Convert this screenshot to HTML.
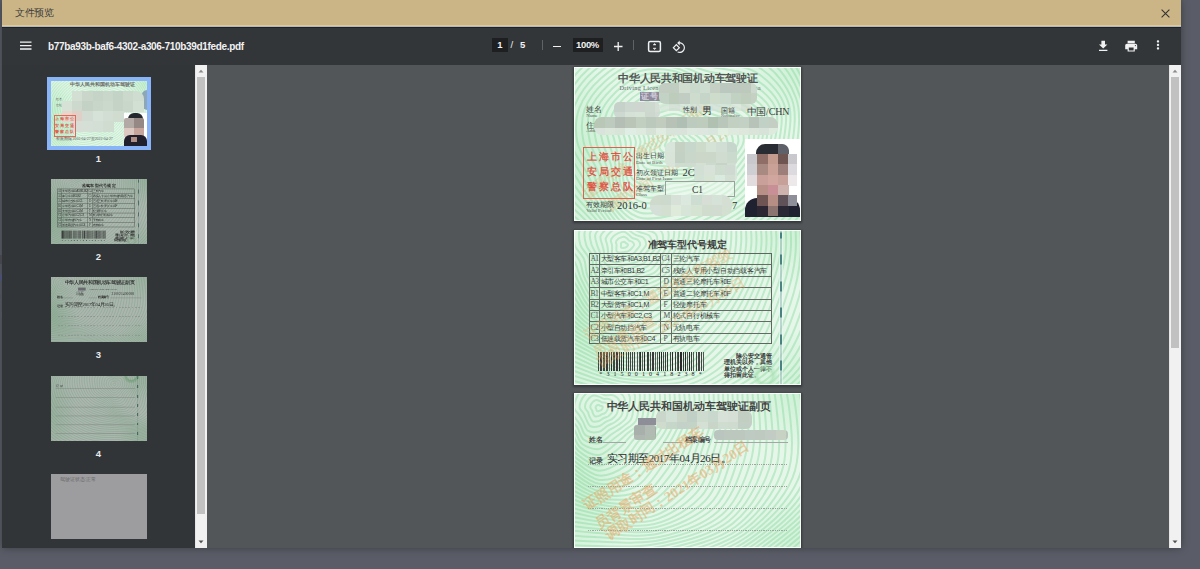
<!DOCTYPE html><html><head><meta charset="utf-8"><style>
*{margin:0;padding:0;box-sizing:border-box}
html,body{width:1200px;height:569px;overflow:hidden;background:#5a5d67;font-family:"Liberation Sans",sans-serif;position:relative}
.a{position:absolute}
#modal{position:absolute;left:2px;top:0;width:1179px;height:548px;background:#323639;box-shadow:0 0 8px rgba(0,0,0,.35)}
#hdr{position:absolute;left:2px;top:0;width:1179px;height:25px;background:#cbb586}
#hdr .t{position:absolute;left:13.2px;top:7px;font-size:9.5px;color:#3c3c3c;line-height:12px;letter-spacing:-0.35px}
#tb{position:absolute;left:2px;top:28px;width:1179px;height:37px;background:#323639}
#side{position:absolute;left:2px;top:65px;width:193px;height:483px;background:#313538;overflow:hidden}
#sscroll{position:absolute;left:195px;top:65px;width:12px;height:483px;background:#f1f1f1;border-left:1px solid #e6e6e6}
#main{position:absolute;left:207px;top:65px;width:962px;height:483px;background:#525659;overflow:hidden}
#mscroll{position:absolute;left:1169px;top:65px;width:12px;height:483px;background:#f1f1f1;border-left:1px solid #e6e6e6}
.lbl{position:absolute;color:#e8eaed;font-size:9.5px;font-weight:bold;width:21px;text-align:center;line-height:10px}
.pg{overflow:hidden;box-shadow:0 1px 2px 1px rgba(0,0,0,.35);background:#dcf3dd}
.tt{position:absolute;color:#f1f1f1;font-size:9.5px;line-height:12px;font-weight:bold}
.box{position:absolute;background:#1d1f21}
.sep{position:absolute;width:1px;height:10px;background:#5f6366;top:40px}
.thumb{transform-origin:0 0}
</style></head><body><svg width="0" height="0" style="position:absolute"><defs><symbol id="w1" viewBox="0 0 227 155"><path d="M103.8 75.0C103.9 75.4 103.9 76.0 103.7 76.3C103.4 76.7 102.8 76.8 102.4 77.1C102.0 77.3 101.6 77.5 101.2 77.6C100.9 77.7 100.4 77.8 100.0 77.8C99.6 77.8 99.2 77.7 98.8 77.6C98.3 77.5 97.7 77.5 97.3 77.3C96.9 77.1 96.4 76.7 96.3 76.3C96.2 75.9 96.7 75.4 96.9 75.0C97.0 74.6 97.2 74.4 97.3 74.0C97.4 73.7 97.3 73.1 97.5 72.8C97.7 72.5 98.2 72.2 98.6 72.1C99.0 71.9 99.5 71.8 100.0 71.8C100.5 71.8 101.0 71.8 101.4 72.0C101.8 72.2 102.0 72.8 102.2 73.1C102.4 73.4 102.4 73.7 102.7 74.0C103.0 74.3 103.6 74.6 103.8 75.0M109.7 75.0C110.1 76.0 109.8 77.4 109.2 78.3C108.5 79.2 106.9 79.6 105.9 80.2C104.9 80.7 104.2 81.3 103.2 81.7C102.2 82.0 101.1 82.2 100.0 82.2C98.9 82.1 98.0 81.8 96.9 81.6C95.7 81.4 94.1 81.6 93.1 81.0C92.1 80.5 90.9 79.3 90.8 78.3C90.7 77.3 91.9 76.0 92.3 75.0C92.6 74.0 92.8 73.4 93.0 72.5C93.2 71.6 93.0 70.2 93.6 69.4C94.1 68.6 95.4 68.0 96.5 67.6C97.6 67.2 98.8 67.0 100.0 67.0C101.2 66.9 102.6 67.0 103.5 67.5C104.5 68.1 104.9 69.5 105.4 70.3C106.0 71.1 106.2 71.7 107.0 72.5C107.7 73.3 109.4 74.0 109.7 75.0M115.9 75.0C116.4 76.6 115.6 78.9 114.5 80.2C113.4 81.6 111.0 82.3 109.4 83.2C107.9 84.1 106.7 85.2 105.1 85.7C103.5 86.3 101.7 86.4 100.0 86.4C98.3 86.4 96.8 86.0 94.9 85.7C93.0 85.4 90.3 85.7 88.7 84.8C87.1 83.9 85.6 81.9 85.5 80.2C85.4 78.6 87.3 76.6 87.9 75.0C88.4 73.4 88.3 72.4 88.6 70.9C88.9 69.4 88.6 67.2 89.6 65.9C90.6 64.7 92.6 63.8 94.4 63.2C96.1 62.5 98.1 62.0 100.0 62.0C101.9 62.0 104.2 62.2 105.6 63.2C107.1 64.1 107.6 66.3 108.5 67.6C109.5 68.9 110.2 69.6 111.4 70.9C112.7 72.1 115.4 73.4 115.9 75.0M122.2 75.0C122.8 77.1 121.2 80.2 119.6 82.1C118.1 83.9 115.0 84.9 112.9 86.2C110.8 87.5 109.2 89.1 107.1 89.8C104.9 90.6 102.4 90.6 100.0 90.6C97.6 90.6 95.5 90.3 92.9 90.0C90.2 89.6 86.3 90.0 84.2 88.7C82.1 87.4 80.5 84.3 80.4 82.0C80.3 79.8 83.0 77.1 83.6 75.0C84.2 72.9 83.6 71.3 83.9 69.2C84.3 67.1 84.2 64.2 85.6 62.4C87.0 60.7 89.9 59.7 92.3 58.8C94.7 57.9 97.4 57.0 100.0 57.0C102.6 57.0 105.7 57.6 107.7 58.9C109.6 60.2 110.1 63.3 111.5 65.0C113.0 66.7 114.4 67.5 116.1 69.2C117.9 70.9 121.6 72.9 122.2 75.0M128.6 75.0C129.2 77.7 126.6 81.5 124.5 83.8C122.5 86.2 118.9 87.5 116.3 89.2C113.8 90.9 111.7 93.0 109.0 93.9C106.3 94.9 103.0 94.7 100.0 94.8C97.0 94.9 94.2 94.7 90.8 94.4C87.4 94.0 82.2 94.4 79.7 92.7C77.2 90.9 75.7 86.7 75.7 83.8C75.6 80.8 78.8 77.7 79.4 75.0C79.9 72.3 78.7 70.1 79.1 67.5C79.4 64.8 79.7 61.1 81.5 58.9C83.4 56.8 87.1 55.6 90.2 54.4C93.3 53.2 96.8 51.9 100.0 52.0C103.2 52.1 107.2 53.1 109.6 54.8C112.0 56.6 112.6 60.3 114.5 62.4C116.4 64.5 118.8 65.3 121.1 67.4C123.5 69.5 128.0 72.3 128.6 75.0M135.0 75.0C135.4 78.3 131.8 82.7 129.3 85.5C126.7 88.4 122.9 90.1 119.8 92.2C116.8 94.3 114.3 96.9 111.0 98.0C107.7 99.2 103.7 98.8 100.0 98.9C96.3 99.1 92.7 99.4 88.6 99.0C84.4 98.6 78.0 98.9 75.1 96.6C72.2 94.4 71.2 89.0 71.2 85.4C71.2 81.8 74.7 78.3 75.2 75.0C75.6 71.7 73.6 68.9 74.0 65.6C74.4 62.4 75.2 58.1 77.5 55.5C79.9 52.8 84.3 51.4 88.1 50.0C91.8 48.6 96.1 46.8 100.0 46.9C103.9 47.1 108.6 48.8 111.5 50.9C114.4 53.1 114.9 57.4 117.4 59.8C119.9 62.3 123.5 63.0 126.4 65.5C129.3 68.0 134.5 71.7 135.0 75.0M141.3 75.0C141.6 79.0 136.8 83.8 133.8 87.2C130.8 90.6 126.8 92.8 123.3 95.3C119.8 97.8 116.8 100.8 112.9 102.1C109.0 103.4 104.4 102.8 100.0 103.1C95.6 103.3 91.2 104.2 86.3 103.8C81.4 103.4 73.8 103.4 70.6 100.5C67.4 97.7 66.9 91.2 67.0 86.9C67.0 82.6 70.6 78.9 70.9 75.0C71.2 71.1 68.3 67.6 68.8 63.8C69.2 59.9 70.7 55.0 73.5 52.0C76.4 49.0 81.6 47.3 86.0 45.6C90.4 43.9 95.5 41.6 100.0 41.9C104.5 42.1 109.8 44.7 113.2 47.2C116.6 49.8 117.3 54.6 120.4 57.3C123.5 60.0 128.5 60.5 132.0 63.5C135.5 66.4 141.0 71.0 141.3 75.0M147.4 75.0C147.5 79.6 141.6 84.9 138.2 88.8C134.8 92.6 130.8 95.5 126.9 98.4C123.0 101.3 119.3 104.7 114.8 106.1C110.4 107.6 105.2 106.8 100.0 107.2C94.8 107.7 89.5 109.3 83.9 108.8C78.3 108.3 69.7 107.8 66.2 104.4C62.7 101.0 63.0 93.2 63.1 88.3C63.1 83.4 66.4 79.4 66.5 75.0C66.5 70.6 62.9 66.2 63.4 61.8C63.9 57.4 66.2 52.0 69.6 48.6C73.0 45.1 78.8 43.0 83.8 41.1C88.9 39.1 94.8 36.4 100.0 36.8C105.2 37.3 111.0 40.8 114.9 43.8C118.8 46.7 119.6 51.7 123.4 54.6C127.3 57.5 133.9 58.0 137.9 61.4C141.9 64.8 147.4 70.4 147.4 75.0M153.4 75.0C153.1 80.2 146.3 85.9 142.4 90.3C138.6 94.7 134.7 98.2 130.5 101.5C126.2 104.8 121.8 108.4 116.7 110.1C111.6 111.7 105.9 110.8 100.0 111.5C94.1 112.1 87.8 114.6 81.4 114.0C75.1 113.5 65.6 112.2 61.9 108.1C58.2 104.1 59.4 95.1 59.4 89.6C59.4 84.1 62.1 80.0 61.9 75.0C61.6 70.0 57.2 64.8 57.9 59.8C58.5 54.9 61.8 49.1 65.7 45.2C69.7 41.3 76.0 38.8 81.7 36.5C87.4 34.3 94.2 31.2 100.0 31.9C105.8 32.5 112.0 37.1 116.4 40.5C120.9 43.8 122.0 48.7 126.6 51.8C131.2 54.9 139.5 55.3 144.0 59.2C148.5 63.0 153.7 69.8 153.4 75.0M158.9 75.0C158.4 80.8 151.1 87.0 147.0 91.9C142.8 96.8 138.8 101.0 134.1 104.6C129.3 108.3 124.1 111.8 118.4 113.7C112.8 115.6 106.6 115.1 100.0 116.1C93.4 117.1 85.8 120.3 78.8 119.5C71.8 118.7 61.9 116.2 58.1 111.5C54.2 106.7 56.0 97.0 55.8 90.9C55.6 84.8 57.3 80.5 56.8 75.0C56.3 69.5 51.8 63.5 52.6 57.9C53.5 52.4 57.4 46.2 61.9 41.8C66.3 37.5 73.0 34.1 79.4 31.7C85.7 29.2 93.6 26.3 100.0 27.3C106.4 28.3 112.8 33.9 117.9 37.5C122.9 41.0 124.9 45.4 130.3 48.7C135.7 51.9 145.4 52.5 150.1 56.9C154.9 61.3 159.5 69.2 158.9 75.0M164.3 75.0C163.5 81.5 155.9 88.1 151.5 93.5C147.0 99.0 142.8 103.7 137.6 107.7C132.4 111.7 126.4 115.1 120.1 117.3C113.9 119.5 107.3 119.7 100.0 121.0C92.7 122.3 83.8 126.1 76.2 125.0C68.6 123.9 58.4 120.1 54.4 114.6C50.5 109.1 52.7 98.8 52.2 92.2C51.7 85.6 52.4 81.0 51.6 75.0C50.8 69.0 46.3 62.1 47.3 56.0C48.4 49.9 53.0 43.3 57.9 38.4C62.9 33.5 70.0 29.3 77.0 26.8C84.0 24.2 93.0 21.7 100.0 23.0C107.0 24.3 113.6 30.7 119.3 34.5C125.0 38.2 128.0 41.9 134.1 45.3C140.3 48.7 151.3 49.8 156.3 54.7C161.4 59.7 165.1 68.5 164.3 75.0M169.5 75.0C168.4 82.1 160.7 89.2 155.9 95.1C151.2 101.1 146.8 106.4 141.1 110.7C135.4 115.0 128.7 118.4 121.9 120.9C115.0 123.5 108.1 124.5 100.0 126.1C91.9 127.7 81.7 131.9 73.6 130.5C65.4 129.1 55.2 123.8 51.0 117.6C46.9 111.4 49.4 100.6 48.6 93.5C47.8 86.4 47.4 81.6 46.3 75.0C45.2 68.4 40.8 60.8 42.0 54.1C43.3 47.4 48.5 40.3 53.9 34.9C59.3 29.5 67.0 24.6 74.7 21.9C82.4 19.2 92.3 17.3 100.0 18.9C107.7 20.5 114.4 27.6 120.7 31.5C127.1 35.3 131.2 38.3 138.2 41.8C145.2 45.3 157.3 46.9 162.5 52.5C167.8 58.0 170.6 67.9 169.5 75.0M174.6 75.0C173.3 82.7 165.4 90.3 160.4 96.7C155.3 103.2 150.6 109.0 144.5 113.7C138.4 118.3 131.0 121.6 123.6 124.6C116.2 127.6 108.8 129.6 100.0 131.4C91.2 133.3 79.7 137.8 71.0 135.9C62.3 134.1 52.1 127.2 47.8 120.4C43.5 113.5 46.2 102.4 45.0 94.8C43.9 87.2 42.2 82.1 40.8 75.0C39.4 67.9 35.2 59.5 36.7 52.2C38.2 44.9 43.9 37.2 49.8 31.4C55.8 25.5 64.0 19.8 72.4 17.1C80.8 14.3 91.7 13.2 100.0 15.0C108.3 16.9 115.1 24.6 122.2 28.4C129.3 32.2 134.7 34.4 142.5 38.1C150.2 41.7 163.3 44.1 168.7 50.3C174.1 56.4 176.0 67.3 174.6 75.0M179.3 75.0C177.6 83.4 170.0 91.4 164.8 98.3C159.6 105.3 154.6 111.7 148.1 116.8C141.5 121.8 133.5 125.2 125.5 128.6C117.5 132.0 109.5 134.9 100.0 136.9C90.5 139.0 77.8 143.3 68.6 141.0C59.4 138.6 49.5 130.4 44.9 122.9C40.3 115.4 42.8 104.2 41.1 96.2C39.5 88.2 36.5 82.7 34.8 75.0C33.2 67.3 29.5 58.1 31.3 50.3C33.2 42.4 39.4 34.3 45.9 28.0C52.4 21.7 61.2 15.3 70.3 12.6C79.3 9.8 91.1 9.3 100.0 11.3C108.9 13.4 116.0 21.1 123.8 24.9C131.7 28.7 138.6 30.2 147.0 34.1C155.5 38.0 169.2 41.3 174.6 48.1C180.0 55.0 180.9 66.6 179.3 75.0M183.6 75.0C181.7 84.0 174.5 92.4 169.2 99.9C163.9 107.4 158.7 114.5 151.8 120.0C144.8 125.5 136.2 129.1 127.5 132.8C118.9 136.5 110.2 140.3 100.0 142.4C89.8 144.6 76.0 148.5 66.3 145.7C56.7 142.8 47.1 133.3 42.2 125.3C37.3 117.3 39.2 106.1 36.9 97.7C34.7 89.3 30.4 83.2 28.6 75.0C26.7 66.8 23.7 56.7 26.0 48.3C28.2 39.9 35.1 31.4 42.1 24.7C49.2 18.0 58.6 11.1 68.2 8.3C77.9 5.4 90.4 5.5 100.0 7.6C109.6 9.8 117.0 17.4 125.7 21.1C134.3 24.9 142.7 25.8 151.8 30.0C160.9 34.1 174.9 38.6 180.2 46.1C185.5 53.6 185.4 66.0 183.6 75.0M187.8 75.0C185.9 84.6 179.1 93.5 173.7 101.6C168.3 109.6 162.8 117.3 155.4 123.2C148.1 129.1 138.8 132.9 129.6 137.1C120.3 141.2 110.9 145.8 100.0 148.0C89.1 150.2 74.2 153.6 64.2 150.2C54.1 146.8 44.8 136.1 39.5 127.6C34.3 119.1 35.4 108.1 32.6 99.3C29.7 90.5 24.2 83.8 22.2 75.0C20.3 66.2 18.0 55.4 20.7 46.4C23.4 37.5 30.8 28.4 38.3 21.4C45.9 14.3 55.9 6.9 66.2 4.0C76.5 1.1 89.8 1.8 100.0 4.0C110.2 6.2 118.1 13.6 127.5 17.2C137.0 20.8 147.0 21.3 156.6 25.8C166.3 30.3 180.3 36.0 185.5 44.2C190.7 52.4 189.8 65.4 187.8 75.0M192.1 75.0C190.0 85.1 183.8 94.6 178.3 103.2C172.8 111.8 166.9 120.0 159.1 126.4C151.3 132.8 141.5 136.9 131.6 141.4C121.8 146.0 111.6 151.5 100.0 153.7C88.4 155.9 72.6 158.6 62.1 154.6C51.6 150.6 42.6 138.8 36.9 129.9C31.2 120.9 31.5 110.1 28.0 100.9C24.5 91.8 18.0 84.4 15.9 75.0C13.8 65.6 12.5 54.1 15.6 44.6C18.7 35.1 26.4 25.5 34.5 18.1C42.6 10.6 53.3 2.8 64.2 -0.1C75.1 -3.1 89.1 -1.7 100.0 0.5C110.9 2.7 119.3 9.6 129.5 13.1C139.8 16.6 151.3 16.6 161.5 21.5C171.7 26.4 185.6 33.4 190.7 42.3C195.8 51.2 194.1 64.9 192.1 75.0M196.3 75.0C194.2 85.7 188.6 95.8 183.0 104.9C177.4 114.0 170.9 122.7 162.7 129.5C154.5 136.4 144.2 140.9 133.7 145.8C123.3 150.8 112.3 157.2 100.0 159.4C87.7 161.5 71.0 163.3 60.1 158.8C49.1 154.2 40.5 141.5 34.3 132.1C28.2 122.8 27.3 112.2 23.2 102.7C19.0 93.2 11.7 85.0 9.6 75.0C7.5 65.0 6.9 52.8 10.5 42.8C14.0 32.7 22.0 22.5 30.7 14.7C39.3 6.9 50.7 -1.2 62.3 -4.2C73.8 -7.2 88.5 -5.2 100.0 -3.0C111.5 -0.9 120.5 5.4 131.6 8.7C142.6 12.1 155.7 12.0 166.4 17.3C177.1 22.6 190.7 30.9 195.7 40.5C200.7 50.1 198.5 64.3 196.3 75.0M200.6 75.0C198.5 86.3 193.5 97.0 187.7 106.6C182.0 116.2 175.0 125.4 166.3 132.7C157.7 140.0 147.0 145.0 135.9 150.4C124.8 155.7 113.0 163.0 100.0 165.1C87.0 167.1 69.6 167.9 58.2 162.8C46.8 157.7 38.4 144.1 31.7 134.4C25.0 124.7 22.9 114.4 18.2 104.5C13.4 94.6 5.4 85.6 3.3 75.0C1.2 64.4 1.5 51.5 5.4 40.9C9.3 30.3 17.6 19.5 26.8 11.4C36.0 3.2 48.2 -5.2 60.4 -8.2C72.6 -11.2 87.8 -8.6 100.0 -6.5C112.2 -4.5 121.8 1.0 133.7 4.2C145.6 7.5 160.1 7.3 171.2 13.1C182.4 18.8 195.6 28.5 200.5 38.8C205.4 49.1 202.8 63.7 200.6 75.0M205.0 75.0C202.9 86.9 198.4 98.2 192.5 108.3C186.7 118.5 179.0 128.0 169.9 135.8C160.9 143.6 149.8 149.2 138.1 155.0C126.4 160.8 113.6 168.8 100.0 170.7C86.4 172.6 68.2 172.2 56.4 166.6C44.5 160.9 36.3 146.8 29.0 136.7C21.8 126.7 18.3 116.6 13.0 106.3C7.7 96.1 -0.8 86.2 -2.9 75.0C-5.0 63.8 -3.9 50.3 0.4 39.1C4.8 28.0 13.2 16.5 22.9 8.0C32.6 -0.6 45.7 -9.0 58.5 -12.1C71.4 -15.1 87.1 -12.0 100.0 -10.1C112.9 -8.2 123.3 -3.6 135.9 -0.5C148.6 2.7 164.5 2.6 176.0 8.9C187.6 15.1 200.3 26.1 205.1 37.2C209.9 48.2 207.1 63.1 205.0 75.0M209.4 75.0C207.4 87.4 203.3 99.4 197.4 110.1C191.4 120.7 183.0 130.7 173.5 138.9C164.0 147.2 152.6 153.5 140.4 159.7C128.1 165.9 114.3 174.6 100.0 176.3C85.7 178.1 66.9 176.4 54.6 170.2C42.4 164.0 34.1 149.4 26.3 139.1C18.5 128.8 13.5 118.9 7.6 108.3C1.8 97.6 -7.1 86.8 -9.1 75.0C-11.1 63.2 -9.2 49.1 -4.5 37.4C0.2 25.6 8.8 13.5 19.0 4.6C29.2 -4.3 43.2 -12.8 56.7 -15.8C70.2 -18.9 86.4 -15.4 100.0 -13.7C113.6 -11.9 124.8 -8.4 138.3 -5.3C151.7 -2.3 168.9 -2.1 180.8 4.7C192.7 11.6 204.7 23.8 209.5 35.6C214.3 47.3 211.4 62.6 209.4 75.0M213.9 75.0C212.0 88.0 208.3 100.6 202.2 111.8C196.0 123.0 187.1 133.3 177.1 142.1C167.2 150.9 155.5 157.9 142.7 164.6C129.8 171.2 114.9 180.3 100.0 181.8C85.1 183.3 65.8 180.4 53.0 173.7C40.2 167.0 31.9 152.1 23.5 141.6C15.0 131.0 8.6 121.3 2.2 110.2C-4.3 99.1 -13.2 87.4 -15.1 75.0C-17.1 62.6 -14.5 47.9 -9.5 35.6C-4.4 23.3 4.4 10.4 15.2 1.2C25.9 -8.0 40.9 -16.4 55.0 -19.5C69.1 -22.6 85.7 -18.9 100.0 -17.4C114.3 -15.9 126.4 -13.4 140.7 -10.4C154.9 -7.4 173.3 -6.7 185.4 0.7C197.6 8.1 209.1 21.6 213.8 34.0C218.6 46.4 215.9 62.0 213.9 75.0M218.6 75.0C216.7 88.5 213.3 101.8 207.0 113.5C200.7 125.2 191.1 135.9 180.8 145.2C170.4 154.5 158.5 162.5 145.0 169.5C131.6 176.5 115.6 186.0 100.0 187.2C84.4 188.5 64.7 184.2 51.4 177.0C38.2 169.8 29.7 154.9 20.5 144.1C11.4 133.3 3.5 123.8 -3.4 112.3C-10.4 100.7 -19.3 88.1 -21.1 75.0C-22.9 61.9 -19.8 46.6 -14.4 33.8C-9.0 20.9 0.0 7.3 11.3 -2.1C22.6 -11.6 38.5 -19.9 53.3 -23.0C68.1 -26.2 85.0 -22.4 100.0 -21.2C115.0 -19.9 128.1 -18.5 143.1 -15.6C158.1 -12.6 177.5 -11.3 190.0 -3.2C202.5 4.8 213.2 19.5 218.0 32.5C222.7 45.5 220.4 61.5 218.6 75.0M223.3 75.0C221.6 89.0 218.3 103.0 211.8 115.3C205.3 127.5 195.1 138.5 184.4 148.4C173.7 158.3 161.5 167.2 147.4 174.5C133.4 181.9 116.3 191.5 100.0 192.5C83.7 193.4 63.7 187.8 49.9 180.2C36.1 172.6 27.3 157.8 17.4 146.8C7.6 135.8 -1.7 126.3 -9.1 114.3C-16.5 102.3 -25.3 88.7 -27.0 75.0C-28.7 61.3 -25.1 45.4 -19.4 32.0C-13.6 18.6 -4.4 4.3 7.4 -5.5C19.3 -15.2 36.2 -23.2 51.7 -26.5C67.1 -29.8 84.3 -26.1 100.0 -25.1C115.7 -24.2 129.9 -23.9 145.7 -20.9C161.4 -17.9 181.7 -15.7 194.4 -7.1C207.1 1.6 217.2 17.4 222.0 31.0C226.9 44.7 225.0 61.0 223.3 75.0M228.1 75.0C226.5 89.6 223.3 104.2 216.6 117.0C209.9 129.8 199.2 141.1 188.1 151.6C177.0 162.0 164.5 172.0 149.9 179.7C135.2 187.3 116.9 197.0 100.0 197.6C83.1 198.2 62.7 191.3 48.4 183.3C34.1 175.3 24.8 160.7 14.2 149.6C3.7 138.4 -7.1 128.8 -14.9 116.4C-22.7 104.0 -31.1 89.4 -32.7 75.0C-34.3 60.6 -30.4 44.2 -24.4 30.2C-18.3 16.2 -8.7 1.2 3.7 -8.8C16.1 -18.8 34.0 -26.5 50.1 -29.9C66.1 -33.3 83.6 -29.8 100.0 -29.2C116.4 -28.6 131.8 -29.3 148.2 -26.3C164.7 -23.2 185.7 -20.1 198.7 -10.8C211.6 -1.5 221.1 15.3 226.1 29.6C231.0 43.9 229.7 60.4 228.1 75.0M233.0 75.0C231.6 90.1 228.2 105.4 221.4 118.7C214.5 132.0 203.3 143.8 191.8 154.8C180.3 165.9 167.6 176.9 152.3 184.9C137.0 192.8 117.6 202.3 100.0 202.5C82.4 202.7 61.9 194.6 47.0 186.3C32.1 177.9 22.1 163.8 10.9 152.5C-0.4 141.2 -12.5 131.4 -20.7 118.5C-28.9 105.6 -36.9 90.0 -38.4 75.0C-39.8 60.0 -35.7 42.9 -29.4 28.4C-23.0 13.9 -13.1 -1.8 -0.1 -12.0C12.9 -22.3 31.8 -29.6 48.5 -33.2C65.2 -36.7 82.9 -33.7 100.0 -33.5C117.1 -33.3 133.7 -35.0 150.9 -31.8C168.0 -28.6 189.6 -24.3 202.8 -14.4C216.0 -4.4 225.0 13.3 230.0 28.2C235.1 43.1 234.5 59.9 233.0 75.0M238.0 75.0C236.7 90.6 233.2 106.6 226.1 120.4C219.0 134.3 207.5 146.5 195.6 158.2C183.8 169.8 170.8 181.9 154.8 190.1C138.9 198.3 118.2 207.4 100.0 207.2C81.8 207.1 61.0 197.9 45.6 189.2C30.1 180.6 19.4 167.0 7.3 155.6C-4.7 144.1 -18.0 134.0 -26.5 120.6C-35.1 107.1 -42.7 90.7 -44.0 75.0C-45.3 59.3 -41.1 41.6 -34.4 26.6C-27.7 11.6 -17.3 -4.7 -3.8 -15.2C9.8 -25.7 29.6 -32.6 46.9 -36.4C64.2 -40.2 82.2 -37.8 100.0 -38.0C117.8 -38.1 135.7 -40.6 153.5 -37.3C171.3 -33.9 193.3 -28.5 206.7 -17.8C220.1 -7.1 228.8 11.3 234.0 26.7C239.2 42.2 239.3 59.4 238.0 75.0M243.1 75.0C241.9 91.1 238.1 107.7 230.8 122.1C223.6 136.5 211.8 149.3 199.5 161.6C187.3 173.8 173.9 187.0 157.4 195.4C140.8 203.8 118.9 212.3 100.0 211.8C81.1 211.2 60.2 201.0 44.2 192.2C28.1 183.4 16.4 170.4 3.7 158.8C-9.1 147.2 -23.5 136.6 -32.3 122.7C-41.2 108.7 -48.3 91.3 -49.5 75.0C-50.7 58.7 -46.5 40.3 -39.5 24.8C-32.5 9.2 -21.5 -7.6 -7.3 -18.3C6.8 -29.1 27.5 -35.6 45.4 -39.6C63.3 -43.7 81.5 -42.1 100.0 -42.6C118.5 -43.2 137.7 -46.4 156.1 -42.8C174.5 -39.2 196.9 -32.5 210.5 -21.1C224.2 -9.8 232.5 9.3 238.0 25.3C243.4 41.3 244.3 58.9 243.1 75.0M248.2 75.0C247.1 91.7 242.9 108.8 235.5 123.8C228.0 138.8 216.1 152.2 203.5 165.0C190.9 177.8 177.1 192.2 159.9 200.7C142.6 209.2 119.5 217.0 100.0 216.1C80.5 215.2 59.4 204.2 42.7 195.2C26.1 186.2 13.3 173.8 -0.2 162.1C-13.6 150.3 -29.0 139.3 -38.1 124.7C-47.2 110.2 -53.9 92.0 -54.9 75.0C-56.0 58.0 -51.9 39.0 -44.6 22.9C-37.2 6.9 -25.6 -10.4 -10.8 -21.4C3.9 -32.3 25.4 -38.5 43.9 -42.9C62.3 -47.2 80.9 -46.6 100.0 -47.5C119.1 -48.4 139.7 -52.2 158.8 -48.3C177.8 -44.5 200.3 -36.3 214.2 -24.3C228.1 -12.3 236.3 7.3 242.0 23.9C247.6 40.4 249.3 58.3 248.2 75.0M253.4 75.0C252.4 92.2 247.8 109.9 240.2 125.5C232.5 141.1 220.6 155.2 207.6 168.6C194.6 182.0 180.3 197.3 162.4 205.9C144.4 214.5 120.2 221.5 100.0 220.2C79.8 218.9 58.7 207.3 41.3 198.2C23.9 189.1 10.1 177.4 -4.1 165.5C-18.3 153.6 -34.4 141.9 -43.8 126.8C-53.2 111.7 -59.4 92.6 -60.3 75.0C-61.3 57.4 -57.4 37.6 -49.7 21.1C-42.0 4.5 -29.6 -13.1 -14.2 -24.3C1.1 -35.5 23.3 -41.4 42.3 -46.1C61.3 -50.8 80.2 -51.3 100.0 -52.6C119.8 -53.9 141.7 -58.0 161.4 -53.8C181.0 -49.6 203.6 -40.1 217.7 -27.4C231.8 -14.7 240.1 5.3 246.0 22.4C252.0 39.5 254.3 57.8 253.4 75.0M258.6 75.0C257.7 92.7 252.6 111.0 244.8 127.2C237.0 143.4 225.1 158.2 211.8 172.2C198.4 186.2 183.5 202.5 164.8 211.1C146.2 219.8 120.8 225.8 100.0 224.1C79.2 222.5 57.8 210.5 39.8 201.3C21.8 192.2 6.7 181.2 -8.2 169.1C-23.1 157.0 -39.9 144.5 -49.5 128.8C-59.1 113.2 -64.9 93.3 -65.7 75.0C-66.6 56.7 -62.8 36.3 -54.8 19.2C-46.8 2.2 -33.5 -15.8 -17.5 -27.2C-1.6 -38.7 21.1 -44.3 40.7 -49.4C60.3 -54.5 79.5 -56.2 100.0 -57.9C120.5 -59.5 143.7 -63.8 163.9 -59.2C184.1 -54.6 206.8 -43.7 221.1 -30.3C235.5 -17.0 243.9 3.4 250.2 20.9C256.4 38.5 259.4 57.3 258.6 75.0M263.8 75.0C262.9 93.2 257.4 112.0 249.5 128.8C241.5 145.7 229.8 161.4 216.1 175.9C202.4 190.5 186.6 207.6 167.3 216.2C147.9 224.9 121.5 229.8 100.0 227.9C78.5 225.9 57.0 213.8 38.3 204.6C19.5 195.4 3.2 185.0 -12.4 172.7C-27.9 160.4 -45.2 147.1 -55.0 130.8C-64.8 114.6 -70.3 93.9 -71.1 75.0C-71.9 56.1 -68.3 34.9 -59.9 17.4C-51.5 -0.1 -37.2 -18.3 -20.7 -30.0C-4.2 -41.7 19.0 -47.3 39.1 -52.8C59.2 -58.4 78.8 -61.4 100.0 -63.3C121.2 -65.3 145.7 -69.5 166.4 -64.5C187.2 -59.4 209.8 -47.2 224.4 -33.2C239.1 -19.2 247.8 1.4 254.4 19.4C260.9 37.4 264.6 56.8 263.8 75.0" fill="none" stroke="#bdeac9" stroke-width="2.0"/></symbol><symbol id="w2" viewBox="0 0 227 155"><path d="M54.0 15.0C54.0 15.4 53.5 15.8 53.2 16.2C53.0 16.5 52.7 16.8 52.3 17.0C52.0 17.3 51.6 17.5 51.3 17.6C50.9 17.8 50.4 17.7 50.0 17.7C49.6 17.8 49.1 17.9 48.6 17.9C48.1 17.9 47.4 17.8 47.1 17.5C46.8 17.2 46.9 16.5 46.9 16.1C46.9 15.7 47.1 15.4 47.1 15.0C47.1 14.6 46.8 14.2 46.9 13.9C46.9 13.5 47.2 13.1 47.4 12.8C47.7 12.5 48.2 12.3 48.6 12.1C49.0 11.9 49.6 11.7 50.0 11.7C50.4 11.8 50.9 12.1 51.3 12.4C51.6 12.6 51.7 13.0 52.0 13.3C52.3 13.5 52.9 13.5 53.3 13.8C53.6 14.1 54.0 14.6 54.0 15.0M60.1 15.0C60.0 16.0 58.8 17.1 58.1 17.9C57.4 18.8 56.7 19.5 55.9 20.1C55.1 20.8 54.2 21.4 53.2 21.7C52.2 21.9 51.1 21.7 50.0 21.9C48.9 22.0 47.6 22.6 46.4 22.5C45.2 22.5 43.4 22.1 42.7 21.3C42.1 20.5 42.4 18.8 42.4 17.8C42.3 16.7 42.7 15.9 42.6 15.0C42.5 14.1 41.8 13.0 41.9 12.1C42.1 11.2 42.8 10.1 43.6 9.4C44.3 8.6 45.4 8.1 46.5 7.6C47.6 7.2 48.9 6.5 50.0 6.7C51.1 6.8 52.2 7.9 53.1 8.5C53.9 9.2 54.2 10.0 55.1 10.6C56.0 11.1 57.7 11.2 58.5 11.9C59.3 12.7 60.2 14.0 60.1 15.0M66.1 15.0C65.9 16.6 63.9 18.2 62.8 19.6C61.7 21.0 60.8 22.3 59.5 23.3C58.2 24.3 56.6 25.1 55.0 25.6C53.5 26.1 51.8 25.8 50.0 26.1C48.2 26.4 46.0 27.6 44.1 27.4C42.2 27.2 39.5 26.4 38.4 25.0C37.4 23.7 38.1 21.0 38.1 19.3C38.0 17.6 38.2 16.5 38.0 15.0C37.8 13.5 36.6 11.8 36.9 10.3C37.1 8.8 38.4 7.2 39.7 6.0C40.9 4.8 42.6 3.8 44.3 3.1C46.0 2.3 48.2 1.4 50.0 1.7C51.8 2.0 53.5 3.8 54.8 4.8C56.2 5.8 56.8 6.9 58.3 7.8C59.8 8.7 62.7 8.8 64.0 10.0C65.3 11.2 66.3 13.4 66.1 15.0M71.9 15.0C71.5 17.2 68.9 19.4 67.4 21.3C66.0 23.2 64.9 25.1 63.1 26.4C61.4 27.8 59.1 28.8 56.9 29.5C54.7 30.1 52.5 30.0 50.0 30.5C47.5 31.0 44.3 32.7 41.7 32.4C39.1 32.1 35.6 30.6 34.3 28.7C33.0 26.7 34.1 23.1 34.0 20.8C33.8 18.5 33.6 17.1 33.2 15.0C32.9 12.9 31.3 10.5 31.7 8.4C32.2 6.4 34.1 4.3 35.8 2.7C37.6 1.0 39.7 -0.6 42.1 -1.6C44.5 -2.5 47.6 -3.6 50.0 -3.1C52.4 -2.6 54.6 -0.0 56.5 1.3C58.5 2.7 59.4 3.8 61.6 4.9C63.8 6.0 67.9 6.2 69.6 7.9C71.4 9.6 72.2 12.8 71.9 15.0M77.5 15.0C76.9 17.9 73.8 20.5 72.0 22.9C70.2 25.4 69.0 27.9 66.8 29.6C64.6 31.3 61.5 32.4 58.7 33.3C55.9 34.2 53.2 34.3 50.0 35.0C46.8 35.7 42.6 38.0 39.3 37.5C36.0 37.0 31.9 34.7 30.3 32.1C28.8 29.6 30.3 25.1 30.0 22.2C29.7 19.4 28.9 17.6 28.3 15.0C27.7 12.4 25.9 9.2 26.5 6.5C27.2 3.9 29.8 1.5 32.0 -0.7C34.2 -2.8 36.9 -5.1 39.9 -6.3C42.9 -7.5 47.0 -8.5 50.0 -7.8C53.0 -7.1 55.6 -3.7 58.1 -2.0C60.6 -0.4 62.2 0.5 65.1 1.8C68.0 3.2 73.4 3.6 75.5 5.8C77.5 8.0 78.1 12.1 77.5 15.0M82.9 15.0C82.1 18.5 78.7 21.6 76.6 24.6C74.5 27.5 73.1 30.7 70.4 32.8C67.7 34.8 63.9 35.9 60.5 37.0C57.1 38.2 54.0 38.7 50.0 39.6C46.0 40.6 40.7 43.5 36.8 42.7C32.9 42.0 28.3 38.6 26.6 35.4C24.8 32.2 26.7 27.0 26.1 23.6C25.6 20.2 23.9 18.2 23.1 15.0C22.3 11.8 20.5 7.8 21.3 4.7C22.2 1.5 25.4 -1.4 28.1 -4.0C30.9 -6.6 34.0 -9.6 37.6 -11.0C41.3 -12.4 46.3 -13.3 50.0 -12.4C53.7 -11.4 56.5 -7.1 59.7 -5.3C62.8 -3.5 65.2 -2.9 68.8 -1.4C72.5 0.1 79.1 1.0 81.4 3.7C83.7 6.4 83.7 11.5 82.9 15.0M88.1 15.0C87.1 19.1 83.5 22.7 81.2 26.2C78.8 29.7 77.2 33.5 74.0 35.9C70.9 38.3 66.3 39.3 62.3 40.7C58.2 42.2 54.7 43.3 50.0 44.5C45.3 45.7 38.8 49.1 34.3 48.0C29.8 47.0 25.0 42.3 23.0 38.5C21.0 34.6 23.2 28.9 22.3 25.0C21.5 21.1 18.8 18.7 17.7 15.0C16.7 11.3 15.0 6.5 16.1 2.8C17.2 -0.9 21.1 -4.3 24.3 -7.4C27.5 -10.5 31.0 -14.3 35.3 -15.8C39.6 -17.4 45.7 -17.9 50.0 -16.7C54.3 -15.5 57.4 -10.5 61.2 -8.5C65.0 -6.5 68.4 -6.5 72.8 -4.8C77.2 -3.1 84.8 -1.8 87.4 1.5C89.9 4.8 89.2 10.9 88.1 15.0M93.1 15.0C91.9 19.7 88.4 23.9 85.8 27.9C83.2 31.9 81.2 36.3 77.6 39.0C74.0 41.8 68.6 42.6 64.0 44.4C59.4 46.2 55.4 48.1 50.0 49.6C44.6 51.1 36.8 54.7 31.7 53.3C26.7 52.0 21.9 45.8 19.7 41.3C17.5 36.8 19.7 30.7 18.5 26.4C17.2 22.0 13.4 19.2 12.2 15.0C10.9 10.8 9.6 5.2 11.0 0.9C12.3 -3.4 16.7 -7.2 20.4 -10.8C24.1 -14.4 28.1 -19.0 33.0 -20.6C38.0 -22.3 45.1 -22.3 50.0 -20.8C54.9 -19.3 58.2 -13.7 62.7 -11.7C67.2 -9.6 71.9 -10.3 77.0 -8.5C82.1 -6.6 90.6 -4.5 93.3 -0.6C96.0 3.3 94.4 10.3 93.1 15.0M98.0 15.0C96.5 20.4 93.2 25.1 90.4 29.6C87.6 34.1 85.3 39.0 81.1 42.1C77.0 45.2 71.0 45.9 65.8 48.1C60.6 50.3 56.1 53.3 50.0 55.0C43.9 56.8 34.8 60.4 29.2 58.6C23.7 56.7 19.1 49.1 16.7 44.0C14.2 38.8 16.3 32.6 14.6 27.8C12.8 22.9 7.9 19.8 6.4 15.0C5.0 10.2 4.2 4.0 5.9 -0.9C7.5 -5.8 12.3 -10.1 16.4 -14.2C20.6 -18.3 25.1 -23.7 30.7 -25.4C36.3 -27.2 44.4 -26.3 50.0 -24.6C55.6 -22.8 59.0 -17.0 64.3 -15.0C69.5 -12.9 75.6 -14.3 81.4 -12.3C87.2 -10.3 96.4 -7.2 99.1 -2.7C101.9 1.9 99.4 9.6 98.0 15.0M103.0 15.0C101.4 21.0 98.3 26.3 95.2 31.3C92.1 36.3 88.9 41.4 84.3 44.8C79.7 48.3 73.3 49.3 67.6 52.0C61.9 54.7 56.8 58.9 50.0 60.8C43.2 62.7 33.0 65.8 27.0 63.4C20.9 61.0 16.6 52.2 13.8 46.5C11.0 40.8 12.3 34.6 10.2 29.3C8.0 24.1 2.4 20.3 0.8 15.0C-0.7 9.7 -1.0 2.8 0.9 -2.7C2.8 -8.2 7.5 -13.4 12.1 -17.9C16.7 -22.5 22.2 -28.4 28.5 -30.0C34.9 -31.7 43.8 -29.9 50.0 -28.0C56.2 -26.1 60.0 -20.6 66.0 -18.7C72.0 -16.7 79.6 -18.6 86.0 -16.3C92.4 -14.0 101.7 -9.9 104.5 -4.6C107.4 0.6 104.5 9.0 103.0 15.0M107.9 15.0C106.3 21.6 103.4 27.6 99.9 33.0C96.5 38.4 92.5 43.7 87.4 47.6C82.4 51.4 75.8 52.9 69.6 56.1C63.3 59.3 57.5 64.8 50.0 66.8C42.5 68.8 31.3 71.0 24.8 68.0C18.3 65.0 14.1 55.1 11.0 48.9C7.8 42.8 8.3 36.6 5.7 31.0C3.1 25.3 -3.1 20.9 -4.8 15.0C-6.4 9.1 -6.3 1.6 -4.2 -4.5C-2.1 -10.6 2.6 -16.8 7.8 -21.7C12.9 -26.7 19.4 -32.8 26.5 -34.4C33.5 -36.0 43.1 -33.2 50.0 -31.2C56.9 -29.2 61.1 -24.4 67.9 -22.6C74.7 -20.8 83.7 -23.0 90.7 -20.4C97.6 -17.7 106.9 -12.4 109.8 -6.5C112.7 -0.7 109.6 8.4 107.9 15.0M112.9 15.0C111.1 22.2 108.3 28.8 104.6 34.7C100.8 40.5 96.0 45.9 90.5 50.2C85.0 54.5 78.4 56.7 71.6 60.4C64.9 64.2 58.2 70.8 50.0 72.8C41.8 74.8 29.6 75.9 22.7 72.4C15.7 68.8 11.8 58.0 8.2 51.3C4.6 44.7 4.2 38.7 1.1 32.6C-2.0 26.6 -8.7 21.5 -10.4 15.0C-12.1 8.5 -11.6 0.4 -9.3 -6.4C-7.0 -13.1 -2.3 -20.2 3.4 -25.6C9.0 -30.9 16.7 -37.1 24.5 -38.6C32.2 -40.1 42.4 -36.4 50.0 -34.4C57.6 -32.4 62.3 -28.3 69.9 -26.7C77.4 -25.0 87.9 -27.5 95.4 -24.5C102.9 -21.4 112.1 -15.0 115.0 -8.4C117.9 -1.8 114.6 7.8 112.9 15.0M117.8 15.0C116.0 22.8 113.1 30.0 109.1 36.3C105.1 42.6 99.5 48.1 93.6 52.9C87.7 57.7 81.1 60.7 73.8 65.0C66.5 69.3 58.9 77.0 50.0 78.9C41.1 80.8 28.1 80.7 20.7 76.5C13.3 72.3 9.6 60.7 5.5 53.7C1.5 46.6 0.0 40.7 -3.6 34.3C-7.2 27.9 -14.2 22.1 -16.1 15.0C-17.9 7.9 -17.1 -0.9 -14.6 -8.3C-12.1 -15.7 -7.2 -23.7 -1.0 -29.4C5.1 -35.1 14.1 -41.2 22.6 -42.6C31.1 -43.9 41.8 -39.4 50.0 -37.5C58.2 -35.6 63.6 -32.5 71.9 -31.0C80.3 -29.5 92.1 -32.1 100.2 -28.6C108.2 -25.2 117.1 -17.5 120.1 -10.2C123.0 -3.0 119.6 7.2 117.8 15.0M122.5 15.0C120.7 23.3 118.0 31.1 113.7 38.0C109.5 44.8 103.2 50.5 97.0 55.8C90.7 61.1 83.9 65.0 76.1 69.8C68.3 74.6 59.5 82.9 50.0 84.7C40.5 86.4 26.8 85.0 18.9 80.2C11.1 75.4 7.4 63.4 2.7 56.1C-1.9 48.7 -4.6 43.0 -8.8 36.2C-12.9 29.3 -20.1 22.7 -21.9 15.0C-23.8 7.3 -22.5 -2.1 -19.7 -10.1C-16.9 -18.1 -11.9 -27.0 -5.2 -33.0C1.6 -39.0 11.6 -44.9 20.8 -46.3C30.0 -47.6 41.1 -42.7 50.0 -40.9C58.9 -39.2 65.1 -37.2 74.2 -35.8C83.4 -34.5 96.5 -36.7 104.9 -32.7C113.3 -28.7 121.8 -19.9 124.7 -11.9C127.6 -3.9 124.3 6.7 122.5 15.0M127.2 15.0C125.4 23.9 122.9 32.3 118.5 39.7C114.0 47.0 107.2 53.1 100.5 58.9C93.8 64.8 86.9 69.5 78.5 74.7C70.0 79.9 60.2 88.7 50.0 90.2C39.8 91.7 25.7 88.8 17.3 83.6C9.0 78.3 5.1 66.2 -0.2 58.6C-5.4 51.0 -9.6 45.4 -14.3 38.1C-18.9 30.9 -26.1 23.3 -27.9 15.0C-29.6 6.7 -27.9 -3.4 -24.7 -11.9C-21.6 -20.5 -16.4 -30.1 -9.1 -36.4C-1.8 -42.7 9.3 -48.4 19.1 -49.8C29.0 -51.2 40.4 -46.1 50.0 -44.6C59.6 -43.1 66.7 -42.3 76.7 -41.0C86.6 -39.6 100.7 -41.3 109.5 -36.7C118.2 -32.1 126.0 -22.1 129.0 -13.4C131.9 -4.8 128.9 6.1 127.2 15.0M131.9 15.0C130.3 24.4 127.8 33.5 123.2 41.4C118.6 49.2 111.1 55.6 104.1 62.0C97.0 68.4 89.9 74.2 80.9 79.8C71.8 85.4 60.8 94.4 50.0 95.5C39.2 96.7 24.7 92.5 15.8 86.8C6.9 81.1 2.7 69.0 -3.2 61.3C-9.1 53.5 -14.8 47.9 -19.9 40.2C-24.9 32.5 -32.0 24.0 -33.7 15.0C-35.3 6.0 -33.2 -4.6 -29.8 -13.7C-26.3 -22.9 -20.9 -33.2 -13.0 -39.8C-5.1 -46.4 7.0 -51.8 17.5 -53.2C28.0 -54.7 39.7 -49.6 50.0 -48.5C60.3 -47.3 68.5 -47.5 79.2 -46.2C89.8 -44.9 104.9 -45.8 113.9 -40.6C122.9 -35.4 130.1 -24.2 133.1 -14.9C136.1 -5.7 133.6 5.6 131.9 15.0M136.7 15.0C135.2 24.9 132.8 34.7 127.9 43.1C123.1 51.4 115.1 58.2 107.7 65.2C100.3 72.2 92.9 79.0 83.3 84.9C73.7 90.9 61.5 99.9 50.0 100.7C38.5 101.6 23.7 96.1 14.3 90.0C4.9 83.8 0.3 72.0 -6.4 64.0C-13.0 56.1 -20.0 50.4 -25.5 42.2C-31.0 34.0 -37.9 24.6 -39.4 15.0C-41.0 5.4 -38.6 -5.9 -34.9 -15.6C-31.1 -25.3 -25.3 -36.3 -16.9 -43.1C-8.4 -50.0 4.8 -55.0 15.9 -56.6C27.0 -58.1 39.0 -53.3 50.0 -52.5C61.0 -51.6 70.3 -52.9 81.7 -51.6C93.1 -50.2 109.0 -50.2 118.2 -44.3C127.5 -38.5 134.2 -26.3 137.2 -16.4C140.3 -6.5 138.3 5.1 136.7 15.0M141.7 15.0C140.2 25.4 137.6 35.8 132.6 44.7C127.5 53.6 119.2 60.8 111.4 68.4C103.6 76.0 96.0 83.9 85.8 90.2C75.6 96.4 62.2 105.3 50.0 105.8C37.8 106.2 22.8 99.5 12.8 93.0C2.9 86.5 -2.3 75.0 -9.7 66.9C-17.0 58.8 -25.3 52.9 -31.2 44.3C-37.1 35.6 -43.6 25.3 -45.1 15.0C-46.6 4.7 -44.0 -7.2 -40.0 -17.4C-35.9 -27.6 -29.7 -39.4 -20.7 -46.4C-11.6 -53.5 2.6 -58.2 14.3 -59.9C26.1 -61.6 38.3 -57.1 50.0 -56.6C61.7 -56.2 72.2 -58.5 84.3 -57.0C96.4 -55.6 112.9 -54.5 122.4 -47.9C131.9 -41.4 138.1 -28.4 141.3 -17.9C144.5 -7.4 143.1 4.6 141.7 15.0M146.6 15.0C145.3 26.0 142.5 37.0 137.2 46.4C132.0 55.9 123.3 63.5 115.2 71.7C107.0 79.8 99.2 89.0 88.3 95.5C77.5 102.0 62.8 110.5 50.0 110.6C37.2 110.7 21.9 102.8 11.4 96.0C0.9 89.2 -5.1 78.2 -13.1 69.9C-21.2 61.6 -30.7 55.5 -37.0 46.3C-43.2 37.2 -49.3 25.9 -50.7 15.0C-52.0 4.1 -49.5 -8.5 -45.1 -19.3C-40.7 -30.0 -34.0 -42.4 -24.4 -49.7C-14.7 -57.0 0.4 -61.2 12.8 -63.1C25.2 -65.0 37.6 -61.1 50.0 -61.0C62.4 -60.9 74.2 -64.1 86.9 -62.5C99.7 -60.9 116.7 -58.6 126.4 -51.4C136.1 -44.2 142.0 -30.4 145.4 -19.3C148.7 -8.3 148.0 4.0 146.6 15.0M151.7 15.0C150.4 26.5 147.3 38.1 141.8 48.1C136.4 58.1 127.5 66.2 119.0 75.0C110.5 83.8 102.4 94.1 90.9 100.8C79.4 107.5 63.5 115.5 50.0 115.2C36.5 114.9 21.1 106.0 10.0 99.0C-1.1 92.0 -8.0 81.5 -16.7 73.0C-25.5 64.6 -36.1 58.1 -42.7 48.4C-49.3 38.7 -55.0 26.6 -56.2 15.0C-57.5 3.4 -55.0 -9.8 -50.3 -21.1C-45.6 -32.4 -38.3 -45.3 -28.0 -52.8C-17.7 -60.4 -1.7 -64.1 11.3 -66.2C24.3 -68.4 37.0 -65.3 50.0 -65.6C63.0 -65.9 76.2 -69.9 89.6 -68.1C102.9 -66.3 120.3 -62.7 130.3 -54.8C140.3 -46.9 145.8 -32.4 149.4 -20.8C153.0 -9.2 153.0 3.5 151.7 15.0M156.8 15.0C155.6 27.0 152.0 39.1 146.4 49.7C140.8 60.3 131.8 69.0 123.0 78.4C114.1 87.8 105.6 99.3 93.4 106.1C81.2 113.0 64.1 120.3 50.0 119.6C35.9 118.9 20.3 109.2 8.6 102.0C-3.2 94.8 -11.0 84.9 -20.5 76.3C-30.0 67.7 -41.5 60.6 -48.4 50.4C-55.2 40.2 -60.5 27.2 -61.7 15.0C-62.9 2.8 -60.5 -11.2 -55.5 -23.0C-50.4 -34.8 -42.4 -48.2 -31.5 -55.9C-20.7 -63.6 -3.8 -67.0 9.8 -69.4C23.4 -71.8 36.3 -69.7 50.0 -70.4C63.7 -71.1 78.2 -75.6 92.2 -73.6C106.2 -71.5 123.8 -66.6 134.0 -58.1C144.2 -49.5 149.7 -34.5 153.5 -22.3C157.3 -10.1 158.0 3.0 156.8 15.0M161.9 15.0C160.8 27.5 156.8 40.2 151.0 51.4C145.1 62.5 136.2 72.0 127.0 82.0C117.8 92.0 108.8 104.5 95.9 111.4C83.1 118.4 64.8 124.9 50.0 123.8C35.2 122.7 19.5 112.4 7.1 105.0C-5.3 97.6 -14.2 88.4 -24.4 79.7C-34.6 70.9 -46.9 63.2 -54.0 52.5C-61.2 41.7 -66.1 27.9 -67.2 15.0C-68.3 2.1 -66.1 -12.6 -60.7 -24.9C-55.3 -37.2 -46.5 -50.9 -35.0 -58.9C-23.5 -66.8 -5.9 -69.9 8.3 -72.6C22.4 -75.3 35.6 -74.3 50.0 -75.4C64.4 -76.5 80.2 -81.4 94.8 -79.0C109.4 -76.7 127.1 -70.4 137.6 -61.2C148.1 -52.0 153.6 -36.5 157.6 -23.8C161.7 -11.1 163.0 2.5 161.9 15.0M167.0 15.0C166.0 28.0 161.5 41.2 155.5 53.0C149.5 64.8 140.7 75.0 131.2 85.6C121.7 96.2 112.0 109.7 98.4 116.7C84.9 123.7 65.5 129.3 50.0 127.8C34.5 126.4 18.7 115.6 5.6 108.1C-7.4 100.7 -17.5 92.1 -28.4 83.1C-39.2 74.2 -52.2 65.8 -59.6 54.5C-67.0 43.1 -71.6 28.5 -72.6 15.0C-73.7 1.5 -71.6 -14.0 -65.9 -26.7C-60.2 -39.5 -50.4 -53.6 -38.3 -61.8C-26.2 -70.0 -8.0 -72.7 6.7 -75.8C21.4 -79.0 34.9 -79.1 50.0 -80.6C65.1 -82.0 82.2 -87.2 97.4 -84.4C112.5 -81.7 130.4 -74.1 141.1 -64.2C151.8 -54.4 157.5 -38.5 161.8 -25.3C166.1 -12.1 168.1 2.0 167.0 15.0M172.1 15.0C171.1 28.6 166.2 42.3 160.1 54.6C154.0 67.0 145.3 78.1 135.4 89.3C125.6 100.5 115.2 114.8 100.9 121.9C86.7 128.9 66.1 133.4 50.0 131.6C33.9 129.9 17.9 118.8 4.1 111.3C-9.6 103.8 -20.9 95.9 -32.5 86.7C-44.0 77.6 -57.5 68.4 -65.1 56.5C-72.7 44.5 -77.1 29.2 -78.1 15.0C-79.1 0.8 -77.2 -15.4 -71.1 -28.6C-65.0 -41.9 -54.2 -56.1 -41.5 -64.6C-28.8 -73.0 -10.1 -75.6 5.2 -79.1C20.4 -82.7 34.2 -84.2 50.0 -86.0C65.8 -87.7 84.1 -92.9 99.9 -89.7C115.6 -86.6 133.4 -77.6 144.5 -67.1C155.5 -56.7 161.5 -40.5 166.1 -26.8C170.7 -13.1 173.1 1.4 172.1 15.0M177.3 15.0C176.3 29.1 170.9 43.3 164.7 56.3C158.4 69.3 150.0 81.3 139.8 93.1C129.6 104.9 118.3 119.9 103.3 127.0C88.4 134.0 66.8 137.4 50.0 135.3C33.2 133.2 17.0 122.1 2.5 114.6C-11.9 107.1 -24.5 99.7 -36.7 90.4C-48.9 81.0 -62.7 71.0 -70.6 58.4C-78.4 45.9 -82.6 29.8 -83.6 15.0C-84.5 0.2 -82.8 -16.8 -76.3 -30.5C-69.8 -44.2 -57.9 -58.6 -44.6 -67.3C-31.3 -75.9 -12.2 -78.5 3.5 -82.6C19.3 -86.6 33.5 -89.4 50.0 -91.5C66.5 -93.6 86.1 -98.5 102.4 -94.9C118.6 -91.3 136.4 -81.1 147.8 -70.0C159.1 -58.9 165.5 -42.5 170.4 -28.4C175.3 -14.2 178.2 0.9 177.3 15.0M182.3 15.0C181.4 29.7 175.7 44.3 169.3 58.0C163.0 71.6 154.9 84.7 144.3 97.0C133.7 109.3 121.4 125.0 105.7 131.9C90.0 138.9 67.5 141.1 50.0 138.8C32.5 136.5 16.1 125.5 0.9 118.1C-14.3 110.6 -28.1 103.7 -40.9 94.1C-53.7 84.5 -67.9 73.5 -75.9 60.4C-83.9 47.2 -88.1 30.4 -89.1 15.0C-90.0 -0.4 -88.3 -18.2 -81.4 -32.3C-74.5 -46.5 -61.5 -60.9 -47.6 -69.9C-33.7 -78.8 -14.4 -81.5 1.8 -86.1C18.1 -90.6 32.8 -94.9 50.0 -97.2C67.2 -99.5 87.9 -104.0 104.8 -100.0C121.6 -95.9 139.3 -84.5 151.0 -72.8C162.6 -61.1 169.6 -44.6 174.8 -30.0C180.1 -15.3 183.3 0.3 182.3 15.0M187.4 15.0C186.5 30.2 180.5 45.3 174.0 59.7C167.6 74.0 159.9 88.1 148.9 101.0C137.8 113.8 124.5 129.9 108.0 136.7C91.5 143.6 68.1 144.7 50.0 142.2C31.9 139.7 15.1 129.1 -0.8 121.7C-16.7 114.3 -31.9 107.7 -45.3 97.8C-58.6 87.9 -73.0 76.1 -81.2 62.3C-89.4 48.5 -93.7 31.1 -94.6 15.0C-95.5 -1.1 -93.8 -19.6 -86.5 -34.2C-79.1 -48.7 -65.0 -63.2 -50.5 -72.4C-36.1 -81.7 -16.7 -84.7 0.1 -89.8C16.8 -94.9 32.2 -100.5 50.0 -103.0C67.8 -105.5 89.7 -109.4 107.1 -104.8C124.4 -100.3 142.1 -87.8 154.1 -75.6C166.2 -63.3 173.8 -46.7 179.3 -31.6C184.9 -16.5 188.3 -0.2 187.4 15.0M192.4 15.0C191.6 30.8 185.3 46.4 178.8 61.4C172.3 76.4 164.9 91.7 153.5 105.0C142.0 118.3 127.5 134.6 110.2 141.4C93.0 148.1 68.8 148.2 50.0 145.5C31.2 142.8 14.0 132.8 -2.6 125.5C-19.2 118.1 -35.6 111.8 -49.6 101.6C-63.6 91.4 -78.0 78.6 -86.4 64.1C-94.9 49.7 -99.3 31.7 -100.2 15.0C-101.0 -1.7 -99.3 -21.0 -91.5 -36.0C-83.7 -50.9 -68.3 -65.3 -53.4 -74.9C-38.4 -84.5 -19.0 -88.0 -1.8 -93.6C15.5 -99.3 31.5 -106.2 50.0 -108.9C68.5 -111.6 91.5 -114.7 109.3 -109.6C127.2 -104.5 144.9 -91.0 157.3 -78.3C169.7 -65.6 178.0 -48.8 183.9 -33.2C189.7 -17.7 193.2 -0.8 192.4 15.0M197.4 15.0C196.6 31.3 190.3 47.5 183.7 63.2C177.2 78.8 170.1 95.3 158.2 109.0C146.3 122.8 130.4 139.2 112.3 145.9C94.3 152.5 69.5 151.5 50.0 148.8C30.5 146.0 12.8 136.6 -4.5 129.4C-21.8 122.2 -39.4 116.0 -53.9 105.4C-68.5 94.8 -82.9 81.1 -91.6 66.0C-100.2 50.9 -105.0 32.3 -105.8 15.0C-106.6 -2.3 -104.6 -22.3 -96.3 -37.7C-88.1 -53.1 -71.6 -67.3 -56.2 -77.3C-40.8 -87.3 -21.4 -91.4 -3.7 -97.7C14.0 -103.9 30.8 -112.1 50.0 -114.8C69.2 -117.6 93.1 -119.8 111.5 -114.1C129.9 -108.5 147.6 -94.2 160.4 -81.0C173.2 -67.8 182.3 -50.9 188.5 -34.9C194.6 -18.9 198.2 -1.3 197.4 15.0M202.3 15.0C201.6 31.9 195.3 48.6 188.8 65.0C182.2 81.3 175.3 99.0 162.9 113.1C150.5 127.3 133.2 143.6 114.4 150.1C95.6 156.6 70.1 154.8 50.0 152.0C29.9 149.2 11.6 140.6 -6.4 133.5C-24.5 126.4 -43.3 120.1 -58.3 109.2C-73.3 98.2 -87.8 83.5 -96.7 67.8C-105.6 52.1 -110.7 32.9 -111.4 15.0C-112.2 -2.9 -109.8 -23.6 -101.1 -39.4C-92.3 -55.2 -74.9 -69.3 -59.0 -79.8C-43.1 -90.2 -23.9 -95.1 -5.7 -101.9C12.5 -108.8 30.1 -118.0 50.0 -120.8C69.9 -123.6 94.7 -124.7 113.6 -118.5C132.5 -112.4 150.3 -97.4 163.5 -83.7C176.8 -70.1 186.7 -53.0 193.1 -36.6C199.6 -20.1 203.0 -1.9 202.3 15.0M207.2 15.0C206.5 32.5 200.5 49.8 193.9 66.8C187.3 83.9 180.5 102.7 167.6 117.2C154.6 131.8 135.9 147.9 116.3 154.2C96.7 160.5 70.8 158.0 50.0 155.2C29.2 152.5 10.3 144.8 -8.5 137.7C-27.2 130.7 -47.1 124.3 -62.6 112.9C-78.2 101.6 -92.7 86.0 -101.8 69.7C-110.9 53.3 -116.5 33.5 -117.1 15.0C-117.8 -3.5 -114.9 -24.9 -105.7 -41.1C-96.4 -57.3 -78.1 -71.3 -61.7 -82.2C-45.4 -93.0 -26.4 -98.9 -7.8 -106.3C10.8 -113.8 29.4 -124.0 50.0 -126.8C70.6 -129.5 96.2 -129.5 115.6 -122.8C135.1 -116.1 153.0 -100.6 166.7 -86.5C180.4 -72.4 191.1 -55.2 197.8 -38.2C204.6 -21.3 207.8 -2.5 207.2 15.0M212.1 15.0C211.5 33.1 205.9 51.0 199.2 68.8C192.6 86.5 185.8 106.4 172.3 121.3C158.8 136.2 138.5 151.9 118.2 158.1C97.8 164.3 71.5 161.2 50.0 158.5C28.5 155.9 8.9 149.1 -10.6 142.1C-30.0 135.2 -50.9 128.4 -66.9 116.7C-83.0 104.9 -97.5 88.4 -106.8 71.5C-116.2 54.5 -122.2 34.0 -122.8 15.0C-123.3 -4.0 -119.9 -26.1 -110.1 -42.7C-100.4 -59.3 -81.2 -73.2 -64.5 -84.6C-47.8 -96.0 -29.1 -102.9 -10.0 -111.0C9.1 -119.0 28.7 -130.0 50.0 -132.7C71.3 -135.3 97.6 -134.1 117.6 -126.9C137.6 -119.7 155.7 -103.7 169.9 -89.2C184.0 -74.8 195.5 -57.3 202.6 -39.9C209.6 -22.6 212.6 -3.1 212.1 15.0M217.0 15.0C216.5 33.7 211.4 52.3 204.7 70.7C198.0 89.1 191.0 110.2 176.9 125.4C162.8 140.5 141.1 155.7 119.9 161.8C98.8 167.9 72.1 164.4 50.0 161.9C27.9 159.4 7.5 153.6 -12.7 146.7C-32.9 139.8 -54.6 132.6 -71.2 120.4C-87.7 108.1 -102.3 90.9 -111.9 73.3C-121.4 55.8 -128.1 34.6 -128.5 15.0C-128.9 -4.6 -124.7 -27.2 -114.5 -44.2C-104.3 -61.2 -84.4 -75.1 -67.4 -87.1C-50.3 -99.0 -31.8 -107.2 -12.3 -115.8C7.3 -124.3 28.0 -136.0 50.0 -138.5C72.0 -141.0 99.0 -138.6 119.5 -130.9C140.0 -123.1 158.5 -106.9 173.1 -92.1C187.8 -77.2 200.0 -59.5 207.3 -41.6C214.6 -23.8 217.4 -3.7 217.0 15.0M221.9 15.0C221.6 34.3 217.0 53.7 210.3 72.7C203.6 91.8 196.3 113.9 181.5 129.3C166.7 144.8 143.5 159.3 121.6 165.3C99.7 171.3 72.8 167.7 50.0 165.4C27.2 163.0 6.0 158.2 -14.9 151.3C-35.8 144.4 -58.3 136.7 -75.3 124.0C-92.4 111.3 -107.2 93.3 -117.0 75.1C-126.8 57.0 -133.9 35.1 -134.2 15.0C-134.4 -5.1 -129.3 -28.3 -118.6 -45.7C-108.0 -63.2 -87.6 -77.1 -70.3 -89.6C-52.9 -102.1 -34.7 -111.6 -14.6 -120.7C5.4 -129.8 27.3 -141.9 50.0 -144.2C72.7 -146.6 100.2 -142.9 121.3 -134.7C142.4 -126.5 161.3 -110.1 176.4 -94.9C191.5 -79.7 204.4 -61.7 212.0 -43.3C219.6 -25.0 222.2 -4.3 221.9 15.0M226.8 15.0C226.7 35.0 222.8 55.1 216.0 74.8C209.2 94.5 201.5 117.6 186.0 133.2C170.5 148.9 145.9 162.7 123.2 168.7C100.5 174.6 73.4 171.1 50.0 169.0C26.6 166.9 4.4 163.0 -17.2 156.1C-38.8 149.2 -62.0 140.8 -79.5 127.6C-97.0 114.4 -112.0 95.7 -122.0 77.0C-132.1 58.2 -139.7 35.7 -139.8 15.0C-139.9 -5.7 -133.8 -29.3 -122.7 -47.2C-111.6 -65.1 -90.9 -79.1 -73.3 -92.2C-55.7 -105.3 -37.6 -116.2 -17.1 -125.8C3.5 -135.5 26.6 -147.7 50.0 -149.8C73.4 -151.9 101.5 -147.1 123.1 -138.5C144.7 -129.8 164.2 -113.4 179.8 -97.8C195.3 -82.3 208.8 -63.8 216.7 -45.0C224.5 -26.2 226.9 -5.0 226.8 15.0M231.8 15.0C231.9 35.6 228.8 56.6 221.9 76.9C215.0 97.3 206.5 121.2 190.4 137.0C174.2 152.9 148.1 166.0 124.8 171.9C101.4 177.9 74.0 174.6 50.0 172.7C26.0 170.9 2.8 167.8 -19.5 160.9C-41.8 154.0 -65.6 144.8 -83.6 131.1C-101.5 117.5 -116.9 98.2 -127.2 78.8C-137.5 59.5 -145.5 36.2 -145.4 15.0C-145.3 -6.2 -138.1 -30.3 -126.6 -48.6C-115.1 -66.9 -94.2 -81.1 -76.4 -94.9C-58.5 -108.6 -40.7 -121.0 -19.6 -131.1C1.5 -141.2 25.9 -153.4 50.0 -155.3C74.1 -157.1 102.7 -151.2 124.9 -142.1C147.0 -133.1 167.1 -116.7 183.2 -100.8C199.2 -84.9 213.2 -66.0 221.3 -46.7C229.4 -27.4 231.7 -5.6 231.8 15.0M236.9 15.0C237.2 36.2 234.9 58.1 227.9 79.1C220.8 100.0 211.5 124.7 194.6 140.7C177.7 156.7 150.3 169.1 126.2 175.1C102.1 181.1 74.7 178.2 50.0 176.6C25.3 175.1 1.1 172.8 -21.8 165.8C-44.7 158.8 -69.2 148.8 -87.6 134.7C-106.0 120.5 -121.8 100.6 -132.3 80.7C-142.9 60.7 -151.2 36.8 -150.9 15.0C-150.6 -6.8 -142.3 -31.2 -130.4 -50.0C-118.5 -68.8 -97.6 -83.3 -79.6 -97.7C-61.6 -112.1 -43.7 -126.0 -22.1 -136.5C-0.5 -146.9 25.2 -159.0 50.0 -160.6C74.8 -162.1 103.8 -155.2 126.6 -145.8C149.3 -136.3 170.0 -120.0 186.6 -103.8C203.2 -87.6 217.6 -68.2 225.9 -48.4C234.3 -28.6 236.6 -6.2 236.9 15.0M242.1 15.0C242.6 36.9 241.2 59.7 234.0 81.3C226.7 102.8 216.4 128.1 198.7 144.3C181.0 160.4 152.5 172.1 127.7 178.1C102.9 184.2 75.3 182.0 50.0 180.7C24.7 179.5 -0.6 177.8 -24.2 170.7C-47.7 163.6 -72.7 152.8 -91.6 138.1C-110.5 123.4 -126.7 103.1 -137.5 82.5C-148.3 62.0 -156.9 37.3 -156.3 15.0C-155.7 -7.3 -146.3 -32.0 -134.1 -51.3C-121.9 -70.6 -101.2 -85.6 -83.0 -100.7C-64.8 -115.8 -46.9 -131.1 -24.7 -141.9C-2.6 -152.7 24.5 -164.4 50.0 -165.7C75.5 -166.9 104.9 -159.2 128.3 -149.4C151.6 -139.6 173.1 -123.4 190.1 -106.8C207.1 -90.3 221.9 -70.3 230.5 -50.0C239.2 -29.7 241.5 -6.9 242.1 15.0M247.4 15.0C248.2 37.5 247.5 61.3 240.1 83.5C232.6 105.6 221.1 131.4 202.6 147.7C184.1 164.0 154.6 174.9 129.1 181.1C103.7 187.4 75.9 185.9 50.0 185.0C24.1 184.1 -2.2 182.8 -26.5 175.6C-50.7 168.3 -76.2 156.7 -95.5 141.5C-114.9 126.3 -131.7 105.5 -142.7 84.4C-153.7 63.3 -162.4 37.8 -161.6 15.0C-160.7 -7.8 -150.2 -32.8 -137.7 -52.6C-125.2 -72.4 -104.9 -87.9 -86.6 -103.7C-68.2 -119.5 -50.1 -136.2 -27.4 -147.4C-4.6 -158.5 23.8 -169.7 50.0 -170.6C76.2 -171.5 106.1 -163.1 130.0 -152.9C153.9 -142.8 176.1 -126.8 193.6 -109.9C211.2 -93.0 226.1 -72.5 235.1 -51.7C244.0 -30.8 246.5 -7.5 247.4 15.0M252.8 15.0C253.9 38.2 254.0 63.0 246.3 85.7C238.5 108.4 225.7 134.6 206.4 151.0C187.1 167.4 156.6 177.7 130.6 184.1C104.5 190.5 76.6 190.0 50.0 189.4C23.4 188.8 -3.9 187.9 -28.8 180.5C-53.7 173.1 -79.6 160.6 -99.4 144.9C-119.3 129.2 -136.8 108.0 -148.0 86.3C-159.2 64.7 -167.8 38.4 -166.7 15.0C-165.6 -8.4 -154.1 -33.6 -141.3 -53.9C-128.6 -74.2 -108.8 -90.5 -90.3 -107.0C-71.7 -123.5 -53.4 -141.5 -30.0 -152.9C-6.6 -164.3 23.1 -174.8 50.0 -175.4C76.9 -176.0 107.2 -166.9 131.7 -156.5C156.2 -146.2 179.2 -130.2 197.2 -113.0C215.2 -95.8 230.3 -74.6 239.6 -53.3C248.9 -32.0 251.7 -8.2 252.8 15.0M258.4 15.0C259.8 38.8 260.5 64.7 252.4 87.9C244.4 111.1 230.0 137.6 210.0 154.1C189.9 170.6 158.7 180.5 132.0 187.2C105.3 193.8 77.2 194.3 50.0 194.0C22.8 193.7 -5.6 193.0 -31.2 185.4C-56.7 177.7 -83.0 164.5 -103.3 148.3C-123.7 132.1 -141.9 110.4 -153.3 88.2C-164.7 66.0 -173.1 38.9 -171.7 15.0C-170.3 -8.9 -157.8 -34.3 -144.9 -55.2C-132.0 -76.1 -112.9 -93.2 -94.2 -110.4C-75.4 -127.6 -56.6 -146.8 -32.6 -158.4C-8.6 -170.0 22.3 -179.7 50.0 -180.0C77.7 -180.3 108.3 -170.8 133.4 -160.2C158.6 -149.5 182.4 -133.7 200.8 -116.1C219.2 -98.6 234.5 -76.8 244.1 -54.9C253.7 -33.0 257.0 -8.8 258.4 15.0M264.2 15.0C265.8 39.4 267.1 66.5 258.6 90.1C250.1 113.8 234.2 140.4 213.4 157.1C192.5 173.7 160.7 183.3 133.5 190.2C106.2 197.2 77.8 198.8 50.0 198.8C22.2 198.8 -7.3 198.1 -33.5 190.2C-59.7 182.4 -86.4 168.4 -107.2 151.7C-128.1 135.0 -147.0 112.9 -158.6 90.1C-170.1 67.3 -178.2 39.4 -176.5 15.0C-174.8 -9.4 -161.6 -35.0 -148.5 -56.5C-135.5 -78.0 -117.1 -96.0 -98.2 -113.9C-79.3 -131.8 -59.9 -152.1 -35.2 -163.8C-10.5 -175.6 21.6 -184.4 50.0 -184.4C78.4 -184.4 109.5 -174.7 135.2 -163.8C160.9 -153.0 185.5 -137.1 204.4 -119.3C223.3 -101.4 238.6 -78.9 248.5 -56.5C258.5 -34.1 262.5 -9.4 264.2 15.0M270.1 15.0C272.0 40.1 273.6 68.2 264.7 92.3C255.8 116.5 238.3 143.1 216.6 159.9C195.0 176.7 162.7 186.0 134.9 193.3C107.2 200.6 78.4 203.4 50.0 203.7C21.6 204.0 -8.9 203.1 -35.7 195.0C-62.6 186.9 -89.7 172.2 -111.1 155.1C-132.5 137.9 -152.2 115.4 -163.9 92.0C-175.6 68.7 -183.1 40.0 -181.2 15.0C-179.2 -10.0 -165.3 -35.7 -152.2 -57.8C-139.1 -79.9 -121.5 -99.0 -102.5 -117.6C-83.4 -136.1 -63.2 -157.3 -37.7 -169.2C-12.3 -181.1 20.9 -189.0 50.0 -188.7C79.1 -188.4 110.6 -178.6 137.0 -167.5C163.3 -156.5 188.6 -140.6 208.0 -122.4C227.3 -104.1 242.7 -81.0 253.0 -58.1C263.4 -35.2 268.1 -10.1 270.1 15.0M276.2 15.0C278.4 40.7 280.1 69.9 270.7 94.5C261.3 119.1 242.1 145.6 219.7 162.6C197.4 179.6 164.8 188.9 136.5 196.6C108.2 204.2 79.1 208.2 50.0 208.7C20.9 209.2 -10.5 208.1 -38.0 199.7C-65.5 191.4 -93.1 176.1 -115.0 158.5C-136.9 140.8 -157.4 117.9 -169.2 93.9C-181.0 70.0 -187.9 40.5 -185.7 15.0C-183.5 -10.5 -169.1 -36.5 -156.0 -59.2C-142.9 -81.9 -126.1 -102.2 -106.8 -121.4C-87.5 -140.6 -66.4 -162.6 -40.3 -174.5C-14.1 -186.4 20.2 -193.4 50.0 -192.9C79.8 -192.4 111.8 -182.5 138.7 -171.3C165.7 -160.1 191.8 -144.1 211.6 -125.5C231.4 -106.9 246.7 -83.2 257.5 -59.7C268.3 -36.3 274.0 -10.7 276.2 15.0M282.4 15.0C284.8 41.3 286.5 71.6 276.6 96.6C266.6 121.6 245.8 148.0 222.7 165.2C199.6 182.4 166.9 191.8 138.1 199.9C109.3 208.0 79.7 213.1 50.0 213.8C20.3 214.6 -12.1 213.1 -40.2 204.4C-68.4 195.7 -96.5 180.0 -118.9 161.9C-141.3 143.8 -162.6 120.3 -174.4 95.8C-186.3 71.4 -192.4 41.1 -190.0 15.0C-187.6 -11.1 -173.0 -37.2 -159.9 -60.6C-146.8 -84.0 -130.9 -105.5 -111.3 -125.3C-91.8 -145.1 -69.6 -167.7 -42.7 -179.6C-15.8 -191.6 19.5 -197.7 50.0 -197.0C80.5 -196.2 113.0 -186.5 140.6 -175.1C168.1 -163.7 194.9 -147.6 215.1 -128.6C235.4 -109.6 250.8 -85.3 262.0 -61.4C273.3 -37.4 280.0 -11.3 282.4 15.0M288.8 15.0C291.4 41.9 292.8 73.2 282.3 98.7C271.7 124.1 249.3 150.2 225.6 167.7C201.8 185.1 169.0 194.8 139.7 203.4C110.5 211.9 80.4 218.1 50.0 219.0C19.6 219.9 -13.6 218.0 -42.4 209.0C-71.2 200.1 -100.0 183.9 -122.9 165.3C-145.7 146.8 -167.7 122.7 -179.6 97.7C-191.5 72.6 -196.8 41.6 -194.2 15.0C-191.6 -11.6 -177.0 -38.0 -164.0 -62.1C-150.9 -86.1 -135.8 -108.9 -116.0 -129.3C-96.1 -149.7 -72.8 -172.7 -45.1 -184.6C-17.4 -196.6 18.7 -201.9 50.0 -201.0C81.3 -200.1 114.3 -190.6 142.4 -179.0C170.5 -167.5 198.0 -151.0 218.7 -131.7C239.4 -112.3 255.0 -87.5 266.6 -63.0C278.3 -38.6 286.2 -11.9 288.8 15.0M295.3 15.0C298.0 42.6 299.0 74.8 287.8 100.7C276.7 126.5 252.7 152.4 228.3 170.1C203.9 187.8 171.2 198.0 141.5 207.0C111.7 216.0 81.0 223.2 50.0 224.2C19.0 225.3 -15.1 222.8 -44.6 213.6C-74.1 204.3 -103.5 187.8 -126.8 168.8C-150.2 149.8 -172.8 125.2 -184.7 99.5C-196.6 73.9 -201.1 42.2 -198.3 15.0C-195.5 -12.2 -181.1 -38.9 -168.2 -63.6C-155.2 -88.3 -140.8 -112.4 -120.7 -133.4C-100.5 -154.4 -75.9 -177.6 -47.4 -189.5C-19.0 -201.4 18.0 -206.0 50.0 -205.0C82.0 -203.9 115.6 -194.7 144.3 -183.0C173.0 -171.3 201.0 -154.4 222.2 -134.7C243.4 -115.0 259.1 -89.7 271.3 -64.7C283.5 -39.8 292.5 -12.6 295.3 15.0M301.9 15.0C304.7 43.2 305.0 76.3 293.2 102.6C281.4 128.8 256.0 154.4 231.0 172.4C206.1 190.5 173.4 201.3 143.3 210.8C113.1 220.3 81.7 228.3 50.0 229.5C18.3 230.7 -16.6 227.6 -46.7 218.1C-76.9 208.5 -107.0 191.7 -130.8 172.2C-154.7 152.8 -177.8 127.5 -189.7 101.3C-201.6 75.1 -205.1 42.8 -202.3 15.0C-199.4 -12.8 -185.4 -39.8 -172.6 -65.2C-159.8 -90.6 -145.9 -116.1 -125.5 -137.6C-105.0 -159.1 -78.9 -182.4 -49.7 -194.2C-20.4 -206.1 17.4 -210.1 50.0 -208.9C82.6 -207.7 116.9 -198.8 146.2 -186.9C175.5 -175.1 204.0 -157.8 225.7 -137.7C247.3 -117.7 263.4 -91.9 276.1 -66.4C288.8 -41.0 299.0 -13.2 301.9 15.0M308.5 15.0C311.4 43.8 310.8 77.8 298.3 104.4C285.8 131.1 259.2 156.4 233.7 174.7C208.2 193.1 175.8 204.7 145.1 214.7C114.5 224.7 82.3 233.5 50.0 234.8C17.7 236.1 -18.1 232.4 -48.9 222.6C-79.7 212.7 -110.6 195.7 -134.9 175.8C-159.2 155.9 -182.7 129.9 -194.6 103.1C-206.5 76.3 -209.1 43.3 -206.2 15.0C-203.3 -13.3 -189.9 -40.7 -177.2 -66.9C-164.6 -93.0 -151.2 -119.8 -130.3 -141.8C-109.4 -163.8 -81.9 -187.0 -51.8 -198.8C-21.8 -210.6 16.7 -214.1 50.0 -212.8C83.3 -211.5 118.3 -203.0 148.1 -191.0C178.0 -179.0 207.0 -161.2 229.1 -140.7C251.2 -120.3 267.7 -94.2 281.0 -68.2C294.2 -42.2 305.7 -13.8 308.5 15.0" fill="none" stroke="#bdeac9" stroke-width="2.0"/></symbol><symbol id="w3" viewBox="0 0 227 155"><path d="M28.6 15.0C28.5 15.4 28.3 15.8 28.1 16.1C27.9 16.5 27.7 16.8 27.3 17.0C27.0 17.3 26.6 17.3 26.2 17.5C25.8 17.6 25.5 17.9 25.0 18.0C24.5 18.2 23.8 18.4 23.4 18.3C23.0 18.1 22.7 17.5 22.5 17.2C22.3 16.8 22.4 16.3 22.3 16.0C22.2 15.6 21.8 15.4 21.7 15.0C21.6 14.6 21.6 14.2 21.7 13.8C21.9 13.5 22.2 13.1 22.5 12.8C22.8 12.5 23.1 12.0 23.5 11.9C24.0 11.8 24.6 11.9 25.0 12.0C25.4 12.2 25.7 12.6 26.1 12.8C26.5 12.9 27.0 12.8 27.4 12.9C27.8 13.1 28.5 13.3 28.7 13.7C28.9 14.0 28.7 14.6 28.6 15.0M34.0 15.0C33.7 16.0 33.4 17.0 32.9 17.8C32.4 18.7 31.7 19.6 30.9 20.1C30.1 20.7 28.9 20.7 28.0 21.2C27.0 21.7 26.2 22.5 25.0 22.9C23.8 23.3 22.0 23.8 21.0 23.3C20.0 22.9 19.4 21.3 18.9 20.3C18.4 19.3 18.5 18.4 18.1 17.5C17.7 16.6 16.7 15.9 16.5 15.0C16.2 14.1 16.4 13.0 16.7 12.0C17.1 11.1 17.8 10.2 18.5 9.4C19.3 8.6 20.2 7.4 21.3 7.2C22.3 6.9 23.9 7.3 25.0 7.7C26.1 8.1 26.7 9.0 27.7 9.3C28.8 9.6 30.1 9.2 31.2 9.6C32.3 10.0 33.8 10.7 34.3 11.7C34.8 12.6 34.2 14.0 34.0 15.0M39.2 15.0C38.8 16.7 38.5 18.2 37.7 19.6C36.9 20.9 35.7 22.2 34.4 23.2C33.1 24.1 31.3 24.2 29.8 25.0C28.2 25.8 26.9 27.4 25.0 28.0C23.1 28.5 20.2 29.1 18.6 28.3C17.1 27.6 16.2 24.9 15.4 23.3C14.7 21.8 14.6 20.4 13.9 19.0C13.2 17.6 11.5 16.5 11.2 15.0C10.8 13.5 11.2 11.7 11.7 10.2C12.3 8.7 13.3 7.2 14.5 5.9C15.8 4.6 17.3 2.8 19.0 2.5C20.8 2.1 23.3 3.0 25.0 3.6C26.7 4.1 27.7 5.4 29.4 5.8C31.1 6.2 33.5 5.4 35.3 6.1C37.0 6.7 39.2 8.2 39.9 9.6C40.5 11.1 39.6 13.3 39.2 15.0M44.4 15.0C43.9 17.3 43.6 19.4 42.5 21.3C41.4 23.1 39.6 24.9 37.8 26.1C36.0 27.4 33.7 27.7 31.6 28.9C29.5 30.0 27.5 32.6 25.0 33.3C22.5 34.0 18.5 34.4 16.3 33.2C14.2 32.0 13.3 28.3 12.2 26.1C11.1 24.0 10.7 22.4 9.6 20.5C8.5 18.7 6.2 17.0 5.7 15.0C5.2 13.0 6.0 10.5 6.8 8.4C7.6 6.3 8.8 4.1 10.5 2.4C12.1 0.6 14.4 -1.7 16.8 -2.2C19.2 -2.6 22.6 -1.0 25.0 -0.3C27.4 0.4 28.7 1.7 31.1 2.2C33.5 2.6 37.1 1.5 39.5 2.4C41.9 3.3 44.5 5.6 45.3 7.7C46.1 9.8 44.8 12.7 44.4 15.0M49.4 15.0C48.9 17.9 48.7 20.7 47.3 23.0C45.9 25.4 43.4 27.4 41.1 29.0C38.8 30.6 36.2 31.2 33.5 32.8C30.8 34.5 28.2 37.9 25.0 38.8C21.8 39.6 16.7 39.6 14.1 37.9C11.4 36.3 10.5 31.5 9.1 28.9C7.6 26.2 6.6 24.5 5.2 22.1C3.7 19.8 0.8 17.6 0.2 15.0C-0.3 12.4 0.8 9.4 1.8 6.6C2.8 3.9 4.2 1.0 6.3 -1.3C8.4 -3.5 11.5 -6.3 14.7 -6.7C17.8 -7.2 22.0 -4.9 25.0 -4.0C28.0 -3.2 29.8 -2.0 32.9 -1.6C36.1 -1.2 40.9 -2.6 43.9 -1.4C46.8 -0.2 49.7 3.0 50.6 5.8C51.6 8.5 50.0 12.1 49.4 15.0M54.5 15.0C53.9 18.5 53.8 22.0 52.1 24.8C50.4 27.6 47.1 29.8 44.4 31.8C41.6 33.9 38.7 34.8 35.5 36.9C32.2 39.0 28.9 43.6 25.0 44.5C21.1 45.4 15.1 44.6 11.9 42.4C8.8 40.3 8.0 34.6 6.1 31.5C4.2 28.4 2.4 26.6 0.5 23.8C-1.4 21.1 -4.7 18.2 -5.3 15.0C-5.9 11.8 -4.4 8.2 -3.2 4.9C-1.9 1.5 -0.6 -2.3 2.1 -4.9C4.7 -7.6 8.7 -10.7 12.6 -11.1C16.4 -11.5 21.3 -8.4 25.0 -7.5C28.7 -6.6 30.9 -6.0 34.8 -5.6C38.7 -5.2 44.8 -6.9 48.3 -5.3C51.8 -3.7 54.8 0.5 55.8 3.9C56.8 7.3 55.1 11.5 54.5 15.0M59.5 15.0C58.9 19.1 58.9 23.2 56.9 26.5C54.8 29.7 50.8 32.1 47.5 34.6C44.3 37.1 41.3 38.6 37.5 41.3C33.8 43.9 29.6 49.3 25.0 50.2C20.4 51.2 13.6 49.4 9.9 46.7C6.3 44.0 5.5 37.6 3.1 34.0C0.7 30.5 -1.9 28.7 -4.3 25.5C-6.6 22.4 -10.2 18.7 -10.8 15.0C-11.5 11.3 -9.6 7.0 -8.2 3.1C-6.7 -0.9 -5.4 -5.6 -2.2 -8.7C0.9 -11.7 6.0 -14.9 10.6 -15.3C15.1 -15.7 20.6 -11.9 25.0 -11.0C29.4 -10.0 32.2 -10.1 36.8 -9.8C41.5 -9.6 48.9 -11.2 52.9 -9.2C56.9 -7.2 59.6 -1.9 60.8 2.1C61.9 6.2 60.2 10.9 59.5 15.0M64.6 15.0C64.0 19.6 63.9 24.4 61.6 28.2C59.2 31.9 54.3 34.4 50.7 37.3C47.0 40.3 43.9 42.7 39.7 45.8C35.4 48.9 30.3 55.3 25.0 56.1C19.7 56.9 12.1 53.9 8.0 50.7C3.9 47.4 3.1 40.5 0.2 36.6C-2.7 32.7 -6.5 30.9 -9.2 27.3C-12.0 23.7 -15.7 19.4 -16.3 15.0C-17.0 10.6 -14.9 5.8 -13.2 1.2C-11.6 -3.3 -10.2 -9.1 -6.6 -12.5C-2.9 -15.9 3.4 -18.9 8.7 -19.2C14.0 -19.6 20.0 -15.1 25.0 -14.3C30.0 -13.5 33.6 -14.5 39.0 -14.4C44.4 -14.2 53.0 -15.7 57.4 -13.2C61.9 -10.8 64.4 -4.3 65.6 0.4C66.8 5.1 65.3 10.4 64.6 15.0M69.7 15.0C69.1 20.2 68.8 25.7 66.2 29.8C63.5 34.0 57.8 36.6 53.8 40.0C49.7 43.5 46.7 46.9 41.9 50.6C37.2 54.2 31.0 61.3 25.0 61.9C19.0 62.6 10.9 58.2 6.2 54.4C1.6 50.6 0.7 43.3 -2.8 39.1C-6.2 34.9 -11.2 33.2 -14.4 29.2C-17.5 25.2 -21.1 20.0 -21.8 15.0C-22.5 10.0 -20.2 4.6 -18.4 -0.6C-16.6 -5.8 -15.2 -12.5 -11.0 -16.3C-6.7 -20.0 0.9 -22.7 6.9 -23.0C12.9 -23.2 19.3 -18.3 25.0 -17.7C30.7 -17.0 35.1 -19.2 41.3 -19.1C47.4 -19.0 57.2 -20.1 62.0 -17.2C66.8 -14.2 68.9 -6.6 70.2 -1.3C71.5 4.1 70.4 9.8 69.7 15.0M75.1 15.0C74.3 20.7 73.4 26.7 70.3 31.3C67.3 36.0 61.3 38.8 57.0 42.8C52.7 46.9 49.8 51.7 44.4 55.8C39.1 59.9 31.6 67.1 25.0 67.4C18.4 67.7 9.7 62.1 4.6 57.9C-0.6 53.6 -2.0 46.4 -6.0 42.0C-10.0 37.5 -15.9 35.5 -19.4 31.0C-22.9 26.5 -26.3 20.6 -27.1 15.0C-27.8 9.4 -26.0 3.2 -24.0 -2.7C-22.0 -8.5 -20.1 -16.0 -15.2 -20.0C-10.3 -23.9 -1.3 -26.0 5.4 -26.2C12.1 -26.5 18.6 -21.7 25.0 -21.4C31.4 -21.1 36.8 -24.3 43.7 -24.2C50.5 -24.1 61.0 -24.4 66.2 -20.8C71.4 -17.3 73.5 -9.0 75.0 -3.0C76.5 3.0 75.8 9.3 75.1 15.0M80.3 15.0C79.4 21.2 77.7 27.7 74.4 32.8C71.1 37.9 65.0 41.0 60.4 45.8C55.8 50.5 52.9 56.8 47.0 61.3C41.1 65.7 32.3 72.7 25.0 72.7C17.7 72.7 8.7 65.9 3.0 61.2C-2.7 56.6 -4.8 49.6 -9.3 44.9C-13.9 40.1 -20.5 37.8 -24.4 32.8C-28.2 27.8 -31.5 21.3 -32.4 15.0C-33.3 8.7 -31.9 1.7 -29.8 -4.7C-27.6 -11.1 -24.9 -19.4 -19.3 -23.5C-13.7 -27.6 -3.5 -29.0 3.9 -29.3C11.3 -29.6 18.0 -25.3 25.0 -25.3C32.0 -25.3 38.6 -29.5 46.1 -29.3C53.7 -29.2 64.8 -28.5 70.4 -24.4C76.0 -20.3 78.1 -11.3 79.7 -4.7C81.4 1.9 81.2 8.8 80.3 15.0M85.4 15.0C84.4 21.8 81.9 28.6 78.3 34.2C74.7 39.8 68.7 43.4 64.0 48.9C59.2 54.3 56.2 62.0 49.7 66.8C43.2 71.6 33.0 78.1 25.0 77.7C17.0 77.3 7.7 69.4 1.4 64.5C-4.8 59.5 -7.6 52.8 -12.7 47.8C-17.9 42.8 -25.2 40.1 -29.4 34.6C-33.6 29.1 -36.9 21.9 -37.9 15.0C-38.9 8.1 -38.0 0.2 -35.6 -6.8C-33.1 -13.8 -29.6 -22.7 -23.2 -26.9C-16.9 -31.2 -5.5 -31.8 2.5 -32.2C10.5 -32.7 17.3 -29.1 25.0 -29.5C32.7 -29.9 40.4 -34.8 48.6 -34.6C56.9 -34.3 68.5 -32.7 74.5 -28.0C80.4 -23.3 82.6 -13.6 84.5 -6.4C86.3 0.7 86.4 8.2 85.4 15.0M90.4 15.0C89.2 22.3 86.0 29.4 82.2 35.6C78.4 41.8 72.7 46.0 67.7 52.1C62.7 58.3 59.5 67.4 52.4 72.4C45.2 77.5 33.7 83.4 25.0 82.6C16.3 81.8 6.8 72.9 -0.1 67.6C-6.9 62.3 -10.4 56.0 -16.2 50.8C-21.9 45.6 -29.9 42.4 -34.5 36.4C-39.1 30.5 -42.3 22.6 -43.5 15.0C-44.7 7.4 -44.2 -1.4 -41.5 -8.9C-38.7 -16.5 -34.0 -25.8 -26.9 -30.2C-19.8 -34.5 -7.5 -34.5 1.1 -35.1C9.8 -35.7 16.7 -33.0 25.0 -33.8C33.3 -34.6 42.2 -40.3 51.2 -39.9C60.1 -39.5 72.2 -36.8 78.5 -31.5C84.8 -26.2 87.2 -15.9 89.2 -8.1C91.1 -0.4 91.5 7.7 90.4 15.0M95.4 15.0C94.2 22.8 90.3 30.3 86.4 37.1C82.5 43.9 77.0 48.9 71.8 55.7C66.5 62.5 62.8 72.7 55.0 77.9C47.2 83.1 34.4 88.1 25.0 86.9C15.6 85.7 5.9 76.2 -1.5 70.7C-9.0 65.3 -13.5 59.5 -19.9 54.1C-26.3 48.7 -35.0 44.9 -39.8 38.4C-44.7 31.8 -47.9 23.2 -49.1 15.0C-50.3 6.8 -50.1 -2.9 -47.0 -10.9C-43.9 -19.0 -38.1 -28.6 -30.4 -33.1C-22.6 -37.7 -9.5 -37.2 -0.3 -38.1C8.9 -39.1 16.0 -37.5 25.0 -38.7C34.0 -39.9 44.2 -46.0 53.7 -45.3C63.3 -44.7 75.6 -40.7 82.2 -34.7C88.9 -28.8 91.4 -18.0 93.6 -9.7C95.8 -1.4 96.6 7.2 95.4 15.0M100.4 15.0C99.3 23.3 94.9 31.3 90.9 38.7C86.8 46.1 81.6 52.0 76.0 59.4C70.5 66.8 66.0 77.9 57.5 83.2C49.0 88.4 35.1 92.3 25.0 90.8C14.9 89.2 5.1 79.4 -3.1 73.9C-11.2 68.4 -16.9 63.2 -23.9 57.6C-31.0 52.0 -40.2 47.4 -45.3 40.3C-50.4 33.2 -53.4 23.9 -54.6 15.0C-55.8 6.1 -55.8 -4.4 -52.3 -12.9C-48.8 -21.4 -42.0 -31.2 -33.6 -35.9C-25.2 -40.7 -11.6 -40.0 -1.8 -41.4C7.9 -42.7 15.3 -42.5 25.0 -44.0C34.7 -45.6 46.2 -51.7 56.3 -50.6C66.4 -49.6 78.7 -44.3 85.7 -37.8C92.6 -31.2 95.5 -20.1 97.9 -11.3C100.4 -2.5 101.6 6.7 100.4 15.0M105.5 15.0C104.3 23.9 99.5 32.3 95.4 40.3C91.2 48.4 86.3 55.2 80.4 63.2C74.5 71.2 69.2 83.1 59.9 88.3C50.7 93.6 35.8 96.4 25.0 94.5C14.2 92.7 4.2 82.8 -4.6 77.2C-13.5 71.6 -20.4 67.0 -28.1 61.1C-35.7 55.3 -45.3 49.9 -50.7 42.3C-56.0 34.6 -59.0 24.5 -60.1 15.0C-61.3 5.5 -61.5 -5.8 -57.6 -14.8C-53.7 -23.7 -45.7 -33.7 -36.7 -38.7C-27.7 -43.6 -13.7 -42.9 -3.4 -44.7C6.9 -46.5 14.6 -47.6 25.0 -49.5C35.4 -51.3 48.1 -57.3 58.7 -55.8C69.4 -54.4 81.8 -47.9 89.0 -40.7C96.3 -33.5 99.6 -22.1 102.3 -12.9C105.1 -3.6 106.6 6.1 105.5 15.0M110.5 15.0C109.3 24.4 104.2 33.3 99.9 42.0C95.6 50.7 91.1 58.5 84.9 67.1C78.6 75.6 72.3 88.2 62.3 93.4C52.4 98.6 36.4 100.2 25.0 98.1C13.6 96.0 3.3 86.2 -6.3 80.6C-15.8 75.1 -23.9 70.8 -32.2 64.8C-40.5 58.7 -50.4 52.5 -56.0 44.2C-61.6 35.9 -64.6 25.1 -65.7 15.0C-66.9 4.9 -67.2 -7.3 -62.9 -16.7C-58.5 -26.0 -49.3 -36.0 -39.7 -41.3C-30.1 -46.5 -15.9 -45.8 -5.1 -48.1C5.7 -50.4 14.0 -53.0 25.0 -55.1C36.0 -57.2 49.9 -62.8 61.2 -60.9C72.4 -59.0 84.7 -51.3 92.3 -43.6C100.0 -35.8 103.8 -24.2 106.8 -14.5C109.8 -4.7 111.6 5.6 110.5 15.0M115.4 15.0C114.3 25.0 108.8 34.3 104.5 43.6C100.2 53.0 96.1 61.9 89.4 71.0C82.8 80.1 75.4 93.2 64.7 98.3C53.9 103.4 37.1 103.9 25.0 101.6C12.9 99.2 2.3 89.7 -8.0 84.2C-18.2 78.7 -27.6 74.8 -36.5 68.4C-45.3 62.1 -55.4 55.0 -61.2 46.1C-67.1 37.2 -70.2 25.8 -71.4 15.0C-72.5 4.2 -72.8 -8.7 -68.0 -18.5C-63.2 -28.3 -52.8 -38.3 -42.6 -43.8C-32.4 -49.3 -18.1 -48.9 -6.8 -51.7C4.5 -54.6 13.3 -58.5 25.0 -60.8C36.7 -63.2 51.7 -68.3 63.5 -65.9C75.3 -63.5 87.6 -54.7 95.6 -46.4C103.6 -38.1 108.0 -26.3 111.3 -16.1C114.6 -5.9 116.5 5.0 115.4 15.0M120.3 15.0C119.2 25.5 113.6 35.3 109.2 45.3C104.8 55.3 101.1 65.4 94.1 75.1C87.0 84.7 78.5 98.1 66.9 103.0C55.4 108.0 37.8 107.5 25.0 104.9C12.2 102.4 1.2 93.4 -9.7 87.9C-20.7 82.4 -31.3 78.8 -40.7 72.1C-50.2 65.5 -60.4 57.5 -66.4 47.9C-72.5 38.4 -75.9 26.4 -77.0 15.0C-78.1 3.6 -78.4 -10.1 -73.1 -20.3C-67.8 -30.5 -56.2 -40.4 -45.5 -46.3C-34.7 -52.1 -20.3 -52.1 -8.6 -55.5C3.2 -58.9 12.6 -64.1 25.0 -66.7C37.4 -69.2 53.5 -73.6 65.8 -70.6C78.1 -67.7 90.5 -58.0 98.8 -49.2C107.2 -40.4 112.3 -28.4 115.9 -17.7C119.5 -7.0 121.4 4.5 120.3 15.0M125.2 15.0C124.1 26.1 118.4 36.4 114.0 47.1C109.6 57.8 106.3 69.1 98.8 79.2C91.3 89.2 81.4 102.8 69.1 107.6C56.8 112.5 38.4 110.9 25.0 108.2C11.6 105.6 0.1 97.2 -11.6 91.8C-23.2 86.4 -35.0 82.8 -45.0 75.9C-55.0 68.9 -65.3 59.9 -71.6 49.8C-77.9 39.6 -81.7 27.0 -82.8 15.0C-83.8 3.0 -83.8 -11.5 -78.1 -22.1C-72.3 -32.7 -59.5 -42.5 -48.2 -48.7C-37.0 -54.9 -22.7 -55.4 -10.5 -59.4C1.8 -63.4 11.9 -69.9 25.0 -72.6C38.1 -75.2 55.2 -78.7 68.0 -75.3C80.8 -71.9 93.3 -61.3 102.0 -52.0C110.8 -42.7 116.6 -30.6 120.5 -19.4C124.4 -8.2 126.2 3.9 125.2 15.0M130.0 15.0C128.9 26.7 123.4 37.5 119.0 48.9C114.6 60.2 111.5 72.8 103.5 83.3C95.6 93.8 84.3 107.3 71.2 112.0C58.1 116.7 39.1 114.2 25.0 111.5C10.9 108.8 -1.1 101.1 -13.5 95.8C-25.9 90.5 -38.7 86.9 -49.3 79.6C-59.8 72.2 -70.2 62.4 -76.7 51.6C-83.3 40.9 -87.5 27.6 -88.5 15.0C-89.6 2.4 -89.1 -12.8 -82.9 -23.9C-76.6 -34.9 -62.7 -44.4 -51.0 -51.1C-39.2 -57.7 -25.1 -59.0 -12.4 -63.6C0.2 -68.1 11.2 -75.8 25.0 -78.5C38.8 -81.2 56.8 -83.7 70.1 -79.8C83.5 -75.8 96.1 -64.6 105.3 -54.8C114.4 -45.0 121.0 -32.7 125.2 -21.1C129.3 -9.4 131.0 3.3 130.0 15.0M134.8 15.0C133.8 27.2 128.5 38.6 124.1 50.7C119.7 62.8 116.8 76.5 108.3 87.4C99.8 98.3 87.1 111.6 73.2 116.2C59.3 120.7 39.8 117.5 25.0 114.8C10.2 112.1 -2.4 105.2 -15.5 99.9C-28.5 94.7 -42.4 91.0 -53.5 83.3C-64.6 75.5 -75.0 64.9 -81.8 53.5C-88.6 42.1 -93.4 28.2 -94.3 15.0C-95.3 1.8 -94.3 -14.1 -87.5 -25.5C-80.8 -36.9 -65.9 -46.4 -53.7 -53.4C-41.5 -60.5 -27.6 -62.7 -14.5 -67.9C-1.4 -73.0 10.6 -81.7 25.0 -84.4C39.4 -87.1 58.3 -88.6 72.2 -84.1C86.1 -79.6 98.9 -67.8 108.5 -57.6C118.1 -47.4 125.4 -34.9 129.8 -22.8C134.2 -10.7 135.7 2.8 134.8 15.0M139.5 15.0C138.7 27.8 133.8 39.8 129.3 52.6C124.9 65.3 122.1 80.3 113.0 91.6C104.0 102.8 89.8 115.7 75.1 120.1C60.4 124.6 40.4 120.7 25.0 118.1C9.6 115.4 -3.7 109.4 -17.5 104.3C-31.3 99.1 -46.2 95.1 -57.7 86.9C-69.3 78.8 -79.8 67.3 -86.9 55.3C-94.0 43.3 -99.3 28.7 -100.1 15.0C-101.0 1.3 -99.4 -15.4 -92.1 -27.2C-84.8 -39.0 -69.0 -48.3 -56.4 -55.8C-43.9 -63.3 -30.2 -66.6 -16.6 -72.4C-3.1 -78.2 9.9 -87.7 25.0 -90.3C40.1 -93.0 59.7 -93.3 74.2 -88.3C88.7 -83.3 101.7 -71.1 111.7 -60.4C121.8 -49.8 129.9 -37.0 134.5 -24.4C139.1 -11.9 140.4 2.2 139.5 15.0M144.3 15.0C143.5 28.4 139.2 41.1 134.8 54.5C130.3 68.0 127.4 84.1 117.8 95.7C108.1 107.2 92.3 119.6 76.9 123.9C61.4 128.2 41.1 124.0 25.0 121.4C8.9 118.9 -5.1 113.8 -19.6 108.7C-34.1 103.6 -49.8 99.2 -61.9 90.6C-74.0 82.0 -84.7 69.7 -92.0 57.1C-99.4 44.6 -105.2 29.3 -106.0 15.0C-106.7 0.7 -104.2 -16.5 -96.4 -28.7C-88.6 -40.9 -72.1 -50.2 -59.2 -58.2C-46.3 -66.3 -32.9 -70.8 -18.9 -77.1C-4.8 -83.4 9.2 -93.6 25.0 -96.2C40.8 -98.7 61.1 -97.8 76.1 -92.3C91.1 -86.9 104.5 -74.3 115.0 -63.3C125.5 -52.3 134.3 -39.2 139.2 -26.1C144.1 -13.1 145.0 1.6 144.3 15.0M149.1 15.0C148.5 29.1 144.8 42.4 140.3 56.5C135.9 70.7 132.7 87.9 122.4 99.7C112.1 111.5 94.8 123.3 78.6 127.5C62.4 131.7 41.7 127.3 25.0 124.9C8.3 122.5 -6.6 118.4 -21.8 113.3C-37.0 108.1 -53.5 103.2 -66.0 94.2C-78.6 85.1 -89.5 72.2 -97.1 59.0C-104.8 45.8 -111.2 29.9 -111.8 15.0C-112.3 0.1 -108.9 -17.6 -100.6 -30.3C-92.3 -42.9 -75.3 -52.1 -62.0 -60.7C-48.8 -69.3 -35.7 -75.1 -21.2 -82.0C-6.7 -88.9 8.5 -99.5 25.0 -101.9C41.5 -104.3 62.4 -102.2 78.0 -96.3C93.6 -90.3 107.4 -77.6 118.4 -66.2C129.3 -54.8 138.7 -41.3 143.8 -27.8C148.9 -14.3 149.6 0.9 149.1 15.0M153.9 15.0C153.5 29.7 150.5 43.8 146.0 58.6C141.6 73.4 137.9 91.6 127.0 103.7C116.0 115.7 97.3 126.9 80.3 131.0C63.3 135.1 42.4 130.7 25.0 128.5C7.6 126.3 -8.2 123.0 -24.0 117.9C-39.9 112.8 -57.1 107.2 -70.1 97.7C-83.2 88.2 -94.4 74.6 -102.3 60.8C-110.2 47.1 -117.1 30.4 -117.5 15.0C-117.9 -0.4 -113.5 -18.7 -104.7 -31.7C-95.9 -44.7 -78.5 -54.0 -64.9 -63.2C-51.4 -72.4 -38.6 -79.7 -23.6 -87.0C-8.6 -94.4 7.8 -105.3 25.0 -107.5C42.2 -109.7 63.7 -106.5 79.8 -100.1C96.0 -93.7 110.3 -80.9 121.8 -69.1C133.2 -57.4 143.1 -43.5 148.5 -29.5C153.8 -15.4 154.3 0.3 153.9 15.0M158.8 15.0C158.6 30.3 156.5 45.3 151.9 60.7C147.4 76.1 143.1 95.3 131.4 107.5C119.7 119.8 99.6 130.2 81.8 134.3C64.1 138.4 43.0 134.1 25.0 132.2C7.0 130.2 -9.7 127.8 -26.3 122.6C-42.8 117.5 -60.7 111.2 -74.2 101.2C-87.7 91.3 -99.3 77.1 -107.5 62.7C-115.7 48.3 -123.0 31.0 -123.2 15.0C-123.4 -1.0 -117.8 -19.6 -108.6 -33.1C-99.4 -46.6 -81.7 -56.0 -68.0 -65.8C-54.2 -75.7 -41.6 -84.4 -26.1 -92.2C-10.6 -100.1 7.0 -111.1 25.0 -113.0C43.0 -115.0 64.9 -110.7 81.6 -103.9C98.3 -97.1 113.3 -84.3 125.2 -72.1C137.1 -60.0 147.4 -45.6 153.0 -31.1C158.6 -16.6 158.9 -0.3 158.8 15.0M163.7 15.0C163.8 30.9 162.6 46.8 157.9 62.9C153.2 78.9 148.2 98.9 135.7 111.3C123.3 123.7 101.8 133.4 83.4 137.5C64.9 141.6 43.6 137.7 25.0 136.1C6.4 134.4 -11.3 132.6 -28.5 127.4C-45.7 122.2 -64.2 115.2 -78.2 104.7C-92.2 94.3 -104.3 79.6 -112.7 64.6C-121.2 49.7 -128.9 31.5 -128.8 15.0C-128.8 -1.5 -122.0 -20.6 -112.4 -34.5C-102.8 -48.4 -85.1 -58.1 -71.1 -68.6C-57.2 -79.1 -44.6 -89.2 -28.6 -97.5C-12.6 -105.8 6.3 -116.7 25.0 -118.3C43.7 -120.0 66.1 -114.8 83.4 -107.6C100.7 -100.4 116.3 -87.6 128.7 -75.2C141.0 -62.7 151.7 -47.8 157.6 -32.7C163.4 -17.7 163.7 -0.9 163.7 15.0M168.8 15.0C169.1 31.6 168.8 48.4 164.0 65.1C159.2 81.7 153.1 102.3 139.9 114.9C126.7 127.5 104.0 136.4 84.8 140.6C65.7 144.8 44.3 141.5 25.0 140.1C5.7 138.7 -13.0 137.5 -30.8 132.2C-48.7 126.9 -67.6 119.1 -82.2 108.2C-96.7 97.2 -109.3 82.0 -118.0 66.5C-126.7 51.0 -134.7 32.1 -134.3 15.0C-134.0 -2.1 -126.1 -21.4 -116.1 -35.8C-106.1 -50.2 -88.6 -60.3 -74.4 -71.5C-60.3 -82.6 -47.7 -94.2 -31.2 -102.9C-14.6 -111.6 5.6 -122.1 25.0 -123.5C44.4 -124.9 67.3 -118.9 85.2 -111.3C103.0 -103.8 119.4 -91.0 132.2 -78.2C145.0 -65.4 155.9 -49.9 162.1 -34.4C168.2 -18.8 168.5 -1.6 168.8 15.0M174.0 15.0C174.6 32.2 175.2 50.1 170.2 67.3C165.2 84.5 157.9 105.7 143.9 118.4C130.0 131.2 106.1 139.4 86.3 143.7C66.5 148.0 44.9 145.4 25.0 144.3C5.1 143.2 -14.6 142.5 -33.1 137.0C-51.6 131.6 -71.1 123.0 -86.1 111.6C-101.1 100.2 -114.4 84.5 -123.3 68.4C-132.3 52.3 -140.3 32.6 -139.7 15.0C-139.1 -2.6 -130.0 -22.2 -119.7 -37.1C-109.4 -52.0 -92.2 -62.6 -77.9 -74.5C-63.6 -86.4 -50.9 -99.3 -33.8 -108.3C-16.6 -117.3 4.9 -127.4 25.0 -128.5C45.1 -129.6 68.5 -122.9 86.9 -115.0C105.4 -107.1 122.5 -94.5 135.7 -81.3C149.0 -68.1 160.1 -52.0 166.5 -36.0C172.9 -19.9 173.4 -2.2 174.0 15.0M179.4 15.0C180.3 32.8 181.7 51.7 176.4 69.5C171.1 87.3 162.6 108.9 147.8 121.8C133.0 134.6 108.2 142.2 87.7 146.7C67.3 151.2 45.5 149.4 25.0 148.6C4.5 147.8 -16.2 147.4 -35.4 141.8C-54.6 136.2 -74.5 126.9 -90.0 115.0C-105.6 103.1 -119.6 87.0 -128.7 70.4C-137.9 53.7 -145.8 33.1 -144.9 15.0C-144.0 -3.1 -133.8 -22.9 -123.2 -38.4C-112.7 -53.8 -96.0 -65.1 -81.5 -77.6C-67.1 -90.2 -54.1 -104.5 -36.4 -113.8C-18.6 -123.1 4.2 -132.6 25.0 -133.4C45.8 -134.2 69.6 -126.9 88.7 -118.7C107.7 -110.5 125.6 -97.9 139.3 -84.4C153.0 -70.9 164.2 -54.1 170.9 -37.5C177.6 -21.0 178.5 -2.8 179.4 15.0M184.9 15.0C186.1 33.5 188.2 53.4 182.6 71.8C177.1 90.1 167.0 112.0 151.5 125.0C135.9 138.0 110.3 145.1 89.2 149.8C68.1 154.5 46.1 153.7 25.0 153.1C3.9 152.6 -17.9 152.4 -37.7 146.6C-57.5 140.8 -77.8 130.8 -93.9 118.4C-110.0 106.0 -124.8 89.5 -134.1 72.3C-143.5 55.1 -151.2 33.7 -150.0 15.0C-148.8 -3.7 -137.5 -23.7 -126.8 -39.7C-116.0 -55.7 -100.0 -67.7 -85.3 -80.9C-70.7 -94.2 -57.4 -109.8 -39.0 -119.3C-20.6 -128.8 3.4 -137.5 25.0 -138.1C46.6 -138.6 70.8 -130.8 90.5 -122.4C110.1 -114.0 128.7 -101.4 142.9 -87.5C157.0 -73.6 168.3 -56.2 175.3 -39.1C182.3 -22.0 183.7 -3.5 184.9 15.0M190.6 15.0C192.1 34.1 194.8 55.2 188.9 74.0C182.9 92.9 171.3 114.9 155.0 128.0C138.6 141.1 112.3 147.9 90.7 152.8C69.0 157.8 46.8 158.0 25.0 157.8C3.2 157.6 -19.5 157.4 -40.0 151.4C-60.4 145.4 -81.2 134.7 -97.8 121.8C-114.4 108.9 -130.0 92.1 -139.5 74.3C-149.0 56.5 -156.4 34.2 -154.9 15.0C-153.3 -4.2 -141.2 -24.4 -130.3 -40.9C-119.4 -57.5 -104.1 -70.4 -89.3 -84.4C-74.5 -98.4 -60.6 -115.0 -41.5 -124.7C-22.5 -134.4 2.7 -142.4 25.0 -142.6C47.3 -142.8 72.0 -134.8 92.2 -126.2C112.5 -117.5 131.9 -104.9 146.5 -90.6C161.0 -76.4 172.3 -58.3 179.6 -40.7C187.0 -23.1 189.1 -4.1 190.6 15.0M196.5 15.0C198.3 34.8 201.4 56.9 195.0 76.2C188.7 95.6 175.4 117.6 158.3 130.9C141.2 144.2 114.4 150.7 92.1 156.0C69.9 161.2 47.4 162.6 25.0 162.6C2.6 162.6 -21.1 162.3 -42.2 156.1C-63.3 149.9 -84.6 138.5 -101.7 125.2C-118.9 111.9 -135.3 94.6 -145.0 76.2C-154.6 57.8 -161.4 34.7 -159.6 15.0C-157.7 -4.7 -144.9 -25.1 -133.9 -42.2C-122.9 -59.4 -108.4 -73.4 -93.5 -88.0C-78.5 -102.6 -63.9 -120.2 -44.1 -130.1C-24.4 -139.9 2.0 -147.0 25.0 -147.0C48.0 -147.0 73.2 -138.8 94.0 -129.9C114.9 -121.1 135.0 -108.3 150.0 -93.7C165.0 -79.1 176.2 -60.4 184.0 -42.3C191.7 -24.1 194.6 -4.8 196.5 15.0M202.5 15.0C204.6 35.4 208.0 58.7 201.1 78.4C194.3 98.2 179.4 120.2 161.5 133.7C143.6 147.1 116.4 153.5 93.7 159.2C70.9 164.8 48.0 167.2 25.0 167.5C2.0 167.8 -22.7 167.3 -44.4 160.8C-66.2 154.3 -88.0 142.4 -105.7 128.6C-123.3 114.9 -140.6 97.1 -150.4 78.2C-160.1 59.2 -166.2 35.3 -164.1 15.0C-162.0 -5.3 -148.7 -25.8 -137.6 -43.6C-126.5 -61.4 -112.9 -76.4 -97.8 -91.7C-82.6 -107.0 -67.1 -125.4 -46.6 -135.4C-26.2 -145.3 1.3 -151.6 25.0 -151.3C48.7 -151.0 74.4 -142.8 95.9 -133.8C117.3 -124.7 138.1 -111.8 153.6 -96.8C169.0 -81.8 180.2 -62.5 188.4 -43.8C196.5 -25.2 200.4 -5.4 202.5 15.0M208.7 15.0C211.1 36.0 214.5 60.4 207.1 80.6C199.7 100.8 183.2 122.7 164.5 136.3C145.9 150.0 118.5 156.5 95.3 162.5C72.0 168.5 48.6 172.0 25.0 172.5C1.4 173.0 -24.2 172.1 -46.6 165.4C-69.1 158.6 -91.5 146.3 -109.6 132.1C-127.8 117.9 -145.9 99.6 -155.7 80.1C-165.5 60.6 -170.9 35.8 -168.5 15.0C-166.1 -5.8 -152.5 -26.5 -141.4 -44.9C-130.4 -63.4 -117.6 -79.7 -102.2 -95.6C-86.8 -111.5 -70.3 -130.6 -49.1 -140.5C-27.9 -150.5 0.5 -156.0 25.0 -155.5C49.5 -155.0 75.7 -146.9 97.7 -137.6C119.7 -128.4 141.2 -115.2 157.1 -99.8C172.9 -84.5 184.2 -64.6 192.8 -45.4C201.4 -26.3 206.3 -6.0 208.7 15.0M215.1 15.0C217.7 36.6 220.9 62.0 212.9 82.7C205.0 103.3 186.8 125.0 167.5 138.9C148.1 152.7 120.6 159.5 96.9 165.9C73.2 172.4 49.3 176.9 25.0 177.6C0.7 178.3 -25.7 177.0 -48.8 170.0C-71.9 163.0 -94.9 150.2 -113.6 135.6C-132.3 120.9 -151.2 102.1 -161.0 82.0C-170.8 61.9 -175.3 36.4 -172.7 15.0C-170.1 -6.4 -156.3 -27.3 -145.4 -46.4C-134.4 -65.5 -122.4 -83.0 -106.7 -99.6C-91.1 -116.1 -73.5 -135.6 -51.5 -145.6C-29.5 -155.6 -0.2 -160.3 25.0 -159.6C50.2 -158.9 77.0 -151.0 99.6 -141.6C122.2 -132.1 144.3 -118.6 160.6 -102.9C176.8 -87.1 188.2 -66.7 197.3 -47.0C206.4 -27.4 212.5 -6.6 215.1 15.0M221.6 15.0C224.4 37.2 227.1 63.7 218.6 84.7C210.0 105.8 190.3 127.2 170.3 141.3C150.3 155.5 122.8 162.6 98.6 169.5C74.4 176.4 49.9 181.9 25.0 182.7C0.1 183.6 -27.2 181.8 -51.0 174.5C-74.8 167.2 -98.5 154.2 -117.7 139.1C-136.9 124.0 -156.4 104.5 -166.2 83.9C-176.0 63.2 -179.6 37.0 -176.8 15.0C-174.0 -7.0 -160.4 -28.1 -149.5 -47.8C-138.6 -67.6 -127.3 -86.5 -111.4 -103.6C-95.5 -120.7 -76.6 -140.5 -53.8 -150.5C-31.1 -160.5 -0.9 -164.5 25.0 -163.7C50.9 -162.8 78.3 -155.2 101.5 -145.5C124.6 -135.9 147.3 -122.0 164.0 -105.9C180.7 -89.7 192.2 -68.8 201.8 -48.7C211.4 -28.5 218.8 -7.2 221.6 15.0M228.2 15.0C231.1 37.8 233.2 65.2 224.0 86.7C214.8 108.1 193.6 129.3 173.0 143.7C152.4 158.1 125.1 165.9 100.4 173.2C75.7 180.6 50.6 186.9 25.0 187.9C-0.6 188.9 -28.6 186.5 -53.1 179.0C-77.6 171.4 -102.1 158.2 -121.8 142.6C-141.5 127.1 -161.5 107.0 -171.3 85.7C-181.1 64.4 -183.7 37.5 -180.7 15.0C-177.8 -7.5 -164.6 -28.9 -153.8 -49.4C-143.0 -69.9 -132.4 -90.1 -116.1 -107.7C-99.9 -125.4 -79.6 -145.3 -56.1 -155.3C-32.6 -165.3 -1.6 -168.7 25.0 -167.7C51.6 -166.7 79.7 -159.4 103.4 -149.6C127.1 -139.7 150.2 -125.4 167.4 -108.8C184.6 -92.3 196.4 -71.0 206.5 -50.4C216.6 -29.7 225.3 -7.8 228.2 15.0M234.9 15.0C237.9 38.4 239.1 66.7 229.3 88.6C219.4 110.4 196.9 131.3 175.7 146.1C154.6 160.8 127.4 169.3 102.2 177.1C77.1 185.0 51.2 192.0 25.0 193.1C-1.2 194.1 -30.1 191.2 -55.2 183.4C-80.4 175.6 -105.7 162.2 -125.9 146.2C-146.1 130.2 -166.5 109.4 -176.3 87.5C-186.1 65.6 -187.6 38.1 -184.6 15.0C-181.6 -8.1 -168.9 -29.9 -158.3 -51.0C-147.7 -72.2 -137.6 -93.7 -120.9 -111.9C-104.2 -130.0 -82.6 -149.9 -58.3 -159.9C-34.0 -169.9 -2.3 -172.8 25.0 -171.7C52.3 -170.7 81.0 -163.6 105.3 -153.6C129.6 -143.6 153.1 -128.7 170.8 -111.8C188.4 -94.8 200.6 -73.2 211.3 -52.1C222.0 -31.0 231.9 -8.4 234.9 15.0M241.7 15.0C244.7 39.0 244.8 68.2 234.3 90.4C223.8 112.6 200.1 133.3 178.4 148.4C156.7 163.5 129.7 172.8 104.1 181.2C78.6 189.5 51.9 197.1 25.0 198.2C-1.9 199.4 -31.5 196.0 -57.4 187.9C-83.2 179.8 -109.4 166.2 -130.0 149.8C-150.7 133.4 -171.4 111.7 -181.1 89.2C-190.8 66.8 -191.4 38.7 -188.4 15.0C-185.4 -8.7 -173.5 -30.9 -163.1 -52.7C-152.6 -74.6 -142.8 -97.5 -125.7 -116.1C-108.6 -134.7 -85.6 -154.4 -60.4 -164.4C-35.3 -174.3 -2.9 -176.9 25.0 -175.8C52.9 -174.6 82.4 -167.8 107.2 -157.7C132.1 -147.5 155.9 -131.9 174.1 -114.7C192.3 -97.4 205.0 -75.5 216.3 -53.9C227.5 -32.3 238.7 -9.0 241.7 15.0M248.4 15.0C251.4 39.6 250.3 69.5 239.1 92.1C227.9 114.7 203.3 135.2 181.1 150.7C158.9 166.3 132.1 176.5 106.1 185.3C80.1 194.1 52.6 202.2 25.0 203.4C-2.6 204.6 -32.9 200.6 -59.5 192.3C-86.0 184.0 -113.1 170.3 -134.2 153.4C-155.2 136.5 -176.1 114.0 -185.8 90.9C-195.4 67.8 -195.2 39.2 -192.2 15.0C-189.3 -9.2 -178.3 -32.0 -168.0 -54.5C-157.7 -77.1 -148.1 -101.2 -130.5 -120.2C-112.9 -139.3 -88.4 -158.8 -62.5 -168.7C-36.6 -178.6 -3.6 -181.0 25.0 -179.8C53.6 -178.6 83.8 -172.1 109.2 -161.7C134.6 -151.3 158.7 -135.2 177.4 -117.5C196.1 -99.9 209.5 -77.8 221.4 -55.7C233.2 -33.6 245.5 -9.6 248.4 15.0M255.2 15.0C258.0 40.2 255.6 70.8 243.7 93.8C231.8 116.8 206.4 137.1 183.8 153.1C161.2 169.1 134.6 180.4 108.2 189.6C81.7 198.9 53.3 207.3 25.0 208.5C-3.3 209.7 -34.4 205.3 -61.6 196.8C-88.8 188.2 -116.9 174.4 -138.4 157.1C-159.8 139.7 -180.7 116.2 -190.3 92.5C-199.9 68.9 -198.9 39.8 -196.1 15.0C-193.2 -9.8 -183.4 -33.2 -173.2 -56.4C-163.1 -79.6 -153.4 -105.0 -135.3 -124.4C-117.2 -143.8 -91.2 -163.0 -64.5 -172.9C-37.8 -182.8 -4.3 -185.1 25.0 -183.9C54.3 -182.7 85.2 -176.3 111.1 -165.8C137.1 -155.2 161.5 -138.4 180.7 -120.4C200.0 -102.4 214.2 -80.2 226.6 -57.6C239.0 -35.1 252.4 -10.2 255.2 15.0M261.9 15.0C264.6 40.8 260.6 71.9 248.0 95.3C235.5 118.8 209.5 139.1 186.6 155.5C163.6 172.0 137.2 184.4 110.3 194.0C83.4 203.7 54.0 212.4 25.0 213.6C-4.0 214.8 -35.8 210.0 -63.7 201.2C-91.6 192.4 -120.7 178.6 -142.6 160.7C-164.4 142.8 -185.1 118.4 -194.6 94.1C-204.2 69.8 -202.6 40.4 -199.9 15.0C-197.3 -10.4 -188.6 -34.4 -178.6 -58.3C-168.6 -82.3 -158.7 -108.7 -140.0 -128.5C-121.3 -148.2 -94.0 -167.1 -66.5 -177.0C-39.0 -186.9 -4.9 -189.2 25.0 -188.0C54.9 -186.8 86.5 -180.6 113.0 -169.8C139.5 -159.0 164.2 -141.6 184.0 -123.3C203.9 -104.9 219.1 -82.6 232.1 -59.6C245.0 -36.5 259.2 -10.8 261.9 15.0M268.5 15.0C270.9 41.4 265.4 73.0 252.2 96.8C239.0 120.7 212.7 141.0 189.4 158.0C166.1 174.9 139.8 188.5 112.4 198.6C85.0 208.7 54.7 217.4 25.0 218.6C-4.7 219.8 -37.2 214.8 -65.9 205.7C-94.5 196.7 -124.5 182.7 -146.7 164.3C-168.9 146.0 -189.3 120.5 -198.8 95.6C-208.3 70.7 -206.3 41.0 -203.9 15.0C-201.5 -11.0 -194.1 -35.8 -184.2 -60.4C-174.4 -85.0 -163.9 -112.4 -144.6 -132.5C-125.3 -152.6 -96.6 -171.0 -68.3 -181.0C-40.1 -190.9 -5.5 -193.4 25.0 -192.2C55.5 -191.0 87.9 -184.8 114.9 -173.8C142.0 -162.8 166.9 -144.9 187.3 -126.2C207.8 -107.5 224.1 -85.1 237.7 -61.6C251.2 -38.1 266.1 -11.4 268.5 15.0M275.0 15.0C277.1 42.0 270.0 74.0 256.2 98.3C242.4 122.5 216.0 143.0 192.4 160.5C168.8 178.0 142.5 192.7 114.6 203.2C86.7 213.7 55.4 222.4 25.0 223.6C-5.4 224.7 -38.7 219.5 -68.0 210.3C-97.3 201.0 -128.4 186.8 -150.8 167.9C-173.3 149.0 -193.3 122.5 -202.8 97.1C-212.4 71.6 -210.2 41.6 -208.0 15.0C-205.9 -11.6 -199.8 -37.2 -190.0 -62.5C-180.2 -87.7 -169.1 -116.1 -149.2 -136.5C-129.2 -156.9 -99.2 -174.9 -70.2 -184.9C-41.2 -194.9 -6.2 -197.6 25.0 -196.4C56.2 -195.3 89.2 -189.0 116.8 -177.8C144.4 -166.5 169.6 -148.1 190.7 -129.1C211.8 -110.1 229.4 -87.7 243.4 -63.7C257.5 -39.7 272.8 -12.0 275.0 15.0M281.3 15.0C283.1 42.6 274.3 75.0 260.0 99.7C245.7 124.3 219.3 145.1 195.4 163.2C171.5 181.2 145.3 196.9 116.9 207.8C88.5 218.7 56.2 227.3 25.0 228.5C-6.2 229.6 -40.2 224.3 -70.2 214.8C-100.2 205.3 -132.1 190.8 -154.9 171.4C-177.6 152.0 -197.1 124.5 -206.7 98.5C-216.3 72.4 -214.1 42.2 -212.3 15.0C-210.5 -12.2 -205.8 -38.7 -196.0 -64.6C-186.2 -90.5 -174.3 -119.6 -153.6 -140.3C-132.9 -161.0 -101.8 -178.6 -72.0 -188.7C-42.3 -198.8 -6.8 -201.9 25.0 -200.7C56.8 -199.6 90.5 -193.1 118.7 -181.7C146.9 -170.2 172.3 -151.4 194.1 -132.1C215.9 -112.7 234.8 -90.3 249.3 -65.8C263.8 -41.3 279.5 -12.6 281.3 15.0M287.4 15.0C288.8 43.2 278.5 75.8 263.7 101.0C248.9 126.1 222.7 147.3 198.6 165.9C174.5 184.5 148.0 201.3 119.1 212.5C90.2 223.8 56.9 232.2 25.0 233.4C-6.9 234.5 -41.7 229.2 -72.4 219.5C-103.0 209.7 -135.9 194.9 -158.9 174.9C-181.9 155.0 -200.8 126.5 -210.4 99.8C-220.1 73.1 -218.1 42.8 -216.8 15.0C-215.4 -12.8 -211.9 -40.3 -202.1 -66.8C-192.3 -93.3 -179.3 -123.1 -157.9 -144.1C-136.6 -165.0 -104.3 -182.3 -73.8 -192.5C-43.3 -202.6 -7.4 -206.2 25.0 -205.0C57.4 -203.9 91.8 -197.2 120.5 -185.6C149.3 -173.9 175.1 -154.7 197.6 -135.1C220.1 -115.5 240.4 -93.0 255.3 -68.0C270.3 -43.0 286.0 -13.2 287.4 15.0M293.3 15.0C294.3 43.7 282.6 76.7 267.3 102.3C252.1 127.9 226.2 149.6 201.9 168.8C177.5 188.0 150.8 205.7 121.4 217.3C91.9 228.9 57.7 237.1 25.0 238.2C-7.7 239.3 -43.3 234.1 -74.6 224.1C-105.9 214.2 -139.6 198.8 -162.8 178.3C-186.1 157.8 -204.3 128.3 -214.1 101.1C-223.8 73.9 -222.4 43.4 -221.4 15.0C-220.4 -13.4 -218.1 -41.9 -208.2 -69.0C-198.3 -96.1 -184.2 -126.5 -162.1 -147.7C-140.0 -168.9 -106.8 -186.0 -75.6 -196.2C-44.4 -206.5 -8.0 -210.5 25.0 -209.4C58.0 -208.3 93.0 -201.3 122.4 -189.4C151.7 -177.5 178.0 -158.1 201.2 -138.2C224.4 -118.3 246.1 -95.7 261.5 -70.2C276.8 -44.6 292.3 -13.7 293.3 15.0M299.0 15.0C299.5 44.3 286.5 77.4 270.9 103.6C255.3 129.7 229.8 152.0 205.3 171.8C180.7 191.5 153.7 210.2 123.6 222.0C93.6 233.9 58.4 241.9 25.0 243.0C-8.4 244.1 -44.9 239.1 -76.9 228.8C-108.8 218.6 -143.2 202.7 -166.6 181.6C-190.1 160.6 -207.7 130.2 -217.6 102.4C-227.6 74.6 -226.8 43.9 -226.3 15.0C-225.8 -13.9 -224.5 -43.5 -214.5 -71.2C-204.4 -99.0 -189.0 -129.8 -166.2 -151.2C-143.3 -172.7 -109.3 -189.6 -77.4 -200.0C-45.5 -210.4 -8.6 -214.9 25.0 -213.8C58.6 -212.7 94.2 -205.2 124.2 -193.2C154.1 -181.1 180.9 -161.5 204.8 -141.4C228.8 -121.2 252.0 -98.5 267.7 -72.4C283.4 -46.4 298.5 -14.3 299.0 15.0M304.4 15.0C304.5 44.9 290.3 78.2 274.4 104.8C258.5 131.5 233.6 154.5 208.8 174.8C184.1 195.2 156.5 214.6 125.9 226.8C95.2 238.9 59.2 246.7 25.0 247.8C-9.2 249.0 -46.6 244.1 -79.1 233.6C-111.7 223.1 -146.7 206.5 -170.3 184.8C-194.0 163.2 -211.0 132.0 -221.1 103.7C-231.3 75.4 -231.5 44.5 -231.5 15.0C-231.4 -14.5 -230.9 -45.2 -220.7 -73.5C-210.5 -101.8 -193.7 -133.0 -170.1 -154.7C-146.5 -176.4 -111.7 -193.2 -79.2 -203.8C-46.7 -214.3 -9.2 -219.3 25.0 -218.2C59.2 -217.0 95.3 -209.2 126.0 -196.9C156.6 -184.7 183.9 -165.0 208.6 -144.7C233.3 -124.3 258.0 -101.3 274.0 -74.7C289.9 -48.1 304.4 -14.9 304.4 15.0" fill="none" stroke="#bdeac9" stroke-width="2.0"/></symbol><symbol id="w4" viewBox="0 0 227 155"><path d="M153.4 20.0C153.4 20.4 153.3 20.8 153.1 21.1C152.9 21.4 152.5 21.6 152.2 21.9C151.9 22.1 151.6 22.3 151.2 22.6C150.9 22.9 150.4 23.4 150.0 23.5C149.6 23.6 148.9 23.3 148.5 23.1C148.2 22.8 148.1 22.2 147.9 21.9C147.6 21.5 147.3 21.4 147.1 21.0C146.9 20.7 146.6 20.4 146.5 20.0C146.5 19.6 146.6 19.2 146.8 18.8C146.9 18.4 147.0 17.9 147.3 17.6C147.6 17.3 148.1 17.1 148.6 17.0C149.0 17.0 149.6 17.4 150.0 17.5C150.4 17.6 150.7 17.5 151.2 17.5C151.6 17.5 152.4 17.4 152.7 17.6C153.1 17.8 153.3 18.4 153.5 18.8C153.6 19.2 153.5 19.6 153.4 20.0M158.6 20.0C158.5 21.0 158.5 22.1 157.9 22.9C157.4 23.6 156.2 24.1 155.5 24.7C154.7 25.4 154.1 26.0 153.2 26.7C152.3 27.4 151.1 28.8 150.0 28.9C148.9 29.1 147.3 28.3 146.4 27.6C145.5 26.9 145.3 25.5 144.6 24.7C144.0 23.8 143.1 23.5 142.5 22.7C141.9 21.9 141.3 20.9 141.2 20.0C141.0 19.1 141.4 18.0 141.8 17.0C142.1 16.0 142.3 14.7 143.1 14.0C143.9 13.3 145.4 12.7 146.5 12.7C147.7 12.6 148.9 13.6 150.0 13.7C151.1 13.9 151.9 13.5 153.1 13.6C154.2 13.6 156.1 13.4 157.0 13.9C157.9 14.5 158.4 15.9 158.7 16.9C158.9 17.9 158.8 19.0 158.6 20.0M163.9 20.0C163.7 21.6 163.5 23.3 162.6 24.5C161.8 25.8 159.9 26.5 158.7 27.6C157.5 28.6 156.7 29.9 155.3 31.0C153.8 32.2 151.8 34.3 150.0 34.5C148.2 34.6 145.8 33.1 144.3 31.9C142.9 30.7 142.5 28.7 141.5 27.4C140.4 26.2 138.7 25.6 137.8 24.4C136.8 23.2 136.0 21.5 135.8 20.0C135.6 18.5 136.2 16.8 136.7 15.2C137.2 13.6 137.5 11.4 138.8 10.3C140.1 9.2 142.7 8.5 144.5 8.5C146.4 8.4 148.2 9.9 150.0 10.1C151.8 10.2 153.2 9.3 155.1 9.4C157.0 9.4 159.9 9.2 161.3 10.2C162.7 11.1 163.3 13.4 163.7 15.1C164.1 16.7 164.1 18.4 163.9 20.0M169.1 20.0C168.9 22.2 168.5 24.5 167.2 26.2C166.0 27.9 163.5 28.8 161.9 30.4C160.3 31.9 159.4 34.0 157.4 35.6C155.4 37.2 152.5 39.9 150.0 40.0C147.5 40.1 144.3 37.6 142.4 36.0C140.4 34.3 139.8 31.8 138.3 30.2C136.7 28.6 134.2 27.8 132.9 26.1C131.7 24.4 130.7 22.1 130.5 20.0C130.3 17.9 130.9 15.6 131.5 13.4C132.2 11.1 132.7 8.1 134.6 6.6C136.4 5.1 140.1 4.6 142.6 4.5C145.2 4.5 147.6 6.3 150.0 6.4C152.4 6.5 154.6 4.9 157.2 4.9C159.8 4.9 163.7 5.1 165.6 6.4C167.5 7.8 168.1 11.0 168.6 13.3C169.2 15.5 169.4 17.8 169.1 20.0M174.4 20.0C174.1 22.7 173.3 25.6 171.7 27.8C170.2 30.0 167.1 31.1 165.1 33.2C163.1 35.3 162.2 38.3 159.7 40.3C157.2 42.4 153.2 45.6 150.0 45.5C146.8 45.4 143.1 41.9 140.6 39.8C138.1 37.7 137.1 35.0 135.0 33.0C132.9 31.0 129.6 30.1 128.0 27.9C126.4 25.8 125.5 22.7 125.2 20.0C124.9 17.3 125.4 14.3 126.3 11.5C127.1 8.6 127.9 4.7 130.3 2.9C132.8 1.1 137.6 0.8 140.9 0.8C144.1 0.8 146.9 2.8 150.0 2.7C153.1 2.6 156.1 0.3 159.4 0.3C162.7 0.3 167.5 0.9 169.8 2.7C172.2 4.6 172.7 8.7 173.5 11.5C174.2 14.4 174.7 17.3 174.4 20.0M179.7 20.0C179.4 23.3 178.0 26.7 176.1 29.4C174.2 32.1 170.8 33.4 168.4 36.0C166.1 38.7 165.1 42.9 162.1 45.3C159.0 47.8 153.9 51.2 150.0 50.9C146.1 50.5 141.9 46.0 138.8 43.5C135.8 41.0 134.4 38.2 131.7 35.9C129.1 33.6 125.0 32.4 123.0 29.7C121.0 27.1 120.3 23.4 119.9 20.0C119.6 16.6 119.8 13.0 120.9 9.5C121.9 6.1 123.1 1.3 126.2 -0.7C129.2 -2.8 135.2 -2.6 139.2 -2.7C143.2 -2.8 146.2 -0.8 150.0 -1.1C153.8 -1.5 157.7 -4.6 161.7 -4.6C165.7 -4.5 171.3 -3.3 174.0 -0.9C176.8 1.5 177.3 6.3 178.2 9.8C179.2 13.3 180.1 16.7 179.7 20.0M185.0 20.0C184.6 23.8 182.6 27.8 180.4 30.9C178.2 34.1 174.5 35.7 171.8 39.0C169.2 42.3 168.2 47.7 164.6 50.6C160.9 53.4 154.6 56.7 150.0 56.1C145.4 55.4 140.8 49.8 137.2 46.9C133.6 44.1 131.5 41.4 128.3 38.8C125.1 36.3 120.2 34.7 117.9 31.6C115.6 28.4 115.1 24.0 114.6 20.0C114.2 16.0 114.1 11.6 115.3 7.5C116.6 3.5 118.3 -2.0 122.1 -4.3C125.8 -6.5 133.0 -5.8 137.6 -6.0C142.3 -6.1 145.6 -4.5 150.0 -5.1C154.4 -5.8 159.4 -9.7 164.1 -9.6C168.8 -9.5 175.0 -7.4 178.1 -4.4C181.2 -1.5 181.8 4.1 182.9 8.1C184.1 12.2 185.5 16.2 185.0 20.0M190.3 20.0C189.8 24.3 187.0 28.7 184.5 32.4C182.0 36.1 178.3 38.1 175.4 42.1C172.5 46.0 171.3 52.8 167.1 55.9C162.9 59.1 155.3 62.0 150.0 61.0C144.7 60.1 139.8 53.4 135.6 50.2C131.4 47.1 128.6 44.7 124.8 41.9C121.0 39.1 115.4 37.0 112.8 33.4C110.3 29.7 109.9 24.7 109.3 20.0C108.8 15.3 108.2 10.1 109.7 5.5C111.1 0.8 113.7 -5.3 118.1 -7.7C122.5 -10.2 130.8 -8.8 136.1 -9.1C141.5 -9.4 144.9 -8.4 150.0 -9.4C155.1 -10.3 161.2 -15.0 166.6 -14.8C171.9 -14.5 178.6 -11.4 182.1 -7.9C185.6 -4.3 186.3 1.8 187.6 6.4C189.0 11.1 190.8 15.7 190.3 20.0M195.5 20.0C194.9 24.8 191.2 29.6 188.4 33.8C185.7 38.1 182.2 40.7 179.1 45.3C176.0 49.9 174.6 58.1 169.7 61.5C164.9 64.9 155.9 67.1 150.0 65.7C144.1 64.4 138.9 56.9 134.1 53.5C129.2 50.0 125.5 48.1 121.2 45.1C116.8 42.0 110.6 39.4 107.7 35.2C104.9 31.0 104.6 25.3 104.0 20.0C103.4 14.7 102.1 8.6 103.9 3.4C105.6 -1.8 109.2 -8.4 114.3 -11.0C119.5 -13.6 128.8 -11.6 134.7 -12.1C140.7 -12.6 144.3 -12.5 150.0 -13.9C155.7 -15.2 163.1 -20.5 169.1 -20.1C175.1 -19.6 182.0 -15.3 185.9 -11.2C189.8 -7.1 190.7 -0.4 192.3 4.8C193.9 10.0 196.2 15.2 195.5 20.0M200.4 20.0C199.5 25.4 195.1 30.4 192.3 35.2C189.4 40.1 186.6 43.6 183.3 48.9C179.9 54.2 177.9 63.4 172.3 66.9C166.8 70.4 156.7 71.6 150.0 70.0C143.3 68.3 137.8 60.6 132.4 57.0C127.0 53.4 122.3 51.6 117.4 48.3C112.5 45.0 106.2 41.7 103.0 36.9C99.8 32.2 99.1 25.9 98.2 20.0C97.4 14.1 95.8 6.9 97.9 1.3C100.1 -4.4 105.2 -11.1 111.0 -13.9C116.9 -16.6 126.8 -14.3 133.3 -15.2C139.7 -16.0 143.6 -17.2 150.0 -18.8C156.4 -20.5 164.9 -25.8 171.5 -25.1C178.1 -24.3 185.3 -19.2 189.7 -14.5C194.0 -9.8 195.5 -2.8 197.3 3.0C199.1 8.7 201.2 14.6 200.4 20.0M205.0 20.0C204.0 25.9 199.1 31.2 196.2 36.6C193.3 42.1 191.2 46.8 187.7 52.7C184.1 58.7 181.2 68.7 174.9 72.2C168.6 75.8 157.4 76.0 150.0 74.0C142.6 72.0 136.8 64.2 130.7 60.5C124.7 56.8 119.1 55.2 113.7 51.6C108.3 47.9 101.8 43.9 98.2 38.7C94.6 33.4 93.3 26.6 92.3 20.0C91.3 13.4 89.5 5.2 92.1 -0.9C94.7 -6.9 101.4 -13.6 108.0 -16.6C114.6 -19.5 124.7 -17.1 131.8 -18.3C138.8 -19.5 143.0 -22.0 150.0 -24.0C157.0 -26.0 166.6 -31.1 173.8 -30.0C181.1 -29.0 188.7 -22.9 193.4 -17.7C198.2 -12.5 200.4 -5.1 202.3 1.2C204.2 7.5 206.0 14.1 205.0 20.0M209.4 20.0C208.3 26.5 203.2 32.0 200.3 38.1C197.4 44.2 196.1 50.2 192.2 56.7C188.4 63.3 184.4 74.0 177.4 77.5C170.3 81.0 158.1 80.1 150.0 77.9C141.9 75.6 135.7 67.9 129.0 64.0C122.3 60.2 115.9 58.7 110.0 54.8C104.0 50.9 97.3 46.2 93.3 40.4C89.3 34.6 87.3 27.2 86.2 20.0C85.0 12.8 83.2 3.6 86.4 -2.9C89.5 -9.4 97.8 -16.0 105.1 -19.1C112.4 -22.2 122.7 -19.8 130.2 -21.6C137.7 -23.3 142.3 -27.1 150.0 -29.3C157.7 -31.6 168.3 -36.4 176.2 -35.0C184.1 -33.6 192.0 -26.7 197.1 -21.0C202.3 -15.3 205.2 -7.4 207.2 -0.6C209.3 6.2 210.6 13.5 209.4 20.0M213.7 20.0C212.5 27.0 207.3 32.8 204.5 39.6C201.7 46.4 201.1 53.7 197.0 60.9C192.9 68.0 187.6 79.1 179.8 82.6C172.0 86.0 158.8 84.1 150.0 81.6C141.2 79.1 134.6 71.6 127.3 67.6C120.0 63.7 112.7 62.3 106.2 58.1C99.7 53.8 92.7 48.6 88.4 42.2C84.0 35.9 81.1 27.9 79.9 20.0C78.6 12.1 77.1 2.0 80.9 -4.9C84.6 -11.8 94.4 -18.1 102.3 -21.4C110.3 -24.8 120.6 -22.7 128.6 -24.9C136.5 -27.2 141.7 -32.3 150.0 -34.8C158.3 -37.3 170.1 -41.7 178.5 -39.9C187.0 -38.1 195.3 -30.5 200.9 -24.2C206.4 -18.0 209.9 -9.7 212.0 -2.3C214.2 5.0 215.0 13.0 213.7 20.0M218.3 20.0C217.0 27.6 212.0 33.8 209.2 41.3C206.5 48.8 206.3 57.4 201.8 65.0C197.3 72.7 190.7 83.9 182.0 87.2C173.4 90.6 159.4 87.6 150.0 85.0C140.6 82.4 133.4 75.4 125.5 71.5C117.5 67.6 109.2 66.2 102.2 61.6C95.1 57.0 88.0 51.0 83.3 44.0C78.6 37.1 75.1 28.5 73.8 20.0C72.6 11.5 71.5 0.6 75.8 -6.7C80.1 -14.0 91.2 -20.1 99.7 -23.8C108.2 -27.5 118.4 -26.0 126.8 -28.8C135.1 -31.6 141.0 -38.0 150.0 -40.6C159.0 -43.2 171.7 -46.8 180.7 -44.5C189.8 -42.3 198.3 -34.0 204.3 -27.2C210.3 -20.5 214.4 -11.9 216.7 -4.0C219.1 3.8 219.5 12.4 218.3 20.0M223.0 20.0C221.8 28.1 217.0 34.9 214.3 43.1C211.5 51.3 211.6 61.1 206.6 69.2C201.5 77.3 193.5 88.3 184.1 91.5C174.6 94.7 160.1 90.9 150.0 88.3C139.9 85.6 132.2 79.5 123.5 75.6C114.8 71.8 105.5 70.2 98.0 65.2C90.4 60.3 83.2 53.4 78.2 45.9C73.2 38.3 69.1 29.1 67.9 20.0C66.7 10.9 66.2 -0.8 71.1 -8.4C75.9 -16.1 88.0 -22.0 97.0 -26.1C105.9 -30.2 115.9 -29.7 124.7 -33.1C133.6 -36.5 140.3 -43.9 150.0 -46.5C159.7 -49.2 173.2 -51.7 182.8 -48.9C192.4 -46.2 201.2 -37.3 207.6 -30.1C214.0 -22.9 218.8 -14.1 221.4 -5.7C224.0 2.6 224.1 11.9 223.0 20.0M227.6 20.0C226.5 28.7 222.2 36.1 219.5 45.0C216.8 53.9 217.0 64.9 211.4 73.4C205.8 81.8 196.2 92.5 186.0 95.5C175.8 98.6 160.8 94.2 150.0 91.6C139.2 89.0 130.8 83.7 121.5 79.9C112.1 76.1 101.9 74.2 93.8 68.9C85.7 63.5 78.4 55.9 73.1 47.7C67.8 39.6 63.1 29.6 62.0 20.0C60.9 10.4 61.1 -2.0 66.5 -10.1C71.9 -18.2 84.9 -23.9 94.3 -28.5C103.6 -33.0 113.3 -33.5 122.6 -37.5C131.9 -41.5 139.6 -49.8 150.0 -52.4C160.4 -55.0 174.7 -56.4 184.9 -53.2C195.0 -49.9 204.0 -40.6 210.9 -33.0C217.8 -25.3 223.3 -16.2 226.1 -7.4C228.8 1.4 228.7 11.3 227.6 20.0M232.3 20.0C231.3 29.3 227.5 37.4 224.8 47.0C222.1 56.5 222.3 68.8 216.1 77.5C210.0 86.2 198.8 96.5 187.8 99.4C176.8 102.3 161.4 97.5 150.0 95.0C138.6 92.4 129.5 88.0 119.4 84.2C109.3 80.5 98.3 78.2 89.7 72.5C81.1 66.7 73.5 58.3 67.9 49.6C62.3 40.8 57.1 30.2 56.1 20.0C55.1 9.8 56.2 -3.2 62.1 -11.7C68.0 -20.1 81.8 -25.8 91.5 -30.8C101.3 -35.9 110.7 -37.6 120.4 -42.1C130.1 -46.7 138.9 -55.7 150.0 -58.2C161.1 -60.8 176.1 -61.0 186.8 -57.3C197.5 -53.6 206.9 -43.9 214.3 -35.9C221.6 -27.8 227.7 -18.4 230.7 -9.1C233.7 0.2 233.3 10.7 232.3 20.0M237.0 20.0C236.1 29.9 233.1 38.7 230.4 49.0C227.7 59.2 227.6 72.6 220.8 81.6C214.0 90.6 201.4 100.3 189.6 103.1C177.8 105.9 162.1 100.8 150.0 98.4C137.9 96.0 128.0 92.5 117.3 88.7C106.5 85.0 94.7 82.2 85.6 76.0C76.5 69.8 68.7 60.8 62.8 51.4C56.9 42.1 51.0 30.8 50.2 20.0C49.4 9.2 51.4 -4.3 57.8 -13.2C64.3 -22.1 78.7 -27.6 88.8 -33.2C98.8 -38.9 107.9 -41.8 118.1 -46.9C128.3 -52.1 138.2 -61.6 150.0 -64.0C161.8 -66.4 177.5 -65.5 188.7 -61.3C200.0 -57.1 209.9 -47.3 217.6 -38.8C225.4 -30.4 232.1 -20.5 235.3 -10.7C238.5 -0.9 237.8 10.1 237.0 20.0M241.7 20.0C241.1 30.6 238.8 40.1 236.1 51.0C233.4 61.9 232.9 76.3 225.4 85.6C218.0 94.9 203.8 103.9 191.3 106.6C178.7 109.4 162.7 104.2 150.0 102.0C137.3 99.8 126.5 97.0 115.1 93.3C103.7 89.5 91.1 86.2 81.5 79.5C72.0 72.9 63.8 63.2 57.6 53.3C51.4 43.4 45.0 31.3 44.4 20.0C43.7 8.7 46.8 -5.4 53.8 -14.7C60.7 -24.0 75.6 -29.5 85.9 -35.7C96.2 -41.9 105.1 -46.3 115.7 -51.9C126.4 -57.6 137.5 -67.4 150.0 -69.6C162.5 -71.8 178.8 -69.9 190.6 -65.2C202.5 -60.6 212.9 -50.6 221.1 -41.8C229.3 -33.0 236.5 -22.7 239.9 -12.4C243.3 -2.1 242.3 9.4 241.7 20.0M246.5 20.0C246.1 31.2 244.7 41.5 241.9 53.1C239.2 64.7 238.1 80.0 230.0 89.5C221.8 99.0 206.2 107.3 192.9 110.0C179.5 112.7 163.3 107.7 150.0 105.7C136.7 103.7 125.0 101.7 112.9 97.9C100.8 94.2 87.6 90.1 77.5 83.0C67.4 75.9 58.8 65.7 52.3 55.2C45.8 44.7 39.0 31.9 38.6 20.0C38.1 8.1 42.4 -6.4 49.8 -16.1C57.2 -25.8 72.4 -31.5 82.9 -38.3C93.5 -45.1 102.1 -50.9 113.3 -57.0C124.5 -63.2 136.8 -73.1 150.0 -75.1C163.2 -77.1 180.0 -74.1 192.4 -69.1C204.9 -64.1 215.9 -54.0 224.5 -44.8C233.2 -35.6 240.8 -24.8 244.4 -14.0C248.1 -3.2 246.9 8.8 246.5 20.0M251.4 20.0C251.2 31.8 250.7 43.0 247.9 55.3C245.1 67.5 243.3 83.7 234.3 93.3C225.4 103.0 208.5 110.6 194.4 113.3C180.4 116.0 164.0 111.3 150.0 109.5C136.0 107.8 123.4 106.5 110.6 102.6C97.9 98.8 84.2 94.1 73.6 86.5C62.9 78.9 53.8 68.2 47.0 57.1C40.2 46.0 33.0 32.4 32.9 20.0C32.7 7.6 38.2 -7.3 46.0 -17.4C53.9 -27.6 69.0 -33.5 79.8 -41.0C90.6 -48.5 99.1 -55.7 110.8 -62.3C122.5 -68.9 136.1 -78.7 150.0 -80.5C163.9 -82.2 181.2 -78.3 194.3 -72.9C207.3 -67.5 218.9 -57.4 228.1 -47.9C237.2 -38.3 245.0 -26.9 248.9 -15.6C252.8 -4.3 251.5 8.2 251.4 20.0M256.4 20.0C256.5 32.4 257.0 44.6 254.0 57.5C251.0 70.3 248.3 87.2 238.6 97.0C228.9 106.9 210.7 113.7 195.9 116.4C181.2 119.2 164.6 115.0 150.0 113.5C135.4 112.0 121.8 111.3 108.4 107.4C95.0 103.4 80.7 98.0 69.6 89.9C58.5 81.9 48.7 70.7 41.7 59.0C34.6 47.4 27.2 33.0 27.3 20.0C27.4 7.0 34.1 -8.1 42.4 -18.8C50.6 -29.4 65.6 -35.7 76.6 -43.8C87.6 -52.0 96.0 -60.6 108.3 -67.6C120.5 -74.6 135.4 -84.2 150.0 -85.7C164.6 -87.2 182.5 -82.5 196.1 -76.7C209.7 -70.9 222.0 -60.9 231.6 -50.9C241.1 -41.0 249.2 -29.0 253.3 -17.2C257.4 -5.4 256.2 7.6 256.4 20.0M261.5 20.0C261.9 33.1 263.3 46.3 260.2 59.7C257.1 73.1 253.1 90.6 242.7 100.6C232.2 110.6 212.9 116.7 197.4 119.5C182.0 122.4 165.2 118.9 150.0 117.7C134.8 116.4 120.2 116.2 106.1 112.1C92.1 108.0 77.3 101.8 65.7 93.3C54.0 84.8 43.6 73.2 36.3 61.0C28.9 48.7 21.4 33.5 21.8 20.0C22.2 6.5 30.2 -8.9 38.8 -20.1C47.3 -31.2 62.0 -38.0 73.2 -46.8C84.4 -55.6 92.9 -65.7 105.7 -73.0C118.5 -80.3 134.6 -89.5 150.0 -90.7C165.4 -92.0 183.7 -86.6 197.8 -80.4C212.0 -74.3 225.2 -64.3 235.1 -54.0C245.1 -43.8 253.3 -31.1 257.7 -18.8C262.1 -6.4 261.1 6.9 261.5 20.0M266.8 20.0C267.5 33.7 269.8 47.9 266.4 61.9C263.1 75.9 257.8 93.9 246.6 104.0C235.3 114.1 215.0 119.6 198.9 122.6C182.8 125.6 165.8 122.9 150.0 122.0C134.2 121.0 118.6 121.0 103.9 116.8C89.2 112.6 74.0 105.7 61.8 96.7C49.6 87.7 38.3 75.7 30.8 62.9C23.3 50.1 15.8 34.0 16.5 20.0C17.3 6.0 26.4 -9.7 35.3 -21.3C44.1 -33.0 58.3 -40.4 69.6 -49.9C80.9 -59.4 89.7 -70.8 103.1 -78.4C116.5 -86.1 133.9 -94.7 150.0 -95.6C166.1 -96.6 184.8 -90.6 199.6 -84.2C214.4 -77.8 228.3 -67.8 238.7 -57.1C249.1 -46.5 257.3 -33.2 262.0 -20.3C266.7 -7.5 266.0 6.3 266.8 20.0M272.2 20.0C273.3 34.3 276.4 49.7 272.7 64.2C269.1 78.7 262.4 97.0 250.3 107.2C238.3 117.5 217.1 122.5 200.3 125.7C183.6 128.9 166.5 127.1 150.0 126.4C133.5 125.7 117.0 125.9 101.6 121.6C86.3 117.2 70.6 109.6 57.9 100.1C45.2 90.7 33.1 78.3 25.3 64.9C17.6 51.6 10.3 34.6 11.4 20.0C12.5 5.4 22.7 -10.4 31.8 -22.6C40.8 -34.8 54.4 -42.9 65.9 -53.1C77.4 -63.3 86.5 -76.0 100.5 -83.9C114.5 -91.8 133.2 -99.7 150.0 -100.4C166.8 -101.1 186.1 -94.7 201.4 -88.0C216.8 -81.3 231.5 -71.3 242.3 -60.3C253.1 -49.2 261.3 -35.3 266.3 -21.9C271.3 -8.5 271.1 5.7 272.2 20.0M277.9 20.0C279.3 35.0 283.0 51.4 279.0 66.5C275.0 81.5 266.8 100.0 253.9 110.3C241.0 120.7 219.1 125.3 201.8 128.7C184.5 132.2 167.1 131.4 150.0 131.0C132.9 130.6 115.4 130.8 99.4 126.3C83.4 121.7 67.2 113.4 54.0 103.5C40.7 93.6 27.7 80.8 19.8 66.9C11.9 53.0 5.0 35.1 6.5 20.0C7.9 4.9 19.0 -11.1 28.3 -23.9C37.5 -36.6 50.4 -45.6 62.0 -56.5C73.6 -67.4 83.3 -81.2 97.9 -89.3C112.6 -97.4 132.4 -104.6 150.0 -105.0C167.6 -105.4 187.3 -98.7 203.2 -91.8C219.2 -84.8 234.6 -74.7 245.9 -63.4C257.1 -52.0 265.2 -37.3 270.6 -23.4C275.9 -9.5 276.4 5.0 277.9 20.0M283.7 20.0C285.4 35.6 289.6 53.2 285.2 68.7C280.8 84.3 271.0 102.8 257.3 113.3C243.6 123.8 221.2 128.1 203.3 131.9C185.4 135.6 167.7 135.9 150.0 135.7C132.3 135.6 113.8 135.7 97.2 130.9C80.5 126.1 63.8 117.3 50.0 106.9C36.2 96.6 22.4 83.4 14.3 68.9C6.3 54.4 -0.0 35.7 1.7 20.0C3.4 4.3 15.3 -11.8 24.7 -25.1C34.1 -38.5 46.1 -48.5 57.9 -60.1C69.7 -71.7 80.0 -86.4 95.4 -94.7C110.7 -102.9 131.7 -109.3 150.0 -109.5C168.3 -109.6 188.5 -102.8 205.1 -95.6C221.6 -88.5 237.8 -78.2 249.4 -66.4C261.0 -54.7 269.1 -39.4 274.8 -25.0C280.5 -10.6 281.9 4.4 283.7 20.0M289.7 20.0C291.7 36.2 296.2 54.9 291.4 70.9C286.5 86.9 275.0 105.4 260.6 116.1C246.1 126.8 223.3 131.0 204.8 135.1C186.4 139.2 168.3 140.5 150.0 140.6C131.7 140.6 112.3 140.6 95.0 135.5C77.6 130.5 60.4 121.2 46.1 110.4C31.7 99.6 17.0 85.9 8.8 70.8C0.7 55.8 -4.9 36.2 -2.9 20.0C-0.8 3.8 11.7 -12.5 21.1 -26.4C30.5 -40.4 41.7 -51.5 53.7 -63.8C65.6 -76.0 76.8 -91.6 92.9 -99.9C108.9 -108.3 131.0 -113.9 150.0 -113.8C169.0 -113.8 189.8 -106.9 206.9 -99.5C224.1 -92.1 240.9 -81.7 252.9 -69.5C265.0 -57.3 273.0 -41.4 279.1 -26.5C285.2 -11.6 287.6 3.8 289.7 20.0M295.9 20.0C298.2 36.9 302.8 56.6 297.4 73.1C292.0 89.6 278.8 107.9 263.7 118.8C248.5 129.7 225.3 134.0 206.4 138.4C187.5 142.9 168.9 145.2 150.0 145.5C131.1 145.8 110.8 145.4 92.8 140.1C74.8 134.8 57.0 125.1 42.1 113.9C27.1 102.7 11.6 88.5 3.4 72.8C-4.8 57.2 -9.6 36.8 -7.3 20.0C-4.9 3.2 7.9 -13.2 17.4 -27.8C26.8 -42.4 37.1 -54.7 49.3 -67.6C61.5 -80.5 73.6 -96.7 90.4 -105.1C107.2 -113.5 130.3 -118.4 150.0 -118.1C169.7 -117.8 191.1 -111.0 208.8 -103.4C226.5 -95.8 244.0 -85.1 256.4 -72.5C268.8 -60.0 276.9 -43.5 283.4 -28.1C290.0 -12.6 293.5 3.1 295.9 20.0M302.2 20.0C304.8 37.5 309.2 58.3 303.3 75.2C297.4 92.1 282.5 110.3 266.6 121.4C250.8 132.5 227.5 137.0 208.0 141.8C188.6 146.7 169.6 150.0 150.0 150.5C130.4 151.0 109.3 150.1 90.6 144.6C72.0 139.1 53.4 129.0 38.0 117.4C22.6 105.7 6.3 91.0 -2.0 74.7C-10.2 58.5 -14.1 37.3 -11.5 20.0C-8.9 2.7 4.1 -13.9 13.5 -29.2C22.9 -44.4 32.4 -58.0 44.8 -71.5C57.2 -85.0 70.5 -101.7 88.0 -110.2C105.5 -118.7 129.5 -122.8 150.0 -122.3C170.5 -121.8 192.4 -115.2 210.7 -107.4C229.0 -99.6 247.0 -88.5 259.8 -75.5C272.7 -62.6 280.8 -45.6 287.8 -29.6C294.9 -13.7 299.6 2.5 302.2 20.0M308.7 20.0C311.5 38.1 315.6 60.0 309.1 77.3C302.5 94.6 286.1 112.6 269.5 123.9C253.0 135.3 229.7 140.1 209.7 145.4C189.8 150.7 170.2 154.9 150.0 155.5C129.8 156.2 107.8 154.9 88.5 149.1C69.2 143.3 49.9 133.0 33.9 120.9C18.0 108.9 1.0 93.5 -7.3 76.7C-15.5 59.8 -18.4 37.9 -15.6 20.0C-12.8 2.1 0.1 -14.7 9.4 -30.6C18.7 -46.5 27.5 -61.4 40.2 -75.5C52.9 -89.6 67.3 -106.6 85.6 -115.1C103.9 -123.6 128.8 -127.1 150.0 -126.5C171.2 -125.8 193.7 -119.4 212.6 -111.4C231.5 -103.4 249.9 -91.8 263.2 -78.5C276.5 -65.1 284.8 -47.7 292.3 -31.3C299.9 -14.9 305.9 1.9 308.7 20.0M315.3 20.0C318.3 38.7 321.8 61.6 314.6 79.3C307.4 97.0 289.5 114.7 272.3 126.4C255.1 138.0 231.9 143.4 211.5 149.1C191.1 154.8 170.9 159.9 150.0 160.6C129.1 161.4 106.4 159.6 86.4 153.6C66.3 147.6 46.3 137.0 29.8 124.5C13.3 112.0 -4.2 95.9 -12.5 78.5C-20.7 61.1 -22.5 38.4 -19.5 20.0C-16.6 1.6 -4.0 -15.6 5.2 -32.2C14.4 -48.7 22.5 -64.9 35.5 -79.6C48.5 -94.2 64.3 -111.4 83.3 -119.9C102.4 -128.4 128.1 -131.3 150.0 -130.6C171.9 -129.8 195.1 -123.7 214.5 -115.5C234.0 -107.3 252.9 -95.1 266.6 -81.4C280.3 -67.6 288.8 -49.8 296.9 -32.9C305.1 -16.0 312.4 1.3 315.3 20.0M322.1 20.0C325.1 39.3 327.8 63.1 319.9 81.2C312.1 99.3 292.8 116.8 275.1 128.7C257.3 140.7 234.2 146.8 213.3 152.9C192.5 159.1 171.5 164.9 150.0 165.7C128.5 166.6 105.0 164.3 84.3 158.0C63.5 151.8 42.6 141.1 25.6 128.2C8.7 115.2 -9.3 98.4 -17.5 80.3C-25.7 62.3 -26.4 39.0 -23.4 20.0C-20.4 1.0 -8.3 -16.5 0.8 -33.8C9.8 -51.0 17.4 -68.5 30.8 -83.7C44.2 -98.8 61.2 -116.1 81.1 -124.6C101.0 -133.1 127.4 -135.5 150.0 -134.7C172.6 -133.8 196.5 -127.9 216.5 -119.5C236.4 -111.1 255.7 -98.4 269.9 -84.3C284.1 -70.1 293.0 -52.0 301.7 -34.6C310.3 -17.2 319.0 0.7 322.1 20.0M328.8 20.0C331.9 39.9 333.6 64.5 325.0 83.1C316.5 101.6 296.1 118.8 277.8 131.1C259.5 143.4 236.5 150.3 215.2 156.9C193.9 163.5 172.2 169.9 150.0 170.8C127.8 171.7 103.6 169.0 82.1 162.5C60.7 156.0 38.8 145.2 21.4 131.8C4.0 118.4 -14.3 100.7 -22.4 82.1C-30.5 63.5 -30.3 39.6 -27.2 20.0C-24.1 0.4 -12.8 -17.5 -3.9 -35.4C5.0 -53.4 12.2 -72.2 26.0 -87.8C39.8 -103.4 58.3 -120.6 79.0 -129.1C99.6 -137.6 126.8 -139.7 150.0 -138.8C173.2 -137.9 197.9 -132.2 218.4 -123.6C238.9 -115.0 258.5 -101.6 273.2 -87.1C287.9 -72.6 297.3 -54.2 306.5 -36.4C315.8 -18.5 325.8 0.1 328.8 20.0M335.7 20.0C338.7 40.5 339.1 65.9 329.9 84.8C320.7 103.7 299.3 120.8 280.5 133.5C261.7 146.2 238.9 154.0 217.2 161.0C195.4 168.1 172.9 174.9 150.0 175.9C127.1 176.9 102.2 173.6 80.0 166.9C57.9 160.2 35.0 149.3 17.2 135.5C-0.7 121.6 -19.1 103.1 -27.1 83.8C-35.2 64.6 -34.0 40.2 -31.0 20.0C-27.9 -0.2 -17.5 -18.5 -8.8 -37.2C-0.1 -55.8 7.0 -75.9 21.2 -92.0C35.5 -108.0 55.4 -125.0 76.9 -133.5C98.3 -142.0 126.1 -143.9 150.0 -142.9C173.9 -141.9 199.3 -136.5 220.3 -127.6C241.4 -118.8 261.2 -104.8 276.4 -89.9C291.6 -75.0 301.7 -56.5 311.6 -38.2C321.4 -19.9 332.6 -0.5 335.7 20.0M342.5 20.0C345.4 41.1 344.5 67.2 334.6 86.5C324.7 105.8 302.4 122.7 283.2 135.8C264.0 149.0 241.4 157.7 219.2 165.3C197.0 172.8 173.5 179.9 150.0 180.9C126.5 181.9 100.7 178.3 77.9 171.3C55.1 164.4 31.2 153.5 12.9 139.2C-5.3 124.9 -23.8 105.3 -31.7 85.4C-39.7 65.6 -37.7 40.7 -34.7 20.0C-31.8 -0.7 -22.4 -19.7 -13.9 -39.0C-5.3 -58.4 1.7 -79.6 16.5 -96.1C31.3 -112.6 52.6 -129.3 74.8 -137.8C97.1 -146.3 125.4 -148.1 150.0 -147.1C174.6 -146.1 200.6 -140.7 222.3 -131.7C243.9 -122.6 263.9 -108.0 279.7 -92.7C295.4 -77.5 306.3 -58.9 316.8 -40.1C327.2 -21.3 339.5 -1.1 342.5 20.0M349.2 20.0C352.0 41.7 349.6 68.4 339.1 88.1C328.5 107.8 305.6 124.7 286.0 138.3C266.4 151.8 243.9 161.7 221.3 169.6C198.6 177.6 174.2 184.9 150.0 185.9C125.8 186.9 99.3 183.0 75.8 175.8C52.2 168.7 27.3 157.7 8.7 142.9C-10.0 128.1 -28.2 107.5 -36.1 87.0C-44.0 66.6 -41.4 41.3 -38.6 20.0C-35.8 -1.3 -27.6 -20.9 -19.2 -40.9C-10.8 -61.0 -3.6 -83.4 11.8 -100.2C27.1 -117.0 49.8 -133.4 72.9 -141.9C95.9 -150.4 124.8 -152.3 150.0 -151.3C175.2 -150.3 202.0 -145.0 224.2 -135.7C246.3 -126.4 266.6 -111.2 282.9 -95.6C299.2 -79.9 311.1 -61.3 322.2 -42.0C333.2 -22.8 346.4 -1.7 349.2 20.0M355.9 20.0C358.5 42.3 354.5 69.5 343.3 89.6C332.1 109.7 308.8 126.7 288.8 140.7C268.8 154.8 246.5 165.7 223.4 174.1C200.2 182.4 175.0 189.8 150.0 190.9C125.0 191.9 97.9 187.7 73.6 180.4C49.4 173.0 23.5 161.9 4.5 146.5C-14.5 131.2 -32.5 109.6 -40.3 88.5C-48.1 67.5 -45.1 41.9 -42.5 20.0C-39.9 -1.9 -33.0 -22.2 -24.7 -42.9C-16.5 -63.6 -8.8 -87.0 7.2 -104.2C23.1 -121.4 47.1 -137.4 70.9 -146.0C94.7 -154.5 124.1 -156.6 150.0 -155.5C175.9 -154.5 203.4 -149.2 226.1 -139.7C248.8 -130.2 269.2 -114.3 286.2 -98.4C303.1 -82.4 316.1 -63.7 327.7 -44.0C339.3 -24.3 353.3 -2.3 355.9 20.0M362.4 20.0C364.7 42.9 359.2 70.5 347.4 91.1C335.6 111.6 312.1 128.7 291.8 143.3C271.5 157.9 249.2 169.8 225.5 178.6C201.9 187.3 175.7 194.7 150.0 195.8C124.3 196.8 96.4 192.5 71.4 184.9C46.5 177.3 19.6 166.0 0.3 150.2C-19.0 134.4 -36.6 111.7 -44.4 90.0C-52.2 68.3 -48.8 42.5 -46.5 20.0C-44.2 -2.5 -38.6 -23.6 -30.4 -45.0C-22.2 -66.4 -14.0 -90.7 2.6 -108.2C19.2 -125.7 44.5 -141.3 69.1 -149.9C93.6 -158.5 123.5 -160.9 150.0 -159.8C176.5 -158.8 204.7 -153.4 227.9 -143.6C251.2 -133.8 271.9 -117.5 289.4 -101.3C307.0 -85.0 321.3 -66.3 333.5 -46.1C345.6 -25.9 360.1 -2.9 362.4 20.0M368.8 20.0C370.8 43.4 363.6 71.5 351.3 92.5C338.9 113.5 315.4 130.8 294.8 145.9C274.2 161.0 251.9 174.1 227.7 183.2C203.6 192.3 176.4 199.6 150.0 200.6C123.6 201.7 94.9 197.4 69.2 189.5C43.6 181.7 15.7 170.1 -3.9 153.8C-23.4 137.4 -40.4 113.7 -48.2 91.4C-56.1 69.1 -52.7 43.1 -50.7 20.0C-48.7 -3.1 -44.4 -25.1 -36.3 -47.1C-28.2 -69.1 -19.1 -94.2 -1.8 -112.0C15.4 -129.8 41.9 -145.2 67.2 -153.8C92.5 -162.5 122.9 -165.2 150.0 -164.2C177.1 -163.1 206.0 -157.5 229.8 -147.5C253.6 -137.5 274.5 -120.7 292.8 -104.2C311.0 -87.6 326.7 -68.9 339.3 -48.2C352.0 -27.5 366.8 -3.4 368.8 20.0M375.0 20.0C376.6 44.0 367.9 72.4 355.0 93.9C342.2 115.3 318.8 133.0 297.9 148.6C277.1 164.3 254.6 178.3 229.9 187.8C205.3 197.3 177.2 204.4 150.0 205.5C122.8 206.6 93.3 202.2 67.0 194.2C40.7 186.2 11.9 174.2 -7.9 157.3C-27.8 140.4 -44.1 115.6 -52.0 92.8C-59.9 69.9 -56.7 43.7 -55.1 20.0C-53.5 -3.7 -50.5 -26.6 -42.3 -49.3C-34.2 -71.9 -24.1 -97.7 -6.2 -115.8C11.8 -133.9 39.3 -148.9 65.3 -157.7C91.4 -166.5 122.3 -169.6 150.0 -168.5C177.7 -167.4 207.2 -161.5 231.6 -151.3C256.0 -141.1 277.2 -124.0 296.2 -107.1C315.2 -90.3 332.2 -71.6 345.4 -50.4C358.5 -29.2 373.4 -4.0 375.0 20.0M381.0 20.0C382.2 44.6 372.0 73.3 358.7 95.2C345.4 117.1 322.3 135.3 301.2 151.5C280.1 167.7 257.4 182.7 232.2 192.5C207.0 202.3 177.9 209.2 150.0 210.3C122.1 211.4 91.7 207.2 64.8 198.9C37.8 190.7 8.2 178.3 -11.9 160.8C-32.0 143.3 -47.7 117.5 -55.6 94.1C-63.6 70.6 -60.9 44.3 -59.6 20.0C-58.4 -4.3 -56.6 -28.2 -48.4 -51.5C-40.2 -74.7 -29.1 -101.1 -10.4 -119.5C8.3 -137.8 36.8 -152.6 63.5 -161.5C90.3 -170.5 121.7 -174.0 150.0 -172.9C178.3 -171.8 208.4 -165.5 233.4 -155.1C258.4 -144.6 280.0 -127.3 299.7 -110.2C319.4 -93.1 337.9 -74.3 351.5 -52.6C365.0 -30.9 379.8 -4.6 381.0 20.0M386.8 20.0C387.6 45.2 376.0 74.1 362.3 96.5C348.6 118.9 325.9 137.6 304.6 154.4C283.3 171.2 260.2 187.0 234.4 197.2C208.6 207.3 178.7 214.0 150.0 215.1C121.3 216.2 90.1 212.2 62.5 203.7C34.9 195.2 4.5 182.2 -15.8 164.1C-36.1 146.1 -51.1 119.4 -59.2 95.3C-67.3 71.3 -65.2 44.8 -64.5 20.0C-63.7 -4.8 -62.9 -29.9 -54.6 -53.7C-46.3 -77.5 -33.9 -104.4 -14.5 -123.0C4.9 -141.7 34.3 -156.3 61.7 -165.4C89.1 -174.4 121.1 -178.4 150.0 -177.3C178.9 -176.2 209.6 -169.5 235.2 -158.8C260.7 -148.1 282.9 -130.7 303.3 -113.3C323.7 -96.0 343.8 -77.0 357.7 -54.8C371.6 -32.6 386.0 -5.2 386.8 20.0M392.3 20.0C392.7 45.8 379.9 74.8 365.9 97.8C351.8 120.7 329.6 140.1 308.1 157.5C286.6 174.8 263.0 191.4 236.6 201.8C210.3 212.2 179.4 218.8 150.0 219.9C120.6 221.0 88.4 217.3 60.2 208.5C31.9 199.8 1.0 186.1 -19.5 167.4C-40.0 148.8 -54.4 121.2 -62.7 96.6C-71.0 72.0 -69.8 45.4 -69.5 20.0C-69.2 -5.4 -69.3 -31.5 -60.8 -55.9C-52.3 -80.3 -38.6 -107.6 -18.5 -126.5C1.6 -145.4 31.8 -160.0 59.9 -169.2C87.9 -178.4 120.5 -182.8 150.0 -181.7C179.5 -180.6 210.8 -173.4 236.9 -162.5C263.1 -151.6 285.9 -134.1 307.0 -116.6C328.2 -99.0 349.8 -79.8 364.0 -57.1C378.2 -34.3 392.0 -5.8 392.3 20.0" fill="none" stroke="#bdeac9" stroke-width="2.0"/></symbol></defs></svg><div id="modal"></div><div class="a" style="left:0px;top:255px;width:2px;height:9px;background:#45454c;"></div><div class="a" style="left:0px;top:274px;width:2px;height:7px;background:#4a4f72;"></div><div class="a" style="left:0px;top:293.5px;width:2px;height:5px;background:#4d4d56;"></div><div class="a" style="left:0px;top:312px;width:2px;height:6px;background:#50505a;"></div>
<div id="hdr"><div class="t">文件预览</div>
  <svg class="a" style="left:1159.3px;top:8.6px" width="9" height="9" viewBox="0 0 9 9"><path d="M0.6 0.6L8.4 8.4M8.4 0.6L0.6 8.4" stroke="#333" stroke-width="1.1"/></svg>
</div>
<div class="a" style="left:2px;top:25px;width:1179px;height:1px;background:#dcc99d"></div>
<div class="a" style="left:2px;top:26px;width:1179px;height:1px;background:#b5b7b9"></div>
<div class="a" style="left:2px;top:27px;width:1179px;height:1px;background:#1f2225"></div>
<div id="tb"></div>
<svg class="a" style="left:20px;top:41px" width="12" height="10" viewBox="0 0 12 10"><path d="M0 1.2H11.5M0 4.6H11.5M0 8H11.5" stroke="#f1f1f1" stroke-width="1.3"/></svg>
<div class="tt" style="left:48px;top:41px;font-size:10px;letter-spacing:-0.33px">b77ba93b-baf6-4302-a306-710b39d1fede.pdf</div>
<div class="box" style="left:492px;top:38px;width:16px;height:13.5px"></div>
<div class="tt" style="left:492px;top:38.8px;width:16px;text-align:center">1</div>
<div class="tt" style="left:510.5px;top:38.8px;font-weight:normal">/</div>
<div class="tt" style="left:520px;top:38.8px">5</div>
<div class="sep" style="left:542px"></div>
<div class="a" style="left:553px;top:45.5px;width:8px;height:1.4px;background:#f1f1f1"></div>
<div class="box" style="left:572.5px;top:38px;width:30.5px;height:13.5px"></div>
<div class="tt" style="left:572px;top:38.8px;width:31px;text-align:center;letter-spacing:-0.35px">100%</div>
<svg class="a" style="left:614px;top:42px" width="9" height="9" viewBox="0 0 9 9"><path d="M0 4.5H8.5M4.2 0V9" stroke="#f1f1f1" stroke-width="1.3"/></svg>
<div class="sep" style="left:633px"></div>
<svg class="a" style="left:647px;top:40px" width="16" height="14" viewBox="0 0 16 14"><rect x="1.6" y="1.6" width="11.8" height="9.8" rx="1.5" fill="none" stroke="#f1f1f1" stroke-width="1.5"/><path d="M6.2 4.9L7.6 3.5L9 4.9ZM6.2 8.2L7.6 9.6L9 8.2Z" fill="#f1f1f1" stroke="#f1f1f1" stroke-width=".6"/></svg>
<svg class="a" style="left:672.2px;top:39.9px" width="14.2" height="14.2" viewBox="0 0 24 24"><path fill="#f1f1f1" d="M7.34 6.41L.86 12.9l6.49 6.48 6.49-6.48-6.5-6.49zM3.69 12.9l3.66-3.66L11 12.9l-3.66 3.66-3.650-3.66zm15.67-6.26C17.61 4.88 15.3 4 13 4V.76L8.76 5 13 9.24V6c1.79 0 3.58.68 4.95 2.05 2.73 2.73 2.73 7.17 0 9.9C16.58 19.32 14.79 20 13 20c-.97 0-1.94-.21-2.84-.61l-1.49 1.49C10.02 21.62 11.51 22 13 22c2.3 0 4.61-.88 6.36-2.64 3.52-3.51 3.52-9.21 0-12.72z"/></svg>
<svg class="a" style="left:1096px;top:39px" width="14.4" height="14.4" viewBox="0 0 24 24"><path fill="#f1f1f1" d="M19 9h-4V3H9v6H5l7 7 7-7zM5 18v2h14v-2H5z"/></svg>
<svg class="a" style="left:1123.5px;top:39px" width="14.4" height="14.4" viewBox="0 0 24 24"><path fill="#f1f1f1" d="M19 8H5c-1.66 0-3 1.34-3 3v6h4v4h12v-4h4v-6c0-1.66-1.34-3-3-3zm-3 11H8v-5h8v5zm3-7c-.55 0-1-.45-1-1s.45-1 1-1 1 .45 1 1-.45 1-1 1zm-1-9H6v4h12V3z"/></svg>
<svg class="a" style="left:1150.6px;top:38.3px" width="14" height="14" viewBox="0 0 24 24"><path fill="#f1f1f1" d="M12 8c1.1 0 2-.9 2-2s-.9-2-2-2-2 .9-2 2 .9 2 2 2zm0 2c-1.1 0-2 .9-2 2s.9 2 2 2 2-.9 2-2-.9-2-2-2zm0 6c-1.1 0-2 .9-2 2s.9 2 2 2 2-.9 2-2-.9-2-2-2z"/></svg>
<div id="side"><div class="a" style="left:45px;top:12px;width:104px;height:73px;background:#8ab4f8;"></div><div class="a" style="left:49px;top:16px;width:96px;height:65px;overflow:hidden"><div class="a" style="left:0;top:0;width:96px;height:65px;background:#e3f6e8"></div><svg class="a" style="left:0;top:0" width="96" height="65" viewBox="0 0 227 155"><use href="#w1"/></svg><div class="a" style="left:0;top:0;width:96px;height:65px;background:radial-gradient(ellipse 30px 50px at 0 60%, rgba(120,215,140,.3), transparent),radial-gradient(ellipse 30px 30px at 100% 0, rgba(120,215,140,.25), transparent)"></div><div class="a" style="left:18.5px;top:2.3px;font-size:4.6px;line-height:1;color:#666;white-space:nowrap;font-weight:bold">中华人民共和国机动车驾驶证</div><div class="a" style="left:5px;top:16.5px;font-size:3.2px;line-height:1;color:#555;white-space:nowrap;">姓名</div><div class="a" style="left:5px;top:23px;font-size:3.2px;line-height:1;color:#555;white-space:nowrap;">住址</div><div class="a" style="left:89px;top:9px;width:14px;height:20px;border-radius:50%;background:#8da7b7"></div><div class="a" style="left:11px;top:9.8px;width:82px;height:42px;overflow:hidden;border-radius:8px;filter:blur(0.7px);"><div class="a" style="left:10.20px;top:0.00px;width:10.80px;height:10.80px;background:#d3dfd3"></div><div class="a" style="left:20.40px;top:0.00px;width:10.80px;height:10.80px;background:#c9d6c9"></div><div class="a" style="left:30.60px;top:0.00px;width:10.80px;height:10.80px;background:#c6d4c7"></div><div class="a" style="left:40.80px;top:0.00px;width:10.80px;height:10.80px;background:#c9d7ca"></div><div class="a" style="left:51.00px;top:0.00px;width:10.80px;height:10.80px;background:#c3d3c5"></div><div class="a" style="left:61.20px;top:0.00px;width:10.80px;height:10.80px;background:#cbd9cc"></div><div class="a" style="left:71.40px;top:0.00px;width:10.80px;height:10.80px;background:#cfddd0"></div><div class="a" style="left:0.00px;top:10.20px;width:10.80px;height:10.80px;background:#d6e2d6"></div><div class="a" style="left:10.20px;top:10.20px;width:10.80px;height:10.80px;background:#cdd9cd"></div><div class="a" style="left:20.40px;top:10.20px;width:10.80px;height:10.80px;background:#c4d1c5"></div><div class="a" style="left:30.60px;top:10.20px;width:10.80px;height:10.80px;background:#c8d5c9"></div><div class="a" style="left:40.80px;top:10.20px;width:10.80px;height:10.80px;background:#cbd8cc"></div><div class="a" style="left:51.00px;top:10.20px;width:10.80px;height:10.80px;background:#c5d3c6"></div><div class="a" style="left:61.20px;top:10.20px;width:10.80px;height:10.80px;background:#c9d7ca"></div><div class="a" style="left:71.40px;top:10.20px;width:10.80px;height:10.80px;background:#d2e0d3"></div><div class="a" style="left:0.00px;top:20.40px;width:10.80px;height:10.80px;background:#e6d6cc"></div><div class="a" style="left:10.20px;top:20.40px;width:10.80px;height:10.80px;background:#e0cfc6"></div><div class="a" style="left:20.40px;top:20.40px;width:10.80px;height:10.80px;background:#d1dbd2"></div><div class="a" style="left:30.60px;top:20.40px;width:10.80px;height:10.80px;background:#d6e2d7"></div><div class="a" style="left:40.80px;top:20.40px;width:10.80px;height:10.80px;background:#d2ded3"></div><div class="a" style="left:51.00px;top:20.40px;width:10.80px;height:10.80px;background:#cfdccf"></div><div class="a" style="left:10.20px;top:30.60px;width:10.80px;height:10.80px;background:#d8ddd6"></div><div class="a" style="left:20.40px;top:30.60px;width:10.80px;height:10.80px;background:#d6dfd6"></div><div class="a" style="left:30.60px;top:30.60px;width:10.80px;height:10.80px;background:#d3ded4"></div><div class="a" style="left:40.80px;top:30.60px;width:10.80px;height:10.80px;background:#cfdccf"></div></div><div class="a" style="left:3px;top:34px;width:22px;height:22px;border:0.8px solid #e06a5a"></div><div class="a" style="left:4px;top:36.0px;font-size:4.2px;line-height:1;color:#e0604f;white-space:nowrap;font-weight:bold;letter-spacing:0.9px">上海市公</div><div class="a" style="left:4px;top:42.6px;font-size:4.2px;line-height:1;color:#e0604f;white-space:nowrap;font-weight:bold;letter-spacing:0.9px">安局交通</div><div class="a" style="left:4px;top:49.2px;font-size:4.2px;line-height:1;color:#e0604f;white-space:nowrap;font-weight:bold;letter-spacing:0.9px">警察总队</div><div class="a" style="left:4.5px;top:57.4px;font-size:3.9px;line-height:1;color:#555;white-space:nowrap;font-family:'Liberation Serif',serif;">有效期限 2016-04-27至2022-04-27</div><div class="a" style="left:73px;top:32px;width:23px;height:33px;background:#ffffff;"></div><div class="a" style="left:77px;top:32px;width:15px;height:6px;background:#25272e;border-radius:6px 6px 0 0"></div><div class="a" style="left:72.8px;top:37px;width:20px;height:20px;overflow:hidden;border-radius:2px;filter:blur(0.5px);"><div class="a" style="left:0.00px;top:0.00px;width:10.40px;height:10.40px;background:#b3aaa6"></div><div class="a" style="left:9.80px;top:0.00px;width:10.40px;height:10.40px;background:#968885"></div><div class="a" style="left:0.00px;top:9.80px;width:10.40px;height:10.40px;background:#dcc9c2"></div><div class="a" style="left:9.80px;top:9.80px;width:10.40px;height:10.40px;background:#c6a59d"></div></div><div class="a" style="left:73px;top:54px;width:23px;height:11px;background:#20212d;border-radius:6px 6px 0 0"></div><div class="a" style="left:80px;top:56px;width:6px;height:5px;background:#b08f86;"></div></div><div class="lbl" style="left:86px;top:89px">1</div><div class="a" style="left:49px;top:114px;width:96px;height:65px;overflow:hidden;filter:brightness(0.74) saturate(0.8)"><div class="a thumb" style="left:0;top:0;width:227px;height:155px;transform:scale(0.4229);background:#dcf3dd"><div class="a" style="left:0;top:0;width:227px;height:155px;background:#e6f7ea"></div><svg class="a" style="left:0;top:0" width="227" height="155"><use href="#w2"/></svg><div class="a" style="left:0;top:0;width:227px;height:155px;background:radial-gradient(ellipse 60px 110px at 0 60%, rgba(120,215,140,.28), transparent),radial-gradient(ellipse 70px 60px at 100% 0, rgba(120,215,140,.22), transparent),radial-gradient(ellipse 70px 60px at 100% 100%, rgba(120,215,140,.2), transparent)"></div><div class="a" style="left:73.5px;top:9.8px;font-size:9.6px;line-height:1;color:#3a3a3a;white-space:nowrap;font-weight:bold;letter-spacing:-0.05px">准驾车型代号规定</div><div class="a" style="left:15.1px;top:23.0px;width:183px;height:91px;border:1.2px solid #5f665f"></div><div class="a" style="left:15.1px;top:34.375px;width:183px;height:1.1px;background:#646b64;"></div><div class="a" style="left:15.1px;top:45.75px;width:183px;height:1.1px;background:#646b64;"></div><div class="a" style="left:15.1px;top:57.125px;width:183px;height:1.1px;background:#646b64;"></div><div class="a" style="left:15.1px;top:68.5px;width:183px;height:1.1px;background:#646b64;"></div><div class="a" style="left:15.1px;top:79.875px;width:183px;height:1.1px;background:#646b64;"></div><div class="a" style="left:15.1px;top:91.25px;width:183px;height:1.1px;background:#646b64;"></div><div class="a" style="left:15.1px;top:102.625px;width:183px;height:1.1px;background:#646b64;"></div><div class="a" style="left:24.9px;top:23.0px;width:1.1px;height:91px;background:#646b64;"></div><div class="a" style="left:86.4px;top:23.0px;width:1.1px;height:91px;background:#646b64;"></div><div class="a" style="left:96.9px;top:23.0px;width:1.1px;height:91px;background:#646b64;"></div><div class="a" style="left:16.4px;top:25.4px;font-size:7.6px;line-height:1;color:#555;white-space:nowrap;font-family:'Liberation Serif',serif;letter-spacing:-0.5px">A1</div><div class="a" style="left:26.8px;top:25.4px;font-size:7.2px;line-height:1;color:#383838;white-space:nowrap;letter-spacing:-0.45px">大型客车和A3,B1,B2</div><div class="a" style="left:87.4px;top:25.4px;font-size:7.6px;line-height:1;color:#555;white-space:nowrap;font-family:'Liberation Serif',serif;letter-spacing:-0.5px">C4</div><div class="a" style="left:98.6px;top:25.4px;font-size:7.2px;line-height:1;color:#383838;white-space:nowrap;letter-spacing:-0.25px">三轮汽车</div><div class="a" style="left:16.4px;top:36.775px;font-size:7.6px;line-height:1;color:#555;white-space:nowrap;font-family:'Liberation Serif',serif;letter-spacing:-0.5px">A2</div><div class="a" style="left:26.8px;top:36.775px;font-size:7.2px;line-height:1;color:#383838;white-space:nowrap;letter-spacing:-0.45px">牵引车和B1,B2</div><div class="a" style="left:87.4px;top:36.775px;font-size:7.6px;line-height:1;color:#555;white-space:nowrap;font-family:'Liberation Serif',serif;letter-spacing:-0.5px">C5</div><div class="a" style="left:98.6px;top:36.775px;font-size:7.2px;line-height:1;color:#383838;white-space:nowrap;letter-spacing:-0.25px">残疾人专用小型自动挡载客汽车</div><div class="a" style="left:16.4px;top:48.15px;font-size:7.6px;line-height:1;color:#555;white-space:nowrap;font-family:'Liberation Serif',serif;letter-spacing:-0.5px">A3</div><div class="a" style="left:26.8px;top:48.15px;font-size:7.2px;line-height:1;color:#383838;white-space:nowrap;letter-spacing:-0.45px">城市公交车和C1</div><div class="a" style="left:89.6px;top:48.15px;font-size:7.6px;line-height:1;color:#555;white-space:nowrap;font-family:'Liberation Serif',serif;letter-spacing:-0.5px">D</div><div class="a" style="left:98.6px;top:48.15px;font-size:7.2px;line-height:1;color:#383838;white-space:nowrap;letter-spacing:-0.25px">普通三轮摩托车和E</div><div class="a" style="left:16.4px;top:59.525px;font-size:7.6px;line-height:1;color:#555;white-space:nowrap;font-family:'Liberation Serif',serif;letter-spacing:-0.5px">B1</div><div class="a" style="left:26.8px;top:59.525px;font-size:7.2px;line-height:1;color:#383838;white-space:nowrap;letter-spacing:-0.45px">中型客车和C1,M</div><div class="a" style="left:89.6px;top:59.525px;font-size:7.6px;line-height:1;color:#555;white-space:nowrap;font-family:'Liberation Serif',serif;letter-spacing:-0.5px">E</div><div class="a" style="left:98.6px;top:59.525px;font-size:7.2px;line-height:1;color:#383838;white-space:nowrap;letter-spacing:-0.25px">普通二轮摩托车和F</div><div class="a" style="left:16.4px;top:70.9px;font-size:7.6px;line-height:1;color:#555;white-space:nowrap;font-family:'Liberation Serif',serif;letter-spacing:-0.5px">B2</div><div class="a" style="left:26.8px;top:70.9px;font-size:7.2px;line-height:1;color:#383838;white-space:nowrap;letter-spacing:-0.45px">大型货车和C1,M</div><div class="a" style="left:89.6px;top:70.9px;font-size:7.6px;line-height:1;color:#555;white-space:nowrap;font-family:'Liberation Serif',serif;letter-spacing:-0.5px">F</div><div class="a" style="left:98.6px;top:70.9px;font-size:7.2px;line-height:1;color:#383838;white-space:nowrap;letter-spacing:-0.25px">轻便摩托车</div><div class="a" style="left:16.4px;top:82.275px;font-size:7.6px;line-height:1;color:#555;white-space:nowrap;font-family:'Liberation Serif',serif;letter-spacing:-0.5px">C1</div><div class="a" style="left:26.8px;top:82.275px;font-size:7.2px;line-height:1;color:#383838;white-space:nowrap;letter-spacing:-0.45px">小型汽车和C2,C3</div><div class="a" style="left:89.6px;top:82.275px;font-size:7.6px;line-height:1;color:#555;white-space:nowrap;font-family:'Liberation Serif',serif;letter-spacing:-0.5px">M</div><div class="a" style="left:98.6px;top:82.275px;font-size:7.2px;line-height:1;color:#383838;white-space:nowrap;letter-spacing:-0.25px">轮式自行机械车</div><div class="a" style="left:16.4px;top:93.65px;font-size:7.6px;line-height:1;color:#555;white-space:nowrap;font-family:'Liberation Serif',serif;letter-spacing:-0.5px">C2</div><div class="a" style="left:26.8px;top:93.65px;font-size:7.2px;line-height:1;color:#383838;white-space:nowrap;letter-spacing:-0.45px">小型自动挡汽车</div><div class="a" style="left:89.6px;top:93.65px;font-size:7.6px;line-height:1;color:#555;white-space:nowrap;font-family:'Liberation Serif',serif;letter-spacing:-0.5px">N</div><div class="a" style="left:98.6px;top:93.65px;font-size:7.2px;line-height:1;color:#383838;white-space:nowrap;letter-spacing:-0.25px">无轨电车</div><div class="a" style="left:16.4px;top:105.025px;font-size:7.6px;line-height:1;color:#555;white-space:nowrap;font-family:'Liberation Serif',serif;letter-spacing:-0.5px">C3</div><div class="a" style="left:26.8px;top:105.025px;font-size:7.2px;line-height:1;color:#383838;white-space:nowrap;letter-spacing:-0.45px">低速载货汽车和C4</div><div class="a" style="left:89.6px;top:105.025px;font-size:7.6px;line-height:1;color:#555;white-space:nowrap;font-family:'Liberation Serif',serif;letter-spacing:-0.5px">P</div><div class="a" style="left:98.6px;top:105.025px;font-size:7.2px;line-height:1;color:#383838;white-space:nowrap;letter-spacing:-0.25px">有轨电车</div><div class="a" style="left:0;top:0;width:227px;height:155px;filter:blur(0.25px)"><div class="a" style="left:24.00px;top:122.2px;width:1.3px;height:18.5px;background:#444"></div><div class="a" style="left:26.40px;top:122.2px;width:1.8px;height:18.5px;background:#3a3a3a"></div><div class="a" style="left:29.00px;top:122.2px;width:1.8px;height:18.5px;background:#444"></div><div class="a" style="left:32.30px;top:122.2px;width:1.8px;height:18.5px;background:#3a3a3a"></div><div class="a" style="left:34.90px;top:122.2px;width:1.3px;height:18.5px;background:#555"></div><div class="a" style="left:37.00px;top:122.2px;width:0.8px;height:18.5px;background:#2a2a2a"></div><div class="a" style="left:39.30px;top:122.2px;width:1.3px;height:18.5px;background:#444"></div><div class="a" style="left:42.10px;top:122.2px;width:1.8px;height:18.5px;background:#3a3a3a"></div><div class="a" style="left:45.40px;top:122.2px;width:0.8px;height:18.5px;background:#2a2a2a"></div><div class="a" style="left:47.00px;top:122.2px;width:0.8px;height:18.5px;background:#3a3a3a"></div><div class="a" style="left:48.60px;top:122.2px;width:1.8px;height:18.5px;background:#2a2a2a"></div><div class="a" style="left:51.50px;top:122.2px;width:1.0px;height:18.5px;background:#444"></div><div class="a" style="left:54.00px;top:122.2px;width:0.8px;height:18.5px;background:#3a3a3a"></div><div class="a" style="left:56.30px;top:122.2px;width:1.0px;height:18.5px;background:#444"></div><div class="a" style="left:58.10px;top:122.2px;width:0.8px;height:18.5px;background:#444"></div><div class="a" style="left:60.40px;top:122.2px;width:1.0px;height:18.5px;background:#444"></div><div class="a" style="left:62.90px;top:122.2px;width:0.8px;height:18.5px;background:#555"></div><div class="a" style="left:64.80px;top:122.2px;width:0.8px;height:18.5px;background:#555"></div><div class="a" style="left:66.40px;top:122.2px;width:0.8px;height:18.5px;background:#2a2a2a"></div><div class="a" style="left:68.30px;top:122.2px;width:0.8px;height:18.5px;background:#555"></div><div class="a" style="left:70.20px;top:122.2px;width:0.8px;height:18.5px;background:#2a2a2a"></div><div class="a" style="left:72.50px;top:122.2px;width:0.8px;height:18.5px;background:#3a3a3a"></div><div class="a" style="left:74.10px;top:122.2px;width:0.8px;height:18.5px;background:#444"></div><div class="a" style="left:76.00px;top:122.2px;width:1.3px;height:18.5px;background:#444"></div><div class="a" style="left:78.10px;top:122.2px;width:1.8px;height:18.5px;background:#3a3a3a"></div><div class="a" style="left:81.40px;top:122.2px;width:1.0px;height:18.5px;background:#555"></div><div class="a" style="left:83.20px;top:122.2px;width:1.0px;height:18.5px;background:#555"></div><div class="a" style="left:85.00px;top:122.2px;width:1.3px;height:18.5px;background:#2a2a2a"></div><div class="a" style="left:87.10px;top:122.2px;width:0.8px;height:18.5px;background:#2a2a2a"></div><div class="a" style="left:88.70px;top:122.2px;width:0.8px;height:18.5px;background:#444"></div><div class="a" style="left:90.60px;top:122.2px;width:0.8px;height:18.5px;background:#3a3a3a"></div><div class="a" style="left:92.50px;top:122.2px;width:1.8px;height:18.5px;background:#3a3a3a"></div><div class="a" style="left:95.80px;top:122.2px;width:0.8px;height:18.5px;background:#444"></div><div class="a" style="left:98.10px;top:122.2px;width:1.3px;height:18.5px;background:#2a2a2a"></div><div class="a" style="left:100.50px;top:122.2px;width:1.3px;height:18.5px;background:#3a3a3a"></div><div class="a" style="left:102.60px;top:122.2px;width:1.0px;height:18.5px;background:#555"></div><div class="a" style="left:104.40px;top:122.2px;width:0.8px;height:18.5px;background:#3a3a3a"></div><div class="a" style="left:106.30px;top:122.2px;width:1.8px;height:18.5px;background:#2a2a2a"></div><div class="a" style="left:108.90px;top:122.2px;width:0.8px;height:18.5px;background:#3a3a3a"></div><div class="a" style="left:110.80px;top:122.2px;width:1.0px;height:18.5px;background:#2a2a2a"></div><div class="a" style="left:113.30px;top:122.2px;width:1.0px;height:18.5px;background:#555"></div><div class="a" style="left:115.40px;top:122.2px;width:0.8px;height:18.5px;background:#2a2a2a"></div><div class="a" style="left:117.00px;top:122.2px;width:0.8px;height:18.5px;background:#3a3a3a"></div><div class="a" style="left:118.60px;top:122.2px;width:1.8px;height:18.5px;background:#555"></div><div class="a" style="left:121.50px;top:122.2px;width:1.8px;height:18.5px;background:#444"></div><div class="a" style="left:124.10px;top:122.2px;width:1.8px;height:18.5px;background:#444"></div><div class="a" style="left:127.40px;top:122.2px;width:0.8px;height:18.5px;background:#444"></div><div class="a" style="left:129.00px;top:122.2px;width:0.8px;height:18.5px;background:#555"></div></div><div class="a" style="left:25.3px;top:141px;font-size:6px;line-height:1;color:#222;white-space:nowrap;font-family:'Liberation Serif',serif;letter-spacing:4.1px">*3150010418238*</div><div class="a" style="left:140px;top:123.20px;width:58.2px;text-align:right;font-size:6.05px;line-height:1;color:#3a3a3a;white-space:nowrap;font-weight:bold">除公安交通管</div><div class="a" style="left:140px;top:129.35px;width:58.2px;text-align:right;font-size:6.05px;line-height:1;color:#3a3a3a;white-space:nowrap;font-weight:bold">理机关以外，其他</div><div class="a" style="left:140px;top:135.50px;width:58.2px;text-align:right;font-size:6.05px;line-height:1;color:#3a3a3a;white-space:nowrap;font-weight:bold">单位或个人一律不</div><div class="a" style="left:149.6px;top:141.65px;font-size:6.05px;line-height:1;color:#3a3a3a;white-space:nowrap;font-weight:bold">得扣留此证。</div><div class="a" style="left:178px;top:134px;width:26px;height:24px;border-radius:50%;background:radial-gradient(circle, rgba(190,235,200,.0) 30%, rgba(170,225,180,.7) 45%, rgba(200,240,210,.3) 70%, transparent 72%)"></div><div class="a" style="left:204.5px;top:0;width:4px;height:155px;background:rgba(240,250,245,.55)"></div><div class="a" style="left:205.6px;top:0;width:2.2px;height:155px;background:repeating-linear-gradient(rgba(47,111,112,.25) 0 16.5px, rgba(47,111,112,.85) 16.5px 26.5px);background-position:0 8.5px"></div></div></div><div class="lbl" style="left:86px;top:187px">2</div><div class="a" style="left:49px;top:212px;width:96px;height:65px;overflow:hidden;filter:brightness(0.74) saturate(0.8)"><div class="a thumb" style="left:0;top:0;width:227px;height:155px;transform:scale(0.4229);background:#dcf3dd"><div class="a" style="left:0;top:0;width:227px;height:155px;background:#e6f7ea"></div><svg class="a" style="left:0;top:0" width="227" height="155"><use href="#w3"/></svg><div class="a" style="left:0;top:0;width:227px;height:155px;background:radial-gradient(ellipse 60px 110px at 0 60%, rgba(120,215,140,.28), transparent),radial-gradient(ellipse 70px 60px at 100% 0, rgba(120,215,140,.22), transparent),radial-gradient(ellipse 70px 60px at 100% 100%, rgba(120,215,140,.2), transparent)"></div><div class="a" style="left:32.5px;top:7.5px;font-size:10.8px;line-height:1;color:#444;white-space:nowrap;letter-spacing:-0.05px;font-weight:bold">中华人民共和国机动车驾驶证副页</div><div class="a" style="left:64.4px;top:24.7px;width:18px;height:7px;background:#8e8e98;"></div><div class="a" style="left:89.6px;top:25px;font-size:6.8px;line-height:1;color:#555;white-space:nowrap;font-family:'Liberation Serif',serif;letter-spacing:0.3px">330781198612231618</div><div class="a" style="left:59px;top:34.5px;font-size:9.5px;line-height:1;color:#444;white-space:nowrap;">冯磊</div><div class="a" style="left:143px;top:35px;font-size:8.5px;line-height:1;color:#444;white-space:nowrap;font-family:'Liberation Serif',serif;letter-spacing:0.2px">310021400088</div><div class="a" style="left:14.5px;top:42.6px;font-size:7.2px;line-height:1;color:#4a4a4a;white-space:nowrap;font-weight:bold">姓名</div><div class="a" style="left:28.8px;top:49px;width:23px;height:0.7px;background:#a4a8a4;"></div><div class="a" style="left:89px;top:49px;width:19px;height:0.7px;background:#a4a8a4;"></div><div class="a" style="left:110.8px;top:42.6px;font-size:7.2px;line-height:1;color:#4a4a4a;white-space:nowrap;font-weight:bold;letter-spacing:-0.6px">档案编号</div><div class="a" style="left:139.8px;top:49px;width:74px;height:0.7px;background:#a4a8a4;"></div><div class="a" style="left:14.5px;top:63.6px;font-size:7.2px;line-height:1;color:#4a4a4a;white-space:nowrap;font-weight:bold">记录</div><div class="a" style="left:32.5px;top:59.5px;font-size:11px;line-height:1;color:#2a2a2a;white-space:nowrap;font-family:'Liberation Serif',serif;letter-spacing:-0.45px">实习期至2017年04月26日。</div><div class="a" style="left:14.3px;top:71px;width:199.5px;height:1px;background:repeating-linear-gradient(90deg,#a0a5a0 0 1px, transparent 1px 1.8px)"></div><div class="a" style="left:14.3px;top:93px;width:199.5px;height:1px;background:repeating-linear-gradient(90deg,#a0a5a0 0 1px, transparent 1px 1.8px)"></div><div class="a" style="left:14.3px;top:115px;width:199.5px;height:1px;background:repeating-linear-gradient(90deg,#a0a5a0 0 1px, transparent 1px 1.8px)"></div><div class="a" style="left:14.3px;top:137px;width:199.5px;height:1px;background:repeating-linear-gradient(90deg,#a0a5a0 0 1px, transparent 1px 1.8px)"></div></div></div><div class="lbl" style="left:86px;top:285px">3</div><div class="a" style="left:49px;top:311px;width:96px;height:65px;overflow:hidden;filter:brightness(0.74) saturate(0.8)"><div class="a thumb" style="left:0;top:0;width:227px;height:155px;transform:scale(0.4229);background:#dcf3dd"><div class="a" style="left:0;top:0;width:227px;height:155px;background:#e6f7ea"></div><svg class="a" style="left:0;top:0" width="227" height="155"><use href="#w4"/></svg><div class="a" style="left:0;top:0;width:227px;height:155px;background:radial-gradient(ellipse 60px 110px at 0 60%, rgba(120,215,140,.28), transparent),radial-gradient(ellipse 70px 60px at 100% 0, rgba(120,215,140,.22), transparent),radial-gradient(ellipse 70px 60px at 100% 100%, rgba(120,215,140,.2), transparent)"></div><div class="a" style="left:13px;top:21px;font-size:8px;line-height:1;color:#444;white-space:nowrap;">记录</div><div class="a" style="left:11px;top:29px;width:188px;height:1.2px;background:#a3aca4;"></div><div class="a" style="left:11px;top:51px;width:188px;height:1.2px;background:#a3aca4;"></div><div class="a" style="left:11px;top:72.5px;width:188px;height:1.2px;background:#a3aca4;"></div><div class="a" style="left:11px;top:94px;width:188px;height:1.2px;background:#a3aca4;"></div><div class="a" style="left:11px;top:115px;width:188px;height:1.2px;background:#a3aca4;"></div><div class="a" style="left:11px;top:136px;width:188px;height:1.2px;background:#a3aca4;"></div><div class="a" style="left:204px;top:0;width:2.4px;height:155px;background:repeating-linear-gradient(#2e6a66 0 7px, rgba(46,106,102,.15) 7px 22px)"></div><div class="a" style="left:170px;top:-22px;width:40px;height:40px;border-radius:50%;background:radial-gradient(circle, rgba(120,210,140,0) 35%, rgba(120,210,140,.6) 45%, rgba(120,210,140,.2) 65%, transparent 70%)"></div></div></div><div class="lbl" style="left:86px;top:383.5px">4</div><div class="a" style="left:49px;top:409px;width:96px;height:65px;background:#9d9d9f;"></div><div class="a" style="left:58px;top:413px;font-size:4.6px;line-height:1;color:#666;white-space:nowrap;">驾驶证状态:正常</div></div><div id="main"><div class="a pg" style="left:367px;top:2px;width:227px;height:154.2px"><div class="a" style="left:0;top:0;width:227px;height:155px;background:#e6f7ea"></div><svg class="a" style="left:0;top:0" width="227" height="155"><use href="#w1"/></svg><div class="a" style="left:0;top:0;width:227px;height:155px;background:radial-gradient(ellipse 60px 110px at 0 60%, rgba(120,215,140,.28), transparent),radial-gradient(ellipse 70px 60px at 100% 0, rgba(120,215,140,.22), transparent),radial-gradient(ellipse 70px 60px at 100% 100%, rgba(120,215,140,.2), transparent)"></div><div class="a" style="left:0;top:0;width:227px;height:155px;opacity:.6"><div class="a" style="left:11px;top:121.50px;height:13px;font-size:13px;line-height:1;color:rgba(238,160,90,.5);white-space:nowrap;font-family:'Liberation Serif',serif;font-weight:bold;transform:rotate(-37deg);transform-origin:0 50%">证照用途：通过出租车驾驶</div><div class="a" style="left:34px;top:134.50px;height:13px;font-size:13px;line-height:1;color:rgba(238,160,90,.5);white-space:nowrap;font-family:'Liberation Serif',serif;font-weight:bold;transform:rotate(-33deg);transform-origin:0 50%">调取时间：2021年03月20日</div></div><div class="a" style="left:44.3px;top:6.2px;font-size:10.8px;line-height:1;color:#555;white-space:nowrap;font-weight:bold;letter-spacing:-0.3px">中华人民共和国机动车驾驶证</div><div class="a" style="left:45.5px;top:17.6px;font-size:6.4px;line-height:1;color:#6a6a72;white-space:nowrap;font-family:'Liberation Serif',serif;letter-spacing:0.25px">Driving Licence of the People's Republic of China</div><div class="a" style="left:66.4px;top:25.0px;width:19.2px;height:9.4px;background:#8f8a9c;"></div><div class="a" style="left:67.2px;top:25.6px;font-size:8.2px;line-height:1;color:#d4d0dc;white-space:nowrap;font-weight:bold;letter-spacing:0.4px">证号</div><div class="a" style="left:12.3px;top:39.3px;font-size:7.5px;line-height:1;color:#3e3e3e;white-space:nowrap;font-family:'Liberation Serif',serif;">姓名</div><div class="a" style="left:12.3px;top:46.5px;font-size:4.8px;line-height:1;color:#555;white-space:nowrap;font-family:'Liberation Serif',serif;">Name</div><div class="a" style="left:12.3px;top:55px;font-size:7.5px;line-height:1;color:#3e3e3e;white-space:nowrap;font-family:'Liberation Serif',serif;">住址</div><div class="a" style="left:12.3px;top:62px;font-size:4.8px;line-height:1;color:#555;white-space:nowrap;font-family:'Liberation Serif',serif;">Address</div><div class="a" style="left:84.7px;top:16px;width:98px;height:21px;overflow:hidden;border-radius:6px;filter:blur(0.6px);"><div class="a" style="left:0.00px;top:0.00px;width:10.90px;height:10.90px;background:#c2ccc1"></div><div class="a" style="left:10.30px;top:0.00px;width:10.90px;height:10.90px;background:#c0cec1"></div><div class="a" style="left:20.60px;top:0.00px;width:10.90px;height:10.90px;background:#d1ddcf"></div><div class="a" style="left:30.90px;top:0.00px;width:10.90px;height:10.90px;background:#c9dacd"></div><div class="a" style="left:41.20px;top:0.00px;width:10.90px;height:10.90px;background:#cdded0"></div><div class="a" style="left:51.50px;top:0.00px;width:10.90px;height:10.90px;background:#c5cfc4"></div><div class="a" style="left:61.80px;top:0.00px;width:10.90px;height:10.90px;background:#bac8bf"></div><div class="a" style="left:72.10px;top:0.00px;width:10.90px;height:10.90px;background:#bdc9be"></div><div class="a" style="left:82.40px;top:0.00px;width:10.90px;height:10.90px;background:#bec9be"></div><div class="a" style="left:92.70px;top:0.00px;width:10.90px;height:10.90px;background:#cdd8cc"></div><div class="a" style="left:0.00px;top:10.30px;width:10.90px;height:10.90px;background:#c2d2c4"></div><div class="a" style="left:10.30px;top:10.30px;width:10.90px;height:10.90px;background:#bdccbb"></div><div class="a" style="left:20.60px;top:10.30px;width:10.90px;height:10.90px;background:#c1cdc2"></div><div class="a" style="left:30.90px;top:10.30px;width:10.90px;height:10.90px;background:#cddccc"></div><div class="a" style="left:41.20px;top:10.30px;width:10.90px;height:10.90px;background:#c5d5c7"></div><div class="a" style="left:51.50px;top:10.30px;width:10.90px;height:10.90px;background:#cddccb"></div><div class="a" style="left:61.80px;top:10.30px;width:10.90px;height:10.90px;background:#cadacd"></div><div class="a" style="left:72.10px;top:10.30px;width:10.90px;height:10.90px;background:#c1d1c2"></div><div class="a" style="left:82.40px;top:10.30px;width:10.90px;height:10.90px;background:#bfcebd"></div><div class="a" style="left:92.70px;top:10.30px;width:10.90px;height:10.90px;background:#c3d0c2"></div></div><div class="a" style="left:40.3px;top:34.5px;width:46px;height:16px;overflow:hidden;border-radius:5px;filter:blur(0.6px);"><div class="a" style="left:0.00px;top:0.00px;width:10.90px;height:10.90px;background:#c6d1c9"></div><div class="a" style="left:10.30px;top:0.00px;width:10.90px;height:10.90px;background:#ccd7cf"></div><div class="a" style="left:20.60px;top:0.00px;width:10.90px;height:10.90px;background:#cfd6d0"></div><div class="a" style="left:30.90px;top:0.00px;width:10.90px;height:10.90px;background:#cdd8cf"></div><div class="a" style="left:41.20px;top:0.00px;width:10.90px;height:10.90px;background:#d4ded5"></div><div class="a" style="left:0.00px;top:10.30px;width:10.90px;height:10.90px;background:#cdd8d0"></div><div class="a" style="left:10.30px;top:10.30px;width:10.90px;height:10.90px;background:#d5e1d7"></div><div class="a" style="left:20.60px;top:10.30px;width:10.90px;height:10.90px;background:#d6e4d7"></div><div class="a" style="left:30.90px;top:10.30px;width:10.90px;height:10.90px;background:#cdd7ce"></div><div class="a" style="left:41.20px;top:10.30px;width:10.90px;height:10.90px;background:#d0dbd4"></div></div><div class="a" style="left:85px;top:36.8px;width:92px;height:7px;overflow:hidden;border-radius:3px;filter:blur(0.6px);opacity:.8"><div class="a" style="left:0.00px;top:0.00px;width:10.90px;height:10.90px;background:#d7e7d9"></div><div class="a" style="left:10.30px;top:0.00px;width:10.90px;height:10.90px;background:#d3ded4"></div><div class="a" style="left:20.60px;top:0.00px;width:10.90px;height:10.90px;background:#d7e6db"></div><div class="a" style="left:30.90px;top:0.00px;width:10.90px;height:10.90px;background:#d5dfd7"></div><div class="a" style="left:41.20px;top:0.00px;width:10.90px;height:10.90px;background:#d3e0d3"></div><div class="a" style="left:51.50px;top:0.00px;width:10.90px;height:10.90px;background:#d4e1d9"></div><div class="a" style="left:61.80px;top:0.00px;width:10.90px;height:10.90px;background:#d1e3d5"></div><div class="a" style="left:72.10px;top:0.00px;width:10.90px;height:10.90px;background:#dbe6da"></div><div class="a" style="left:82.40px;top:0.00px;width:10.90px;height:10.90px;background:#d2ddd0"></div></div><div class="a" style="left:109px;top:40px;font-size:7px;line-height:1;color:#3e3e3e;white-space:nowrap;font-family:'Liberation Serif',serif;">性别</div><div class="a" style="left:128px;top:40px;font-size:9.5px;line-height:1;color:#333;white-space:nowrap;font-family:'Liberation Serif',serif;">男</div><div class="a" style="left:147px;top:41px;font-size:6.5px;line-height:1;color:#444;white-space:nowrap;font-family:'Liberation Serif',serif;">国籍</div><div class="a" style="left:147px;top:47px;font-size:4.2px;line-height:1;color:#555;white-space:nowrap;font-family:'Liberation Serif',serif;">Nationality</div><div class="a" style="left:172.5px;top:39.8px;font-size:10px;line-height:1;color:#3a3a3a;white-space:nowrap;font-family:'Liberation Serif',serif;letter-spacing:-0.2px">中国/CHN</div><div class="a" style="left:20.4px;top:50.4px;width:184px;height:18px;overflow:hidden;border-radius:8px;filter:blur(0.6px);"><div class="a" style="left:0.00px;top:0.00px;width:10.90px;height:10.90px;background:#b9c7b7"></div><div class="a" style="left:10.30px;top:0.00px;width:10.90px;height:10.90px;background:#bdcabe"></div><div class="a" style="left:20.60px;top:0.00px;width:10.90px;height:10.90px;background:#b4beb4"></div><div class="a" style="left:30.90px;top:0.00px;width:10.90px;height:10.90px;background:#bac5b8"></div><div class="a" style="left:41.20px;top:0.00px;width:10.90px;height:10.90px;background:#c1cfc1"></div><div class="a" style="left:51.50px;top:0.00px;width:10.90px;height:10.90px;background:#bbc9bc"></div><div class="a" style="left:61.80px;top:0.00px;width:10.90px;height:10.90px;background:#c1ccbf"></div><div class="a" style="left:72.10px;top:0.00px;width:10.90px;height:10.90px;background:#b7c1b6"></div><div class="a" style="left:82.40px;top:0.00px;width:10.90px;height:10.90px;background:#b0bfb3"></div><div class="a" style="left:92.70px;top:0.00px;width:10.90px;height:10.90px;background:#bdcbbf"></div><div class="a" style="left:103.00px;top:0.00px;width:10.90px;height:10.90px;background:#bdccbd"></div><div class="a" style="left:113.30px;top:0.00px;width:10.90px;height:10.90px;background:#b0c0b1"></div><div class="a" style="left:123.60px;top:0.00px;width:10.90px;height:10.90px;background:#b9c6ba"></div><div class="a" style="left:133.90px;top:0.00px;width:10.90px;height:10.90px;background:#c1d0c1"></div><div class="a" style="left:144.20px;top:0.00px;width:10.90px;height:10.90px;background:#c3d0c4"></div><div class="a" style="left:154.50px;top:0.00px;width:10.90px;height:10.90px;background:#b7c3b8"></div><div class="a" style="left:164.80px;top:0.00px;width:10.90px;height:10.90px;background:#c2d1c6"></div><div class="a" style="left:175.10px;top:0.00px;width:10.90px;height:10.90px;background:#c4cec2"></div><div class="a" style="left:0.00px;top:10.30px;width:10.90px;height:10.90px;background:#d9e3db"></div><div class="a" style="left:10.30px;top:10.30px;width:10.90px;height:10.90px;background:#dce7dc"></div><div class="a" style="left:20.60px;top:10.30px;width:10.90px;height:10.90px;background:#d7e4d7"></div><div class="a" style="left:30.90px;top:10.30px;width:10.90px;height:10.90px;background:#e0ede5"></div><div class="a" style="left:41.20px;top:10.30px;width:10.90px;height:10.90px;background:#deeade"></div><div class="a" style="left:51.50px;top:10.30px;width:10.90px;height:10.90px;background:#d7e2d6"></div><div class="a" style="left:61.80px;top:10.30px;width:10.90px;height:10.90px;background:#e0ece0"></div><div class="a" style="left:72.10px;top:10.30px;width:10.90px;height:10.90px;background:#d8e4d9"></div><div class="a" style="left:82.40px;top:10.30px;width:10.90px;height:10.90px;background:#d9e3d9"></div><div class="a" style="left:92.70px;top:10.30px;width:10.90px;height:10.90px;background:#dde9de"></div><div class="a" style="left:103.00px;top:10.30px;width:10.90px;height:10.90px;background:#dde7e0"></div><div class="a" style="left:113.30px;top:10.30px;width:10.90px;height:10.90px;background:#d8e6dd"></div><div class="a" style="left:123.60px;top:10.30px;width:10.90px;height:10.90px;background:#e1efe1"></div><div class="a" style="left:133.90px;top:10.30px;width:10.90px;height:10.90px;background:#ddeadd"></div><div class="a" style="left:144.20px;top:10.30px;width:10.90px;height:10.90px;background:#dde7dc"></div><div class="a" style="left:154.50px;top:10.30px;width:10.90px;height:10.90px;background:#dae4d9"></div><div class="a" style="left:164.80px;top:10.30px;width:10.90px;height:10.90px;background:#d7e2d9"></div><div class="a" style="left:175.10px;top:10.30px;width:10.90px;height:10.90px;background:#dfeade"></div></div><div class="a" style="left:90.8px;top:75px;width:72px;height:25px;overflow:hidden;border-radius:6px;filter:blur(0.6px);"><div class="a" style="left:0.00px;top:0.00px;width:10.90px;height:10.90px;background:#d7e5da"></div><div class="a" style="left:10.30px;top:0.00px;width:10.90px;height:10.90px;background:#c5d1c3"></div><div class="a" style="left:20.60px;top:0.00px;width:10.90px;height:10.90px;background:#c7d7cb"></div><div class="a" style="left:30.90px;top:0.00px;width:10.90px;height:10.90px;background:#ccdbca"></div><div class="a" style="left:41.20px;top:0.00px;width:10.90px;height:10.90px;background:#d5e2d6"></div><div class="a" style="left:51.50px;top:0.00px;width:10.90px;height:10.90px;background:#d1ded3"></div><div class="a" style="left:61.80px;top:0.00px;width:10.90px;height:10.90px;background:#c7d6cc"></div><div class="a" style="left:0.00px;top:10.30px;width:10.90px;height:10.90px;background:#d8e4d7"></div><div class="a" style="left:10.30px;top:10.30px;width:10.90px;height:10.90px;background:#c2d1c4"></div><div class="a" style="left:20.60px;top:10.30px;width:10.90px;height:10.90px;background:#c8d7ca"></div><div class="a" style="left:30.90px;top:10.30px;width:10.90px;height:10.90px;background:#ccd7ca"></div><div class="a" style="left:41.20px;top:10.30px;width:10.90px;height:10.90px;background:#cbd8c9"></div><div class="a" style="left:51.50px;top:10.30px;width:10.90px;height:10.90px;background:#d0dccf"></div><div class="a" style="left:61.80px;top:10.30px;width:10.90px;height:10.90px;background:#cadacd"></div><div class="a" style="left:0.00px;top:20.60px;width:10.90px;height:10.90px;background:#d9e3da"></div><div class="a" style="left:10.30px;top:20.60px;width:10.90px;height:10.90px;background:#ccdccf"></div><div class="a" style="left:20.60px;top:20.60px;width:10.90px;height:10.90px;background:#cedbcd"></div><div class="a" style="left:30.90px;top:20.60px;width:10.90px;height:10.90px;background:#d4e0d2"></div><div class="a" style="left:41.20px;top:20.60px;width:10.90px;height:10.90px;background:#cadace"></div><div class="a" style="left:51.50px;top:20.60px;width:10.90px;height:10.90px;background:#c6d3c5"></div><div class="a" style="left:61.80px;top:20.60px;width:10.90px;height:10.90px;background:#d2dcd2"></div></div><div class="a" style="left:120px;top:98px;width:43px;height:16px;overflow:hidden;border-radius:4px;filter:blur(0.6px);"><div class="a" style="left:0.00px;top:0.00px;width:10.90px;height:10.90px;background:#d1dfd4"></div><div class="a" style="left:10.30px;top:0.00px;width:10.90px;height:10.90px;background:#d8e2d8"></div><div class="a" style="left:20.60px;top:0.00px;width:10.90px;height:10.90px;background:#cddccf"></div><div class="a" style="left:30.90px;top:0.00px;width:10.90px;height:10.90px;background:#d0d9d1"></div><div class="a" style="left:41.20px;top:0.00px;width:10.90px;height:10.90px;background:#d6e6da"></div><div class="a" style="left:0.00px;top:10.30px;width:10.90px;height:10.90px;background:#d1e1d3"></div><div class="a" style="left:10.30px;top:10.30px;width:10.90px;height:10.90px;background:#d6e4d4"></div><div class="a" style="left:20.60px;top:10.30px;width:10.90px;height:10.90px;background:#d9eade"></div><div class="a" style="left:30.90px;top:10.30px;width:10.90px;height:10.90px;background:#d3dfd2"></div><div class="a" style="left:41.20px;top:10.30px;width:10.90px;height:10.90px;background:#d6e6d9"></div></div><div class="a" style="left:8.9px;top:80.2px;width:52px;height:51.6px;border:1.6px solid #e0604f"></div><div class="a" style="left:12.6px;top:84.8px;font-size:9.6px;line-height:1;color:#e04a3a;white-space:nowrap;letter-spacing:2.15px;-webkit-text-stroke:0.25px #e04a3a">上海市公</div><div class="a" style="left:12.6px;top:100.1px;font-size:9.6px;line-height:1;color:#e04a3a;white-space:nowrap;letter-spacing:2.15px;-webkit-text-stroke:0.25px #e04a3a">安局交通</div><div class="a" style="left:12.6px;top:115.4px;font-size:9.6px;line-height:1;color:#e04a3a;white-space:nowrap;letter-spacing:2.15px;-webkit-text-stroke:0.25px #e04a3a">警察总队</div><div class="a" style="left:62px;top:86px;font-size:6.8px;line-height:1;color:#3e3e3e;white-space:nowrap;font-family:'Liberation Serif',serif;">出生日期</div><div class="a" style="left:62px;top:92.8px;font-size:5px;line-height:1;color:#555;white-space:nowrap;font-family:'Liberation Serif',serif;">Date of Birth</div><div class="a" style="left:62px;top:102.5px;font-size:6.8px;line-height:1;color:#3e3e3e;white-space:nowrap;font-family:'Liberation Serif',serif;">初次领证日期</div><div class="a" style="left:62px;top:109px;font-size:5px;line-height:1;color:#555;white-space:nowrap;font-family:'Liberation Serif',serif;">Date of First Issue</div><div class="a" style="left:62px;top:118.5px;font-size:6.8px;line-height:1;color:#3e3e3e;white-space:nowrap;font-family:'Liberation Serif',serif;">准驾车型</div><div class="a" style="left:62px;top:125px;font-size:5px;line-height:1;color:#555;white-space:nowrap;font-family:'Liberation Serif',serif;">Class</div><div class="a" style="left:108.4px;top:100.5px;font-size:10.5px;line-height:1;color:#333;white-space:nowrap;font-family:'Liberation Serif',serif;">2C</div><div class="a" style="left:91.3px;top:114.4px;width:69.5px;height:16px;border:0.8px solid #9aa09a;background:rgba(240,250,240,.5)"></div><div class="a" style="left:118px;top:118.5px;font-size:9.5px;line-height:1;color:#333;white-space:nowrap;font-family:'Liberation Serif',serif;">C1</div><div class="a" style="left:12.3px;top:134.5px;font-size:6.8px;line-height:1;color:#3e3e3e;white-space:nowrap;font-family:'Liberation Serif',serif;">有效期限</div><div class="a" style="left:12.3px;top:140.8px;font-size:5px;line-height:1;color:#555;white-space:nowrap;font-family:'Liberation Serif',serif;">Valid Period</div><div class="a" style="left:43px;top:134px;font-size:10.5px;line-height:1;color:#333;white-space:nowrap;font-family:'Liberation Serif',serif;">2016-0</div><div class="a" style="left:158px;top:134px;font-size:10.5px;line-height:1;color:#333;white-space:nowrap;font-family:'Liberation Serif',serif;">7</div><div class="a" style="left:76.3px;top:128px;width:82px;height:20.5px;overflow:hidden;border-radius:9px;filter:blur(0.6px);"><div class="a" style="left:0.00px;top:0.00px;width:10.90px;height:10.90px;background:#cfdacc"></div><div class="a" style="left:10.30px;top:0.00px;width:10.90px;height:10.90px;background:#cbdacd"></div><div class="a" style="left:20.60px;top:0.00px;width:10.90px;height:10.90px;background:#d7e1d7"></div><div class="a" style="left:30.90px;top:0.00px;width:10.90px;height:10.90px;background:#dae8dd"></div><div class="a" style="left:41.20px;top:0.00px;width:10.90px;height:10.90px;background:#ceddd1"></div><div class="a" style="left:51.50px;top:0.00px;width:10.90px;height:10.90px;background:#d6ded5"></div><div class="a" style="left:61.80px;top:0.00px;width:10.90px;height:10.90px;background:#d4e2d7"></div><div class="a" style="left:72.10px;top:0.00px;width:10.90px;height:10.90px;background:#d5ded3"></div><div class="a" style="left:0.00px;top:10.30px;width:10.90px;height:10.90px;background:#d3dfd7"></div><div class="a" style="left:10.30px;top:10.30px;width:10.90px;height:10.90px;background:#d2dfd1"></div><div class="a" style="left:20.60px;top:10.30px;width:10.90px;height:10.90px;background:#deeada"></div><div class="a" style="left:30.90px;top:10.30px;width:10.90px;height:10.90px;background:#d6e5d8"></div><div class="a" style="left:41.20px;top:10.30px;width:10.90px;height:10.90px;background:#d5e3d3"></div><div class="a" style="left:51.50px;top:10.30px;width:10.90px;height:10.90px;background:#d0dccd"></div><div class="a" style="left:61.80px;top:10.30px;width:10.90px;height:10.90px;background:#d1dbcf"></div><div class="a" style="left:72.10px;top:10.30px;width:10.90px;height:10.90px;background:#d3dfd1"></div></div><div class="a" style="left:170.8px;top:72px;width:55.5px;height:78px;background:#ffffff;"></div><div class="a" style="left:182px;top:76.5px;width:33px;height:14px;background:#2a2c34;border-radius:9px 9px 0 0"></div><div class="a" style="left:204px;top:76.5px;width:11px;height:11px;background:#5e6168;border-radius:0 7px 0 0"></div><div class="a" style="left:170.8px;top:131px;width:55.5px;height:19px;background:#1f2030;border-radius:12px 12px 0 0"></div><div class="a" style="left:173px;top:87.1px;width:50px;height:62px;overflow:hidden;border-radius:0px;filter:blur(0.4px);"><div class="a" style="left:0.00px;top:0.00px;width:10.90px;height:10.90px;background:#c9c8cc"></div><div class="a" style="left:10.30px;top:0.00px;width:10.90px;height:10.90px;background:#8e6e66"></div><div class="a" style="left:20.60px;top:0.00px;width:10.90px;height:10.90px;background:#c49c8f"></div><div class="a" style="left:30.90px;top:0.00px;width:10.90px;height:10.90px;background:#6e5552"></div><div class="a" style="left:41.20px;top:0.00px;width:10.90px;height:10.90px;background:#c9c8cd"></div><div class="a" style="left:0.00px;top:10.30px;width:10.90px;height:10.90px;background:#cfcfd3"></div><div class="a" style="left:10.30px;top:10.30px;width:10.90px;height:10.90px;background:#a98a82"></div><div class="a" style="left:20.60px;top:10.30px;width:10.90px;height:10.90px;background:#c9a196"></div><div class="a" style="left:30.90px;top:10.30px;width:10.90px;height:10.90px;background:#9c7e7a"></div><div class="a" style="left:41.20px;top:10.30px;width:10.90px;height:10.90px;background:#dcdadf"></div><div class="a" style="left:0.00px;top:20.60px;width:10.90px;height:10.90px;background:#e2dcde"></div><div class="a" style="left:10.30px;top:20.60px;width:10.90px;height:10.90px;background:#c9a19a"></div><div class="a" style="left:20.60px;top:20.60px;width:10.90px;height:10.90px;background:#d1a69e"></div><div class="a" style="left:30.90px;top:20.60px;width:10.90px;height:10.90px;background:#c8a09a"></div><div class="a" style="left:41.20px;top:20.60px;width:10.90px;height:10.90px;background:#ede9ea"></div><div class="a" style="left:10.30px;top:30.90px;width:10.90px;height:10.90px;background:#b99088"></div><div class="a" style="left:20.60px;top:30.90px;width:10.90px;height:10.90px;background:#c89096"></div><div class="a" style="left:30.90px;top:30.90px;width:10.90px;height:10.90px;background:#cdb2ad"></div><div class="a" style="left:10.30px;top:41.20px;width:10.90px;height:10.90px;background:#6e5452"></div><div class="a" style="left:20.60px;top:41.20px;width:10.90px;height:10.90px;background:#b78e84"></div><div class="a" style="left:30.90px;top:41.20px;width:10.90px;height:10.90px;background:#5f5258"></div><div class="a" style="left:41.20px;top:41.20px;width:10.90px;height:10.90px;background:#8e8e98"></div><div class="a" style="left:10.30px;top:51.50px;width:10.90px;height:10.90px;background:#2b2632"></div><div class="a" style="left:20.60px;top:51.50px;width:10.90px;height:10.90px;background:#8c7470"></div><div class="a" style="left:30.90px;top:51.50px;width:10.90px;height:10.90px;background:#2a2834"></div></div><div class="a" style="left:0;top:0;width:227px;height:154.2px;box-shadow:inset 0 0 0 1px rgba(255,255,255,.85)"></div></div><div class="a pg" style="left:367px;top:165px;width:227px;height:155px"><div class="a" style="left:0;top:0;width:227px;height:155px;background:#e6f7ea"></div><svg class="a" style="left:0;top:0" width="227" height="155"><use href="#w2"/></svg><div class="a" style="left:0;top:0;width:227px;height:155px;background:radial-gradient(ellipse 60px 110px at 0 60%, rgba(120,215,140,.28), transparent),radial-gradient(ellipse 70px 60px at 100% 0, rgba(120,215,140,.22), transparent),radial-gradient(ellipse 70px 60px at 100% 100%, rgba(120,215,140,.2), transparent)"></div><div class="a" style="left:73.5px;top:9.8px;font-size:9.6px;line-height:1;color:#3a3a3a;white-space:nowrap;font-weight:bold;letter-spacing:-0.05px">准驾车型代号规定</div><div class="a" style="left:15.1px;top:23.0px;width:183px;height:91px;border:1.2px solid #5f665f"></div><div class="a" style="left:15.1px;top:34.375px;width:183px;height:1.1px;background:#646b64;"></div><div class="a" style="left:15.1px;top:45.75px;width:183px;height:1.1px;background:#646b64;"></div><div class="a" style="left:15.1px;top:57.125px;width:183px;height:1.1px;background:#646b64;"></div><div class="a" style="left:15.1px;top:68.5px;width:183px;height:1.1px;background:#646b64;"></div><div class="a" style="left:15.1px;top:79.875px;width:183px;height:1.1px;background:#646b64;"></div><div class="a" style="left:15.1px;top:91.25px;width:183px;height:1.1px;background:#646b64;"></div><div class="a" style="left:15.1px;top:102.625px;width:183px;height:1.1px;background:#646b64;"></div><div class="a" style="left:24.9px;top:23.0px;width:1.1px;height:91px;background:#646b64;"></div><div class="a" style="left:86.4px;top:23.0px;width:1.1px;height:91px;background:#646b64;"></div><div class="a" style="left:96.9px;top:23.0px;width:1.1px;height:91px;background:#646b64;"></div><div class="a" style="left:16.4px;top:25.4px;font-size:7.6px;line-height:1;color:#555;white-space:nowrap;font-family:'Liberation Serif',serif;letter-spacing:-0.5px">A1</div><div class="a" style="left:26.8px;top:25.4px;font-size:7.2px;line-height:1;color:#383838;white-space:nowrap;letter-spacing:-0.45px">大型客车和A3,B1,B2</div><div class="a" style="left:87.4px;top:25.4px;font-size:7.6px;line-height:1;color:#555;white-space:nowrap;font-family:'Liberation Serif',serif;letter-spacing:-0.5px">C4</div><div class="a" style="left:98.6px;top:25.4px;font-size:7.2px;line-height:1;color:#383838;white-space:nowrap;letter-spacing:-0.25px">三轮汽车</div><div class="a" style="left:16.4px;top:36.775px;font-size:7.6px;line-height:1;color:#555;white-space:nowrap;font-family:'Liberation Serif',serif;letter-spacing:-0.5px">A2</div><div class="a" style="left:26.8px;top:36.775px;font-size:7.2px;line-height:1;color:#383838;white-space:nowrap;letter-spacing:-0.45px">牵引车和B1,B2</div><div class="a" style="left:87.4px;top:36.775px;font-size:7.6px;line-height:1;color:#555;white-space:nowrap;font-family:'Liberation Serif',serif;letter-spacing:-0.5px">C5</div><div class="a" style="left:98.6px;top:36.775px;font-size:7.2px;line-height:1;color:#383838;white-space:nowrap;letter-spacing:-0.25px">残疾人专用小型自动挡载客汽车</div><div class="a" style="left:16.4px;top:48.15px;font-size:7.6px;line-height:1;color:#555;white-space:nowrap;font-family:'Liberation Serif',serif;letter-spacing:-0.5px">A3</div><div class="a" style="left:26.8px;top:48.15px;font-size:7.2px;line-height:1;color:#383838;white-space:nowrap;letter-spacing:-0.45px">城市公交车和C1</div><div class="a" style="left:89.6px;top:48.15px;font-size:7.6px;line-height:1;color:#555;white-space:nowrap;font-family:'Liberation Serif',serif;letter-spacing:-0.5px">D</div><div class="a" style="left:98.6px;top:48.15px;font-size:7.2px;line-height:1;color:#383838;white-space:nowrap;letter-spacing:-0.25px">普通三轮摩托车和E</div><div class="a" style="left:16.4px;top:59.525px;font-size:7.6px;line-height:1;color:#555;white-space:nowrap;font-family:'Liberation Serif',serif;letter-spacing:-0.5px">B1</div><div class="a" style="left:26.8px;top:59.525px;font-size:7.2px;line-height:1;color:#383838;white-space:nowrap;letter-spacing:-0.45px">中型客车和C1,M</div><div class="a" style="left:89.6px;top:59.525px;font-size:7.6px;line-height:1;color:#555;white-space:nowrap;font-family:'Liberation Serif',serif;letter-spacing:-0.5px">E</div><div class="a" style="left:98.6px;top:59.525px;font-size:7.2px;line-height:1;color:#383838;white-space:nowrap;letter-spacing:-0.25px">普通二轮摩托车和F</div><div class="a" style="left:16.4px;top:70.9px;font-size:7.6px;line-height:1;color:#555;white-space:nowrap;font-family:'Liberation Serif',serif;letter-spacing:-0.5px">B2</div><div class="a" style="left:26.8px;top:70.9px;font-size:7.2px;line-height:1;color:#383838;white-space:nowrap;letter-spacing:-0.45px">大型货车和C1,M</div><div class="a" style="left:89.6px;top:70.9px;font-size:7.6px;line-height:1;color:#555;white-space:nowrap;font-family:'Liberation Serif',serif;letter-spacing:-0.5px">F</div><div class="a" style="left:98.6px;top:70.9px;font-size:7.2px;line-height:1;color:#383838;white-space:nowrap;letter-spacing:-0.25px">轻便摩托车</div><div class="a" style="left:16.4px;top:82.275px;font-size:7.6px;line-height:1;color:#555;white-space:nowrap;font-family:'Liberation Serif',serif;letter-spacing:-0.5px">C1</div><div class="a" style="left:26.8px;top:82.275px;font-size:7.2px;line-height:1;color:#383838;white-space:nowrap;letter-spacing:-0.45px">小型汽车和C2,C3</div><div class="a" style="left:89.6px;top:82.275px;font-size:7.6px;line-height:1;color:#555;white-space:nowrap;font-family:'Liberation Serif',serif;letter-spacing:-0.5px">M</div><div class="a" style="left:98.6px;top:82.275px;font-size:7.2px;line-height:1;color:#383838;white-space:nowrap;letter-spacing:-0.25px">轮式自行机械车</div><div class="a" style="left:16.4px;top:93.65px;font-size:7.6px;line-height:1;color:#555;white-space:nowrap;font-family:'Liberation Serif',serif;letter-spacing:-0.5px">C2</div><div class="a" style="left:26.8px;top:93.65px;font-size:7.2px;line-height:1;color:#383838;white-space:nowrap;letter-spacing:-0.45px">小型自动挡汽车</div><div class="a" style="left:89.6px;top:93.65px;font-size:7.6px;line-height:1;color:#555;white-space:nowrap;font-family:'Liberation Serif',serif;letter-spacing:-0.5px">N</div><div class="a" style="left:98.6px;top:93.65px;font-size:7.2px;line-height:1;color:#383838;white-space:nowrap;letter-spacing:-0.25px">无轨电车</div><div class="a" style="left:16.4px;top:105.025px;font-size:7.6px;line-height:1;color:#555;white-space:nowrap;font-family:'Liberation Serif',serif;letter-spacing:-0.5px">C3</div><div class="a" style="left:26.8px;top:105.025px;font-size:7.2px;line-height:1;color:#383838;white-space:nowrap;letter-spacing:-0.45px">低速载货汽车和C4</div><div class="a" style="left:89.6px;top:105.025px;font-size:7.6px;line-height:1;color:#555;white-space:nowrap;font-family:'Liberation Serif',serif;letter-spacing:-0.5px">P</div><div class="a" style="left:98.6px;top:105.025px;font-size:7.2px;line-height:1;color:#383838;white-space:nowrap;letter-spacing:-0.25px">有轨电车</div><div class="a" style="left:0;top:0;width:227px;height:155px;filter:blur(0.25px)"><div class="a" style="left:24.00px;top:122.2px;width:1.3px;height:18.5px;background:#444"></div><div class="a" style="left:26.40px;top:122.2px;width:1.8px;height:18.5px;background:#3a3a3a"></div><div class="a" style="left:29.00px;top:122.2px;width:1.8px;height:18.5px;background:#444"></div><div class="a" style="left:32.30px;top:122.2px;width:1.8px;height:18.5px;background:#3a3a3a"></div><div class="a" style="left:34.90px;top:122.2px;width:1.3px;height:18.5px;background:#555"></div><div class="a" style="left:37.00px;top:122.2px;width:0.8px;height:18.5px;background:#2a2a2a"></div><div class="a" style="left:39.30px;top:122.2px;width:1.3px;height:18.5px;background:#444"></div><div class="a" style="left:42.10px;top:122.2px;width:1.8px;height:18.5px;background:#3a3a3a"></div><div class="a" style="left:45.40px;top:122.2px;width:0.8px;height:18.5px;background:#2a2a2a"></div><div class="a" style="left:47.00px;top:122.2px;width:0.8px;height:18.5px;background:#3a3a3a"></div><div class="a" style="left:48.60px;top:122.2px;width:1.8px;height:18.5px;background:#2a2a2a"></div><div class="a" style="left:51.50px;top:122.2px;width:1.0px;height:18.5px;background:#444"></div><div class="a" style="left:54.00px;top:122.2px;width:0.8px;height:18.5px;background:#3a3a3a"></div><div class="a" style="left:56.30px;top:122.2px;width:1.0px;height:18.5px;background:#444"></div><div class="a" style="left:58.10px;top:122.2px;width:0.8px;height:18.5px;background:#444"></div><div class="a" style="left:60.40px;top:122.2px;width:1.0px;height:18.5px;background:#444"></div><div class="a" style="left:62.90px;top:122.2px;width:0.8px;height:18.5px;background:#555"></div><div class="a" style="left:64.80px;top:122.2px;width:0.8px;height:18.5px;background:#555"></div><div class="a" style="left:66.40px;top:122.2px;width:0.8px;height:18.5px;background:#2a2a2a"></div><div class="a" style="left:68.30px;top:122.2px;width:0.8px;height:18.5px;background:#555"></div><div class="a" style="left:70.20px;top:122.2px;width:0.8px;height:18.5px;background:#2a2a2a"></div><div class="a" style="left:72.50px;top:122.2px;width:0.8px;height:18.5px;background:#3a3a3a"></div><div class="a" style="left:74.10px;top:122.2px;width:0.8px;height:18.5px;background:#444"></div><div class="a" style="left:76.00px;top:122.2px;width:1.3px;height:18.5px;background:#444"></div><div class="a" style="left:78.10px;top:122.2px;width:1.8px;height:18.5px;background:#3a3a3a"></div><div class="a" style="left:81.40px;top:122.2px;width:1.0px;height:18.5px;background:#555"></div><div class="a" style="left:83.20px;top:122.2px;width:1.0px;height:18.5px;background:#555"></div><div class="a" style="left:85.00px;top:122.2px;width:1.3px;height:18.5px;background:#2a2a2a"></div><div class="a" style="left:87.10px;top:122.2px;width:0.8px;height:18.5px;background:#2a2a2a"></div><div class="a" style="left:88.70px;top:122.2px;width:0.8px;height:18.5px;background:#444"></div><div class="a" style="left:90.60px;top:122.2px;width:0.8px;height:18.5px;background:#3a3a3a"></div><div class="a" style="left:92.50px;top:122.2px;width:1.8px;height:18.5px;background:#3a3a3a"></div><div class="a" style="left:95.80px;top:122.2px;width:0.8px;height:18.5px;background:#444"></div><div class="a" style="left:98.10px;top:122.2px;width:1.3px;height:18.5px;background:#2a2a2a"></div><div class="a" style="left:100.50px;top:122.2px;width:1.3px;height:18.5px;background:#3a3a3a"></div><div class="a" style="left:102.60px;top:122.2px;width:1.0px;height:18.5px;background:#555"></div><div class="a" style="left:104.40px;top:122.2px;width:0.8px;height:18.5px;background:#3a3a3a"></div><div class="a" style="left:106.30px;top:122.2px;width:1.8px;height:18.5px;background:#2a2a2a"></div><div class="a" style="left:108.90px;top:122.2px;width:0.8px;height:18.5px;background:#3a3a3a"></div><div class="a" style="left:110.80px;top:122.2px;width:1.0px;height:18.5px;background:#2a2a2a"></div><div class="a" style="left:113.30px;top:122.2px;width:1.0px;height:18.5px;background:#555"></div><div class="a" style="left:115.40px;top:122.2px;width:0.8px;height:18.5px;background:#2a2a2a"></div><div class="a" style="left:117.00px;top:122.2px;width:0.8px;height:18.5px;background:#3a3a3a"></div><div class="a" style="left:118.60px;top:122.2px;width:1.8px;height:18.5px;background:#555"></div><div class="a" style="left:121.50px;top:122.2px;width:1.8px;height:18.5px;background:#444"></div><div class="a" style="left:124.10px;top:122.2px;width:1.8px;height:18.5px;background:#444"></div><div class="a" style="left:127.40px;top:122.2px;width:0.8px;height:18.5px;background:#444"></div><div class="a" style="left:129.00px;top:122.2px;width:0.8px;height:18.5px;background:#555"></div></div><div class="a" style="left:25.3px;top:141px;font-size:6px;line-height:1;color:#222;white-space:nowrap;font-family:'Liberation Serif',serif;letter-spacing:4.1px">*3150010418238*</div><div class="a" style="left:140px;top:123.20px;width:58.2px;text-align:right;font-size:6.05px;line-height:1;color:#3a3a3a;white-space:nowrap;font-weight:bold">除公安交通管</div><div class="a" style="left:140px;top:129.35px;width:58.2px;text-align:right;font-size:6.05px;line-height:1;color:#3a3a3a;white-space:nowrap;font-weight:bold">理机关以外，其他</div><div class="a" style="left:140px;top:135.50px;width:58.2px;text-align:right;font-size:6.05px;line-height:1;color:#3a3a3a;white-space:nowrap;font-weight:bold">单位或个人一律不</div><div class="a" style="left:149.6px;top:141.65px;font-size:6.05px;line-height:1;color:#3a3a3a;white-space:nowrap;font-weight:bold">得扣留此证。</div><div class="a" style="left:178px;top:134px;width:26px;height:24px;border-radius:50%;background:radial-gradient(circle, rgba(190,235,200,.0) 30%, rgba(170,225,180,.7) 45%, rgba(200,240,210,.3) 70%, transparent 72%)"></div><div class="a" style="left:204.5px;top:0;width:4px;height:155px;background:rgba(240,250,245,.55)"></div><div class="a" style="left:205.6px;top:0;width:2.2px;height:155px;background:repeating-linear-gradient(rgba(47,111,112,.25) 0 16.5px, rgba(47,111,112,.85) 16.5px 26.5px);background-position:0 8.5px"></div><div class="a" style="left:0;top:0;width:227px;height:155px;opacity:.7"><div class="a" style="left:11.5px;top:100.10px;height:13.8px;font-size:13.8px;line-height:1;color:rgba(238,160,90,.5);white-space:nowrap;font-family:'Liberation Serif',serif;font-weight:bold;transform:rotate(-30deg);transform-origin:0 50%">证照用途：通过出租车驾驶</div><div class="a" style="left:20px;top:118.10px;height:13.8px;font-size:13.8px;line-height:1;color:rgba(238,160,90,.5);white-space:nowrap;font-family:'Liberation Serif',serif;font-weight:bold;transform:rotate(-30deg);transform-origin:0 50%">员背景审查</div><div class="a" style="left:24.5px;top:128.10px;height:13.8px;font-size:13.8px;line-height:1;color:rgba(238,160,90,.5);white-space:nowrap;font-family:'Liberation Serif',serif;font-weight:bold;transform:rotate(-30deg);transform-origin:0 50%">调取时间：2021年03月20日</div></div><div class="a" style="left:0;top:0;width:227px;height:155px;box-shadow:inset 0 0 0 1px rgba(255,255,255,.85)"></div></div><div class="a pg" style="left:367px;top:328.3px;width:227px;height:155px"><div class="a" style="left:0;top:0;width:227px;height:155px;background:#e6f7ea"></div><svg class="a" style="left:0;top:0" width="227" height="155"><use href="#w3"/></svg><div class="a" style="left:0;top:0;width:227px;height:155px;background:radial-gradient(ellipse 60px 110px at 0 60%, rgba(120,215,140,.28), transparent),radial-gradient(ellipse 70px 60px at 100% 0, rgba(120,215,140,.22), transparent),radial-gradient(ellipse 70px 60px at 100% 100%, rgba(120,215,140,.2), transparent)"></div><div class="a" style="left:32.5px;top:7.5px;font-size:10.8px;line-height:1;color:#444;white-space:nowrap;letter-spacing:-0.05px;font-weight:bold">中华人民共和国机动车驾驶证副页</div><div class="a" style="left:64.4px;top:24.7px;width:18px;height:7px;background:#8e8e98;"></div><div class="a" style="left:82px;top:18px;width:96px;height:17.7px;overflow:hidden;border-radius:6px;filter:blur(0.6px);"><div class="a" style="left:0.00px;top:0.00px;width:10.90px;height:10.90px;background:#c9d6c9"></div><div class="a" style="left:10.30px;top:0.00px;width:10.90px;height:10.90px;background:#d1e0d5"></div><div class="a" style="left:20.60px;top:0.00px;width:10.90px;height:10.90px;background:#cad7c8"></div><div class="a" style="left:30.90px;top:0.00px;width:10.90px;height:10.90px;background:#c1d0c6"></div><div class="a" style="left:41.20px;top:0.00px;width:10.90px;height:10.90px;background:#cedcd0"></div><div class="a" style="left:51.50px;top:0.00px;width:10.90px;height:10.90px;background:#c8d8cc"></div><div class="a" style="left:61.80px;top:0.00px;width:10.90px;height:10.90px;background:#d7e1d7"></div><div class="a" style="left:72.10px;top:0.00px;width:10.90px;height:10.90px;background:#d5dfd5"></div><div class="a" style="left:82.40px;top:0.00px;width:10.90px;height:10.90px;background:#c2cec2"></div><div class="a" style="left:92.70px;top:0.00px;width:10.90px;height:10.90px;background:#c4cfc6"></div><div class="a" style="left:0.00px;top:10.30px;width:10.90px;height:10.90px;background:#cedbcd"></div><div class="a" style="left:10.30px;top:10.30px;width:10.90px;height:10.90px;background:#c6d6c8"></div><div class="a" style="left:20.60px;top:10.30px;width:10.90px;height:10.90px;background:#c4d1c8"></div><div class="a" style="left:30.90px;top:10.30px;width:10.90px;height:10.90px;background:#c3d4c7"></div><div class="a" style="left:41.20px;top:10.30px;width:10.90px;height:10.90px;background:#d5e0d5"></div><div class="a" style="left:51.50px;top:10.30px;width:10.90px;height:10.90px;background:#c9d5c8"></div><div class="a" style="left:61.80px;top:10.30px;width:10.90px;height:10.90px;background:#cfddd0"></div><div class="a" style="left:72.10px;top:10.30px;width:10.90px;height:10.90px;background:#cedbce"></div><div class="a" style="left:82.40px;top:10.30px;width:10.90px;height:10.90px;background:#c1cfc5"></div><div class="a" style="left:92.70px;top:10.30px;width:10.90px;height:10.90px;background:#c4cec6"></div></div><div class="a" style="left:60.3px;top:31.6px;width:22px;height:15.1px;overflow:hidden;border-radius:3px;filter:blur(0.6px);"><div class="a" style="left:0.00px;top:0.00px;width:10.90px;height:10.90px;background:#a7b0ab"></div><div class="a" style="left:10.30px;top:0.00px;width:10.90px;height:10.90px;background:#b1bab3"></div><div class="a" style="left:20.60px;top:0.00px;width:10.90px;height:10.90px;background:#a5b0a5"></div><div class="a" style="left:0.00px;top:10.30px;width:10.90px;height:10.90px;background:#b0b7b1"></div><div class="a" style="left:10.30px;top:10.30px;width:10.90px;height:10.90px;background:#afbdb0"></div><div class="a" style="left:20.60px;top:10.30px;width:10.90px;height:10.90px;background:#acb7ac"></div></div><div class="a" style="left:139.8px;top:37px;width:74px;height:9.7px;overflow:hidden;border-radius:4px;filter:blur(0.6px);"><div class="a" style="left:0.00px;top:0.00px;width:10.90px;height:10.90px;background:#b9c5be"></div><div class="a" style="left:10.30px;top:0.00px;width:10.90px;height:10.90px;background:#bcc8be"></div><div class="a" style="left:20.60px;top:0.00px;width:10.90px;height:10.90px;background:#bcc8be"></div><div class="a" style="left:30.90px;top:0.00px;width:10.90px;height:10.90px;background:#becbc3"></div><div class="a" style="left:41.20px;top:0.00px;width:10.90px;height:10.90px;background:#becabf"></div><div class="a" style="left:51.50px;top:0.00px;width:10.90px;height:10.90px;background:#c2cbc4"></div><div class="a" style="left:61.80px;top:0.00px;width:10.90px;height:10.90px;background:#c7d2c5"></div><div class="a" style="left:72.10px;top:0.00px;width:10.90px;height:10.90px;background:#b6c6b9"></div></div><div class="a" style="left:14.5px;top:42.6px;font-size:7.2px;line-height:1;color:#4a4a4a;white-space:nowrap;font-weight:bold">姓名</div><div class="a" style="left:28.8px;top:49px;width:23px;height:0.7px;background:#a4a8a4;"></div><div class="a" style="left:89px;top:49px;width:19px;height:0.7px;background:#a4a8a4;"></div><div class="a" style="left:110.8px;top:42.6px;font-size:7.2px;line-height:1;color:#4a4a4a;white-space:nowrap;font-weight:bold;letter-spacing:-0.6px">档案编号</div><div class="a" style="left:139.8px;top:49px;width:74px;height:0.7px;background:#a4a8a4;"></div><div class="a" style="left:14.5px;top:63.6px;font-size:7.2px;line-height:1;color:#4a4a4a;white-space:nowrap;font-weight:bold">记录</div><div class="a" style="left:32.5px;top:59.5px;font-size:11px;line-height:1;color:#2a2a2a;white-space:nowrap;font-family:'Liberation Serif',serif;letter-spacing:-0.45px">实习期至2017年04月26日。</div><div class="a" style="left:14.3px;top:71px;width:199.5px;height:1px;background:repeating-linear-gradient(90deg,#a0a5a0 0 1px, transparent 1px 1.8px)"></div><div class="a" style="left:14.3px;top:93px;width:199.5px;height:1px;background:repeating-linear-gradient(90deg,#a0a5a0 0 1px, transparent 1px 1.8px)"></div><div class="a" style="left:14.3px;top:115px;width:199.5px;height:1px;background:repeating-linear-gradient(90deg,#a0a5a0 0 1px, transparent 1px 1.8px)"></div><div class="a" style="left:14.3px;top:137px;width:199.5px;height:1px;background:repeating-linear-gradient(90deg,#a0a5a0 0 1px, transparent 1px 1.8px)"></div><div class="a" style="left:11px;top:107.00px;height:14px;font-size:14px;line-height:1;color:rgba(238,160,90,.5);white-space:nowrap;font-family:'Liberation Serif',serif;font-weight:bold;transform:rotate(-33deg);transform-origin:0 50%">证照用途：通过出租车</div><div class="a" style="left:23px;top:126.00px;height:14px;font-size:14px;line-height:1;color:rgba(238,160,90,.5);white-space:nowrap;font-family:'Liberation Serif',serif;font-weight:bold;transform:rotate(-33deg);transform-origin:0 50%">员背景审查</div><div class="a" style="left:33px;top:137.00px;height:14px;font-size:14px;line-height:1;color:rgba(238,160,90,.5);white-space:nowrap;font-family:'Liberation Serif',serif;font-weight:bold;transform:rotate(-33deg);transform-origin:0 50%">调取时间：2021年03月20日</div><div class="a" style="left:0;top:0;width:227px;height:155px;box-shadow:inset 0 0 0 1px rgba(255,255,255,.85)"></div></div></div><div id="sscroll"></div><div class="a" style="left:197px;top:77px;width:8px;height:437px;background:#c1c1c1;"></div><svg class="a" style="left:198px;top:69px" width="6" height="4" viewBox="0 0 6 4"><path d="M0.5 3.5L3 0.8L5.5 3.5Z" fill="#8a8a8a"/></svg><svg class="a" style="left:198px;top:540px" width="6" height="4" viewBox="0 0 6 4"><path d="M0.5 0.5L3 3.2L5.5 0.5Z" fill="#505050"/></svg><div id="mscroll"></div><div class="a" style="left:1171px;top:77px;width:8px;height:271px;background:#c1c1c1;"></div><svg class="a" style="left:1172px;top:69px" width="6" height="4" viewBox="0 0 6 4"><path d="M0.5 3.5L3 0.8L5.5 3.5Z" fill="#8a8a8a"/></svg><svg class="a" style="left:1172px;top:540px" width="6" height="4" viewBox="0 0 6 4"><path d="M0.5 0.5L3 3.2L5.5 0.5Z" fill="#505050"/></svg></body></html>
